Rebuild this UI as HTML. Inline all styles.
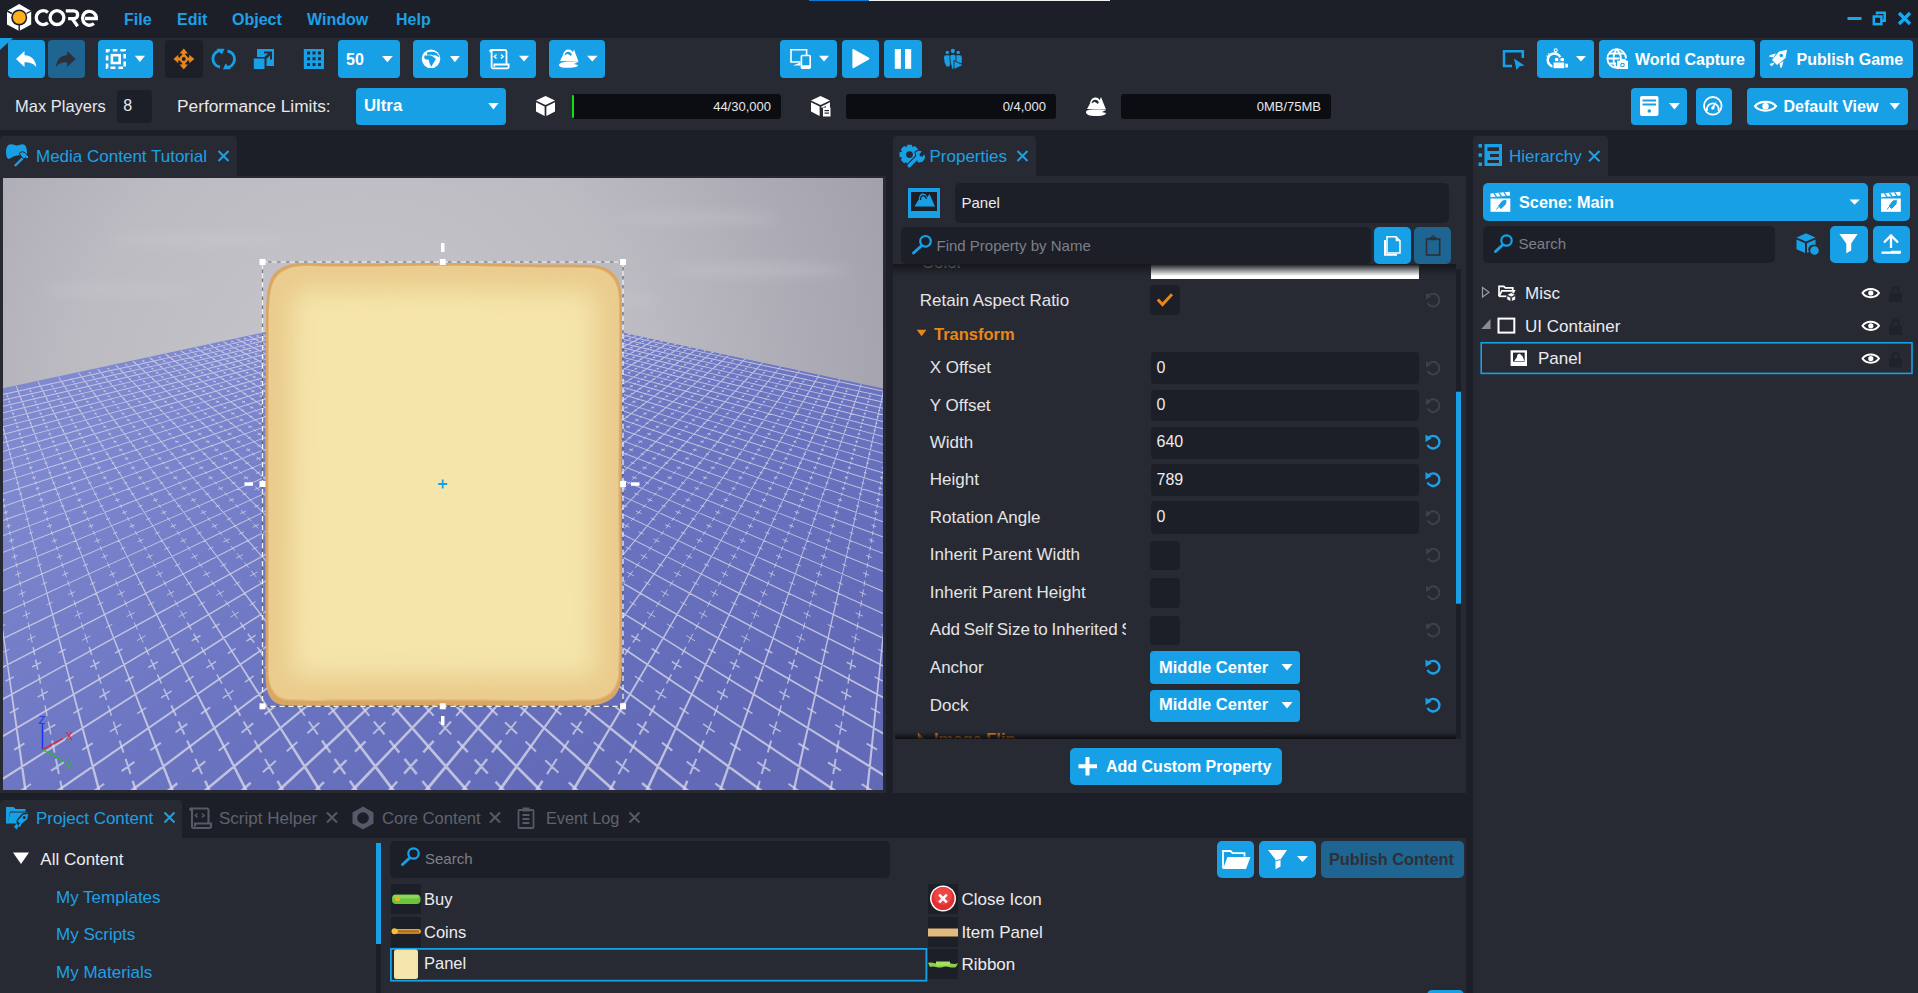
<!DOCTYPE html>
<html><head><meta charset="utf-8">
<style>
*{box-sizing:border-box;margin:0;padding:0}
html,body{width:1918px;height:993px;overflow:hidden;background:#1c1f27;font-family:"Liberation Sans",sans-serif;color:#e4e4e6}
.a{position:absolute}
.t{position:absolute;white-space:nowrap;line-height:20px;height:20px}
.btn{position:absolute;background:#18a0e6;border-radius:4px}
.dk{position:absolute;background:#1c1f27;border-radius:4px}
.b{font-weight:bold}
.blue{color:#1ea0e6}
.w{color:#fff}
svg{position:absolute;overflow:visible}
.caret{position:absolute;width:0;height:0;border-left:6px solid transparent;border-right:6px solid transparent;border-top:7px solid #fff}
</style></head>
<body>
<!-- MENU BAR -->
<div class="a" style="left:0;top:0;width:1918px;height:38px;background:#1c1f28"></div>
<div class="a" style="left:809px;top:0;width:60px;height:1.2px;background:#0b78d8"></div>
<div class="a" style="left:869px;top:0;width:241px;height:1.2px;background:#f0f0f0"></div>

<!-- TOOLBAR -->
<div class="a" style="left:0;top:38px;width:1918px;height:92px;background:#272a33"></div>

<!-- LOGO -->
<svg style="left:0;top:0" width="100" height="36">
<polygon points="19.2,4 31.2,11 31.2,24.5 19.2,31 7,24.5 7,11" fill="#fff"/>
<circle cx="19.2" cy="17.5" r="8" fill="#1c1f28"/>
<line x1="19.2" y1="25" x2="19.2" y2="31" stroke="#1c1f28" stroke-width="1.4"/>
<line x1="12" y1="13.5" x2="7" y2="11" stroke="#1c1f28" stroke-width="1.4"/>
<line x1="26.4" y1="13.5" x2="31.2" y2="11" stroke="#1c1f28" stroke-width="1.4"/>
<circle cx="19.3" cy="17.4" r="6.4" fill="#fdb01a"/>
<g fill="none" stroke="#fff" stroke-width="3.3">
<path d="M47.9,12.5 A6.95,6.95 0 1 0 47.9,22.7"/>
<circle cx="57" cy="17.6" r="6.9"/>
<path d="M65.8,10.85 H73.75 A3.9,3.9 0 0 1 73.75,18.65 H68.1"/>
<path d="M72.3,18.8 L77.6,26.2" stroke-linecap="butt"/>
<path d="M85,18.5 H97.9 M96.4,18.5 A6.95,6.95 0 1 0 93.9,23.6"/>
</g>
</svg>
<!-- MENU -->
<div class="t b blue" style="left:124px;top:9.8px;font-size:16px">File</div>
<div class="t b blue" style="left:177px;top:9.8px;font-size:16px">Edit</div>
<div class="t b blue" style="left:232px;top:9.8px;font-size:16px">Object</div>
<div class="t b blue" style="left:307px;top:9.8px;font-size:16px">Window</div>
<div class="t b blue" style="left:396px;top:9.8px;font-size:16px">Help</div>
<!-- window controls -->
<svg style="left:1840px;top:5px" width="78" height="28" viewBox="1840 5 78 28">
<rect x="1847.5" y="17" width="14" height="3" fill="#18a8ee"/>
<g fill="none" stroke="#18a8ee" stroke-width="2.5">
<path d="M1877,14.5 V12.7 H1884.7 V20.7 H1882"/>
<rect x="1873.8" y="16.5" width="7.6" height="7.6"/>
</g>
<path d="M1899,13 L1910,24 M1910,13 L1899,24" stroke="#18a8ee" stroke-width="3.3"/>
</svg>

<!-- TOOLBAR ROW 1 -->
<svg style="left:0;top:38px" width="14" height="13"><polygon points="0,0 13,0 0,12" fill="#18a0e6"/></svg>
<div class="btn" style="left:8px;top:40px;width:37px;height:38px"></div>
<div class="btn" style="left:48px;top:40px;width:37px;height:38px;background:#1f6591"></div>
<svg style="left:0;top:0" width="100" height="90">
<path d="M16,59 L24.5,51 L24.5,55.3 C31,55.3 35.5,59.5 36.3,67 C33,63.2 29.5,62.3 24.5,62.3 L24.5,67 Z" fill="#fff"/>
<path d="M75.6,59 L67.1,51 L67.1,55.3 C60.6,55.3 56.8,59.5 56,67 C59,63.2 62.1,62.3 67.1,62.3 L67.1,67 Z" fill="#2d3038"/>
</svg>
<div class="btn" style="left:98px;top:40px;width:55px;height:38px"></div>
<svg style="left:0;top:0" width="160" height="90">
<rect x="107.1" y="50.2" width="17.6" height="17.6" fill="none" stroke="#fff" stroke-width="2.6" stroke-dasharray="5 3 4.6 3" stroke-dashoffset="2.3"/>
<rect x="111.9" y="55.2" width="7.8" height="7.8" fill="none" stroke="#fff" stroke-width="2.6"/>
<polygon points="134.8,55.8 145,55.8 139.9,62" fill="#fff"/>
</svg>
<div class="dk" style="left:165px;top:40px;width:37.5px;height:38px"></div>
<svg style="left:0;top:0" width="340" height="90">
<g fill="#e8861a">
<path d="M183.75,48.5 L188,53.5 L185.3,53.5 L185.3,57.4 L189.2,57.4 L189.2,54.7 L194.4,59 L189.2,63.3 L189.2,60.6 L185.3,60.6 L185.3,64.5 L188,64.5 L183.75,69.5 L179.5,64.5 L182.2,64.5 L182.2,60.6 L178.3,60.6 L178.3,63.3 L173.5,59 L178.3,54.7 L178.3,57.4 L182.2,57.4 L182.2,53.5 L179.5,53.5 Z"/>
<circle cx="183.75" cy="59" r="4.2"/>
</g>
<circle cx="183.75" cy="59" r="1.9" fill="#1c1f27"/>
<g fill="none" stroke="#18a0e6" stroke-width="2.8">
<path d="M221,50.5 A8.3,8.3 0 0 0 220,67"/>
<path d="M226.5,67.5 A8.3,8.3 0 0 0 227.5,51"/>
</g>
<g fill="#18a0e6">
<polygon points="216.5,48.8 224.5,48.8 222,54.5"/>
<polygon points="231,69.2 223,69.2 225.5,63.5"/>
<rect x="253.8" y="58.5" width="10.7" height="10.5"/>
<path d="M257,49 H274 V66 H266.5 V59 L270,55.5 V59.5 H272 V51.5 H264 V53.5 H268 L264.5,57 H257 Z"/>
<path d="M303.8,49 H324 V69 H303.8 Z M307,51.6 V54.6 H310 V51.6 Z M312.5,51.6 V54.6 H315.5 V51.6 Z M318,51.6 V54.6 H321 V51.6 Z M307,57.2 V60.2 H310 V57.2 Z M312.5,57.2 V60.2 H315.5 V57.2 Z M318,57.2 V60.2 H321 V57.2 Z M307,62.9 V65.9 H310 V62.9 Z M312.5,62.9 V65.9 H315.5 V62.9 Z M318,62.9 V65.9 H321 V62.9 Z" fill-rule="evenodd"/>
</g>
</svg>
<div class="btn" style="left:338px;top:40px;width:62px;height:38px"></div>
<div class="t b w" style="left:346px;top:50.2px;font-size:16px">50</div>
<div class="btn" style="left:413px;top:40px;width:55px;height:38px"></div>
<div class="btn" style="left:480px;top:40px;width:56px;height:38px"></div>
<div class="btn" style="left:549px;top:40px;width:56px;height:38px"></div>
<svg style="left:0;top:0" width="620" height="90">
<g fill="#fff">
<polygon points="382,56 392.8,56 387.4,62.2"/>
<polygon points="450,56 459.8,56 454.9,62.2"/>
<polygon points="519,55.8 529,55.8 524,61.6"/>
<polygon points="587,55.8 597.7,55.8 592.3,61.6"/>
</g>
<circle cx="431" cy="58.8" r="9.3" fill="#fff"/>
<path d="M424.5,55.5 L430,55.3 L432,56 C433.3,57.3 434.8,58 436,58.8 L434.5,61.5 L432.6,64.5 L431.4,66.8 L429.8,64 L428.6,59.8 L425,59.2 L424.2,57.5 Z" fill="#18a0e6"/>
<path d="M426.8,52.8 C429.5,51.3 434,51.4 436.5,53 L438.6,55.2 L439.3,57.3 L437.3,56.2 C436,55.2 434.7,55 433.6,55.4 L431.6,54.8 L427.2,54.7 Z" fill="#18a0e6"/>
<path d="M433.5,56.6 L435.3,55.8 L436.6,56.8 L435,57.5 Z" fill="#fff"/>
<g fill="none" stroke="#fff" stroke-width="1.8">
<path d="M490,51.5 A1.5,1.5 0 0 1 492,50 H505 A1.6,1.6 0 0 1 506.5,51.5 V63.8 M490,51.5 H491.6 V67 A1.5,1.5 0 0 0 493.1,68.3 H507.2 A1.4,1.4 0 0 0 508.6,66.8 V64.5 H494.4 V66.8"/>
<path d="M496.5,54.5 L494.3,56.5 L496.5,58.5 M501,54.5 L503.2,56.5 L501,58.5" stroke-width="1.4"/>
</g>
<g fill="#fff">
<path d="M559,65 C559,62 566,61 578,62 L574,64 L578,65 C578,67.5 572,67.8 568,67.8 C562,67.8 559,67 559,65 Z"/>
<path d="M560,61 L563,55 C563.5,51.5 566,49.5 568.5,49.5 C571,49.5 573,51.5 573.3,54 L572,55 C571.5,53 570,51.8 568.3,51.8 C566,51.8 564.8,53.3 564.6,55.5 L567.5,53.8 L571,56 L574,49.5 L578.5,61.8 Z"/>
</g>
</svg>
<div class="btn" style="left:780px;top:40px;width:57px;height:38px"></div>
<div class="btn" style="left:842px;top:40px;width:37px;height:38px"></div>
<div class="btn" style="left:884px;top:40px;width:38px;height:38px"></div>
<svg style="left:0;top:0" width="970" height="90">
<g fill="#fff">
<polygon points="819,55.8 829,55.8 824,61.5"/>
<path d="M852.4,50 Q852.4,48.5 853.8,49.3 L869,57.8 Q870,58.6 869,59.4 L853.8,68 Q852.4,68.8 852.4,67.3 Z"/>
<rect x="894.8" y="49" width="6.1" height="19.8"/>
<rect x="905" y="49" width="6.2" height="19.8"/>
</g>
<g fill="none" stroke="#fff" stroke-width="1.6">
<path d="M800.5,62 H791 V49.8 H806.6 V55"/>
<rect x="801.4" y="55.5" width="8.8" height="12.6" rx="0.8"/>
</g>
<polygon points="793,65.5 800.5,62.5 800.5,65.5" fill="#fff"/>
<rect x="801.4" y="65.3" width="8.8" height="2.6" fill="#fff"/>
<g fill="#18a0e6">
<circle cx="947.3" cy="52.4" r="1.7"/><circle cx="952.8" cy="50.9" r="2.1"/><circle cx="958.2" cy="52.4" r="1.7"/>
<path d="M944,57.5 Q944,55.3 946,55.3 H948.8 Q950.5,55.3 950.5,57.5 V62.5 L949.3,66.5 H946.5 L944.6,62.5 Z"/>
<path d="M955,57.5 Q955,55.3 957,55.3 H959.8 Q961.8,55.3 961.8,57.5 V62.5 L959.5,63.5 H955 Z"/>
<path d="M949.8,56.5 Q949.8,54.3 952,54.3 H953.8 Q956,54.3 956,56.5 V61 L953.5,69.5 H952 L950.2,62 Z" stroke="#272a33" stroke-width="0.9"/>
<polygon points="954,60.6 963.4,65 954,69.4" stroke="#272a33" stroke-width="0.9"/>
</g>
<g fill="none" stroke="#18a0e6" stroke-width="2.5">
<path d="M1512,66 H1504 V51.2 H1522.8 V58"/>
</g>
<polygon points="1514,58.5 1524.5,65.5 1519.5,66.3 1516.5,70 Z" fill="#18a0e6"/>
</svg>
<div class="btn" style="left:1537px;top:40px;width:57px;height:38px"></div>
<div class="btn" style="left:1599px;top:40px;width:156px;height:38px"></div>
<div class="btn" style="left:1760px;top:40px;width:153px;height:38px"></div>
<div class="t b w" style="left:1635px;top:50.2px;font-size:16px">World Capture</div>
<div class="t b w" style="left:1796.5px;top:50.2px;font-size:16px">Publish Game</div>
<svg style="left:0;top:0" width="1918" height="130">
<polygon points="1576,56 1586,56 1581,61.5" fill="#fff"/>
<circle cx="1555.7" cy="50.3" r="1.5" fill="none" stroke="#fff" stroke-width="1.1"/>
<rect x="1555.1" y="51.6" width="1.2" height="2.6" fill="#fff"/>
<circle cx="1554.3" cy="60" r="6.6" fill="none" stroke="#fff" stroke-width="2.5"/>
<path d="M1548.2,53.3 L1549.5,54.6 M1546.5,55.8 L1548,56.5" stroke="#fff" stroke-width="1.1"/>
<g fill="#fff" stroke="#18a0e6" stroke-width="1.1">
<circle cx="1556.6" cy="59.6" r="2.5"/><circle cx="1562.2" cy="59.6" r="2.5"/>
<rect x="1553" y="62" width="11.8" height="6.8" rx="0.8"/>
</g>
<rect x="1565.3" y="63.7" width="2.6" height="3.8" fill="#fff"/>
<g fill="none" stroke="#fff" stroke-width="1.8">
<path d="M1617,67.8 A9.3,9.3 0 1 1 1626,58.5"/>
<path d="M1616.8,49.5 C1612.5,53 1612.5,64.5 1616.8,67.8 M1616.8,49.5 C1621,53 1621.5,59 1620.5,62 M1608,58.5 H1619.5 M1609.5,53.5 H1624 M1609.5,63.5 H1616"/>
</g>
<path d="M1617,60.8 H1620.5 L1622,59 H1625 L1626.5,60.8 H1628 V69 H1617 Z" fill="#fff"/>
<circle cx="1622.5" cy="65" r="2.3" fill="#18a0e6"/>
<circle cx="1622.5" cy="65" r="1.2" fill="#fff"/>
<path d="M1787,49.8 L1779,51.5 L1772,60 L1777,65 L1785.5,58 Z" fill="#fff"/>
<circle cx="1781.3" cy="55.5" r="1.8" fill="#18a0e6"/>
<path d="M1776,53.5 L1770,55 L1768.8,56.5 L1773.5,57.5 Z M1783.5,61 L1782,67 L1780.5,68.2 L1779.5,63.5 Z M1774.5,62.5 L1769.5,64 L1771.5,66.2 L1773.5,64.5 Z" fill="#fff"/>
</svg>

<!-- TOOLBAR ROW 2 -->
<div class="t" style="left:15px;top:96.2px;font-size:16.5px;color:#e8e8ea">Max Players</div>
<div class="dk" style="left:117px;top:90px;width:34.5px;height:32.5px"></div>
<div class="t" style="left:123.3px;top:95.5px;font-size:16px;color:#e8e8ea">8</div>
<div class="t" style="left:177px;top:96px;font-size:17.3px;color:#e8e8ea">Performance Limits:</div>
<div class="btn" style="left:356px;top:88px;width:150px;height:36.5px"></div>
<div class="t b w" style="left:364px;top:96px;font-size:16.8px">Ultra</div>
<div class="a" style="left:572px;top:94px;width:209px;height:25px;background:#0b0d12;border-radius:3px"></div>
<div class="a" style="left:572.2px;top:95px;width:1.6px;height:23px;background:#10e010;border-radius:1px"></div>
<div class="a" style="left:846px;top:94px;width:210px;height:25px;background:#0b0d12;border-radius:3px"></div>
<div class="a" style="left:1121px;top:94px;width:209.5px;height:25px;background:#0b0d12;border-radius:3px"></div>
<div class="t" style="left:600px;width:171px;text-align:right;top:96.5px;font-size:13px;color:#e8e8ea">44/30,000</div>
<div class="t" style="left:880px;width:166px;text-align:right;top:96.5px;font-size:13px;color:#e8e8ea">0/4,000</div>
<div class="t" style="left:1150px;width:171px;text-align:right;top:96.5px;font-size:13px;color:#e8e8ea">0MB/75MB</div>
<div class="btn" style="left:1631px;top:88px;width:56px;height:36.5px"></div>
<div class="btn" style="left:1695.5px;top:88px;width:36.5px;height:36.5px"></div>
<div class="btn" style="left:1747px;top:88px;width:161px;height:36.5px"></div>
<div class="t b w" style="left:1783.5px;top:97.2px;font-size:16px">Default View</div>
<svg style="left:0;top:0" width="1918" height="130">
<polygon points="488.3,103 498.6,103 493.4,109.5" fill="#fff"/>
<g fill="#fff">
<path d="M545.5,96 L555,100.5 L545.5,105 L536,100.5 Z"/>
<path d="M536,102.2 L544.6,106.5 V116 L536,111.5 Z"/>
<path d="M555,102.2 L546.4,106.5 V116 L555,111.5 Z"/>
<path d="M820.5,96 L830,100.5 L820.5,105 L811,100.5 Z"/>
<path d="M811,102.2 L819.6,106.5 V116 L811,111.5 Z"/>
<path d="M830,102.2 L821.4,106.5 V108 L826,106 V112 L830,110 Z"/>
<rect x="823" y="107.5" width="7.5" height="9" fill="#fff"/>
</g>
<rect x="824.5" y="110" width="4.5" height="1.2" fill="#272a33"/>
<rect x="824.5" y="112.5" width="4.5" height="1.2" fill="#272a33"/>
<g fill="#fff">
<path d="M1086,112 C1086,109.5 1092,109 1106,110 L1102,112 L1106,113 C1106,115.5 1100,116 1096,116 C1089,116 1086,114.5 1086,112 Z"/>
<path d="M1087,109 L1090,103.5 C1090.5,99.5 1093,97.5 1095.5,97.5 C1098,97.5 1100,99.5 1100.3,102 L1099,103 C1098.5,101 1097,99.8 1095.3,99.8 C1093,99.8 1091.8,101.3 1091.6,103.5 L1094.5,101.8 L1098,104 L1101,97 L1106,109.5 Z"/>
</g>
<rect x="1640" y="96" width="18.5" height="20" rx="2" fill="#fff"/>
<rect x="1642.5" y="99.5" width="13.5" height="2" fill="#18a0e6"/>
<rect x="1642.5" y="103.5" width="13.5" height="2" fill="#18a0e6"/>
<circle cx="1649.3" cy="111" r="1.8" fill="#18a0e6"/>
<polygon points="1669,103 1679.8,103 1674.4,109.6" fill="#fff"/>
<circle cx="1712.8" cy="105.8" r="8.8" fill="none" stroke="#fff" stroke-width="1.8"/>
<path d="M1707,111 A6,6 0 1 1 1718.6,111" fill="none" stroke="#fff" stroke-width="1.8"/>
<path d="M1711.5,107.8 L1716.5,101 L1714,108.6 Z" fill="#fff"/>
<circle cx="1712.8" cy="108" r="1.6" fill="#fff"/>
<path d="M1755,106.2 C1759,100.5 1772,100.5 1776,106.2 C1772,112 1759,112 1755,106.2 Z" fill="none" stroke="#fff" stroke-width="2.2"/>
<circle cx="1765.5" cy="106.2" r="3.2" fill="#fff"/>
<polygon points="1889.6,103 1900,103 1894.8,109.6" fill="#fff"/>
</svg>

<!-- PANELS -->
<!-- viewport -->
<div class="a" style="left:0;top:136px;width:237px;height:41px;background:#272a33;border-radius:4px 4px 0 0"></div>
<div class="a" style="left:0;top:176px;width:886px;height:617px;background:#272a33"></div>
<!-- properties -->
<div class="a" style="left:893px;top:136px;width:143px;height:41px;background:#272a33;border-radius:4px 4px 0 0"></div>
<div class="a" style="left:893px;top:176px;width:573px;height:617px;background:#272a33"></div>
<!-- hierarchy -->
<div class="a" style="left:1473px;top:136px;width:135px;height:41px;background:#272a33;border-radius:4px 4px 0 0"></div>
<div class="a" style="left:1473px;top:176px;width:445px;height:817px;background:#272a33"></div>
<!-- bottom -->
<div class="a" style="left:0;top:800px;width:182px;height:38px;background:#272a33;border-radius:4px 4px 0 0"></div>
<div class="a" style="left:0;top:838px;width:1466px;height:155px;background:#272a33"></div>

<!-- VIEWPORT -->
<svg style="left:3px;top:178px;overflow:hidden" width="880" height="612" viewBox="3 178 880 612">
<defs>
<radialGradient id="sky" gradientUnits="userSpaceOnUse" cx="360" cy="400" r="580"><stop offset="0" stop-color="#c8c7cd"/><stop offset="0.5" stop-color="#bcbbc2"/><stop offset="1" stop-color="#a09fab"/></radialGradient>
<linearGradient id="floor" gradientUnits="userSpaceOnUse" x1="300" y1="320" x2="560" y2="800"><stop offset="0" stop-color="#7f89d0"/><stop offset="0.5" stop-color="#6c76c2"/><stop offset="1" stop-color="#626ab8"/></linearGradient>
<clipPath id="fc"><polygon points="443,294 -2000,817 883,2000 2800,800"/></clipPath>
<radialGradient id="pg" cx="0.58" cy="0.42" r="0.62"><stop offset="0" stop-color="#f7e9b3"/><stop offset="0.6" stop-color="#f5e4aa"/><stop offset="0.9" stop-color="#efd59a"/><stop offset="1" stop-color="#e6c689"/></radialGradient>
<filter id="blur4"><feGaussianBlur stdDeviation="6"/></filter>
<filter id="blur1"><feGaussianBlur stdDeviation="0.75"/></filter>
</defs>
<rect x="3" y="178" width="880" height="612" fill="url(#sky)"/>
<g filter="url(#blur4)" fill="#cfced4" opacity="0.35">
<ellipse cx="200" cy="240" rx="90" ry="6"/><ellipse cx="120" cy="290" rx="80" ry="5"/><ellipse cx="700" cy="218" rx="80" ry="5"/><ellipse cx="760" cy="270" rx="90" ry="6"/><ellipse cx="600" cy="300" rx="60" ry="5"/>
</g>
<polygon points="443,294 -2000,817 -2000,2000 2800,2000 2800,800" fill="url(#floor)"/>
<g clip-path="url(#fc)" filter="url(#blur1)">
<g fill="#d4d5e6" fill-opacity="0.8">
<path d="M449.5,294.9 L434.6,298.2 L418.8,301.8 L401.8,305.5 L383.8,309.5 L364.4,313.8 L343.6,318.4 L321.3,323.4 L297.1,328.8 L271.0,334.6 L242.6,340.9 L211.6,347.7 L177.7,355.3 L140.5,363.5 L99.4,372.6 L53.7,382.8 L2.7,394.1 L-44.5,404.6 L-44.3,405.5 L2.9,395.0 L53.9,383.7 L99.6,373.5 L140.7,364.4 L177.9,356.1 L211.8,348.6 L242.8,341.7 L271.2,335.4 L297.3,329.6 L321.5,324.3 L343.8,319.3 L364.6,314.7 L384.0,310.4 L402.0,306.4 L419.0,302.6 L434.8,299.1 L449.7,295.8Z M456.3,296.4 L441.6,299.7 L426.0,303.3 L409.3,307.1 L391.5,311.1 L372.4,315.5 L351.9,320.2 L329.9,325.2 L306.1,330.6 L280.3,336.5 L252.3,342.9 L221.8,349.9 L188.4,357.5 L151.7,365.9 L111.1,375.1 L66.1,385.4 L15.8,396.8 L-40.6,409.7 L-40.4,410.6 L16.0,397.7 L66.3,386.2 L111.3,376.0 L151.9,366.7 L188.6,358.4 L222.0,350.7 L252.5,343.8 L280.5,337.4 L306.3,331.5 L330.1,326.1 L352.1,321.0 L372.6,316.4 L391.7,312.0 L409.5,308.0 L426.2,304.2 L441.8,300.6 L456.5,297.2Z M463.3,297.8 L448.8,301.2 L433.4,304.8 L417.0,308.7 L399.4,312.8 L380.6,317.2 L360.5,321.9 L338.7,327.0 L315.3,332.5 L289.9,338.5 L262.3,345.0 L232.2,352.0 L199.3,359.8 L163.1,368.2 L123.2,377.6 L78.8,388.0 L29.3,399.6 L-26.3,412.7 L-46.4,417.4 L-46.2,418.3 L-26.1,413.6 L29.5,400.5 L79.0,388.9 L123.4,378.5 L163.4,369.1 L199.5,360.6 L232.4,352.9 L262.5,345.9 L290.1,339.4 L315.5,333.4 L338.9,327.9 L360.7,322.8 L380.8,318.1 L399.6,313.7 L417.2,309.6 L433.6,305.7 L449.0,302.1 L463.5,298.7Z M470.5,299.3 L456.2,302.8 L441.0,306.4 L424.9,310.3 L407.6,314.5 L389.1,319.0 L369.2,323.8 L347.8,328.9 L324.7,334.5 L299.7,340.6 L272.6,347.1 L243.0,354.3 L210.6,362.1 L174.9,370.7 L135.6,380.2 L91.9,390.8 L43.2,402.5 L-11.6,415.8 L-41.6,423.0 L-41.4,423.9 L-11.4,416.7 L43.4,403.4 L92.1,391.6 L135.8,381.1 L175.1,371.6 L210.8,363.0 L243.2,355.2 L272.8,348.0 L299.9,341.4 L324.9,335.4 L348.0,329.8 L369.4,324.7 L389.3,319.9 L407.8,315.4 L425.1,311.2 L441.2,307.3 L456.4,303.6 L470.7,300.2Z M477.8,300.9 L463.8,304.3 L448.9,308.1 L433.0,312.0 L416.0,316.3 L397.8,320.8 L378.2,325.7 L357.2,330.9 L334.4,336.6 L309.8,342.7 L283.1,349.3 L254.0,356.6 L222.1,364.5 L187.1,373.2 L148.3,382.9 L105.4,393.6 L57.4,405.5 L3.5,418.9 L-46.8,431.5 L-46.6,432.3 L3.7,419.8 L57.6,406.4 L105.6,394.4 L148.6,383.7 L187.3,374.1 L222.3,365.4 L254.2,357.5 L283.3,350.2 L310.1,343.5 L334.7,337.4 L357.4,331.8 L378.4,326.5 L398.0,321.7 L416.2,317.1 L433.2,312.9 L449.1,308.9 L464.0,305.2 L478.0,301.7Z M485.4,302.4 L471.6,306.0 L456.9,309.7 L441.3,313.8 L424.6,318.1 L406.7,322.7 L387.4,327.6 L366.8,332.9 L344.4,338.6 L320.2,344.8 L294.0,351.6 L265.3,358.9 L234.0,367.0 L199.5,375.8 L161.5,385.6 L119.2,396.5 L72.0,408.6 L19.0,422.2 L-40.9,437.6 L-40.7,438.5 L19.3,423.1 L72.3,409.4 L119.4,397.3 L161.7,386.5 L199.7,376.7 L234.2,367.9 L265.5,359.8 L294.2,352.5 L320.5,345.7 L344.6,339.5 L367.0,333.8 L387.7,328.5 L406.9,323.5 L424.8,318.9 L441.5,314.6 L457.2,310.6 L471.8,306.8 L485.6,303.3Z M493.2,304.1 L479.6,307.7 L465.2,311.5 L449.9,315.6 L433.4,319.9 L415.8,324.6 L397.0,329.6 L376.6,335.0 L354.7,340.8 L330.9,347.1 L305.1,353.9 L277.0,361.4 L246.2,369.5 L212.3,378.5 L174.9,388.4 L133.4,399.4 L87.1,411.7 L35.0,425.5 L-23.9,441.1 L-45.3,446.8 L-45.1,447.7 L-23.7,442.0 L35.3,426.4 L87.3,412.6 L133.7,400.3 L175.2,389.3 L212.6,379.4 L246.4,370.4 L277.2,362.3 L305.3,354.8 L331.2,347.9 L354.9,341.7 L376.9,335.8 L397.2,330.4 L416.1,325.4 L433.7,320.8 L450.1,316.4 L465.5,312.3 L479.9,308.5 L493.4,304.9Z M501.2,305.7 L487.9,309.4 L473.8,313.3 L458.7,317.4 L442.5,321.8 L425.3,326.5 L406.7,331.6 L386.8,337.1 L365.2,343.0 L341.9,349.4 L316.6,356.3 L289.0,363.9 L258.7,372.2 L225.5,381.3 L188.8,391.3 L148.1,402.5 L102.6,415.0 L51.5,429.0 L-6.4,444.8 L-49.4,456.6 L-49.1,457.5 L-6.1,445.7 L51.7,429.8 L102.8,415.8 L148.3,403.4 L189.0,392.2 L225.7,382.1 L259.0,373.0 L289.2,364.8 L316.8,357.2 L342.2,350.2 L365.5,343.9 L387.0,338.0 L407.0,332.5 L425.5,327.4 L442.8,322.7 L458.9,318.3 L474.0,314.1 L488.1,310.3 L501.4,306.6Z M509.5,307.5 L496.4,311.2 L482.5,315.1 L467.7,319.3 L451.9,323.8 L435.0,328.6 L416.8,333.7 L397.2,339.3 L376.1,345.3 L353.3,351.7 L328.4,358.8 L301.3,366.5 L271.7,374.9 L239.1,384.1 L203.1,394.3 L163.1,405.6 L118.5,418.3 L68.4,432.5 L11.7,448.6 L-41.7,463.7 L-41.4,464.6 L11.9,449.4 L68.7,433.4 L118.8,419.1 L163.4,406.5 L203.3,395.2 L239.3,385.0 L271.9,375.7 L301.6,367.3 L328.6,359.7 L353.5,352.6 L376.4,346.1 L397.5,340.1 L417.1,334.6 L435.2,329.4 L452.2,324.6 L468.0,320.2 L482.8,316.0 L496.7,312.0 L509.7,308.3Z M517.9,309.2 L505.2,313.0 L491.6,317.0 L477.1,321.2 L461.6,325.8 L445.0,330.7 L427.2,335.9 L408.0,341.5 L387.3,347.6 L364.9,354.2 L340.6,361.3 L314.0,369.1 L285.0,377.7 L253.1,387.0 L217.8,397.4 L178.7,408.9 L135.0,421.7 L85.8,436.1 L30.3,452.5 L-33.2,471.1 L-44.6,474.4 L-44.4,475.3 L-32.9,471.9 L30.5,453.3 L86.1,437.0 L135.2,422.6 L178.9,409.7 L218.0,398.2 L253.3,387.9 L285.2,378.5 L314.3,370.0 L340.8,362.2 L365.2,355.0 L387.6,348.5 L408.3,342.4 L427.4,336.8 L445.3,331.5 L461.8,326.7 L477.3,322.1 L491.8,317.8 L505.4,313.9 L518.2,310.1Z M526.7,311.1 L514.2,314.9 L500.9,318.9 L486.7,323.3 L471.5,327.9 L455.3,332.8 L437.9,338.1 L419.1,343.8 L398.9,350.0 L376.9,356.7 L353.1,363.9 L327.1,371.9 L298.7,380.5 L267.5,390.0 L232.9,400.5 L194.6,412.2 L151.9,425.2 L103.8,439.9 L49.4,456.5 L-12.7,475.4 L-47.1,485.9 L-46.9,486.7 L-12.4,476.2 L49.7,457.3 L104.1,440.7 L152.1,426.1 L194.9,413.1 L233.2,401.4 L267.7,390.9 L299.0,381.4 L327.4,372.7 L353.4,364.8 L377.2,357.6 L399.1,350.9 L419.4,344.7 L438.1,339.0 L455.6,333.7 L471.8,328.7 L487.0,324.1 L501.2,319.8 L514.5,315.7 L527.0,311.9Z M535.7,313.0 L523.5,316.8 L510.5,320.9 L496.6,325.3 L481.8,330.0 L465.9,335.0 L448.9,340.4 L430.6,346.2 L410.8,352.5 L389.3,359.3 L366.0,366.6 L340.6,374.7 L312.8,383.5 L282.3,393.1 L248.6,403.8 L211.1,415.7 L169.3,428.9 L122.3,443.8 L69.1,460.6 L8.5,479.8 L-49.1,498.0 L-48.8,498.8 L8.7,480.6 L69.4,461.4 L122.6,444.6 L169.6,429.7 L211.4,416.5 L248.8,404.7 L282.6,394.0 L313.1,384.3 L340.9,375.5 L366.3,367.5 L389.6,360.1 L411.0,353.4 L430.8,347.1 L449.2,341.3 L466.2,335.9 L482.1,330.9 L496.9,326.2 L510.8,321.8 L523.8,317.7 L536.0,313.8Z M545.0,314.9 L533.1,318.8 L520.4,323.0 L506.9,327.5 L492.4,332.2 L476.9,337.3 L460.3,342.8 L442.4,348.7 L423.0,355.1 L402.1,361.9 L379.4,369.4 L354.6,377.6 L327.4,386.5 L297.6,396.3 L264.7,407.2 L228.1,419.2 L187.3,432.6 L141.4,447.7 L89.5,464.8 L30.3,484.3 L-38.0,506.8 L-50.4,510.9 L-50.1,511.7 L-37.7,507.6 L30.5,485.2 L89.8,465.7 L141.7,448.6 L187.6,433.5 L228.4,420.1 L265.0,408.0 L297.9,397.2 L327.7,387.4 L354.8,378.4 L379.6,370.3 L402.4,362.8 L423.3,355.9 L442.6,349.6 L460.5,343.7 L477.2,338.2 L492.7,333.1 L507.1,328.3 L520.7,323.9 L533.4,319.7 L545.3,315.8Z M554.6,316.9 L543.0,320.9 L530.6,325.1 L517.4,329.7 L503.3,334.5 L488.2,339.7 L472.0,345.3 L454.5,351.2 L435.7,357.7 L415.3,364.7 L393.1,372.3 L368.9,380.6 L342.5,389.7 L313.4,399.6 L281.3,410.6 L245.6,422.9 L205.8,436.5 L161.1,451.9 L110.5,469.2 L52.7,489.0 L-13.8,511.8 L-51.0,524.6 L-50.7,525.5 L-13.5,512.7 L53.0,489.9 L110.8,470.1 L161.4,452.7 L206.1,437.4 L245.9,423.7 L281.6,411.5 L313.7,400.5 L342.8,390.5 L369.2,381.4 L393.4,373.2 L415.6,365.6 L436.0,358.6 L454.8,352.1 L472.3,346.1 L488.5,340.5 L503.6,335.4 L517.7,330.5 L530.9,326.0 L543.3,321.7 L554.9,317.8Z M564.5,319.0 L553.2,323.0 L541.2,327.3 L528.3,331.9 L514.6,336.9 L499.9,342.1 L484.1,347.8 L467.1,353.9 L448.7,360.4 L428.9,367.5 L407.3,375.3 L383.8,383.7 L358.0,392.9 L329.7,403.0 L298.4,414.2 L263.7,426.7 L225.0,440.5 L181.5,456.1 L132.2,473.7 L75.9,493.9 L11.2,517.1 L-50.8,539.3 L-50.5,540.1 L11.5,517.9 L76.2,494.7 L132.5,474.6 L181.8,457.0 L225.3,441.4 L264.0,427.5 L298.7,415.1 L330.0,403.9 L358.3,393.8 L384.1,384.5 L407.6,376.1 L429.2,368.4 L449.0,361.3 L467.4,354.7 L484.4,348.6 L500.2,343.0 L514.9,337.7 L528.6,332.8 L541.5,328.2 L553.5,323.9 L564.8,319.8Z M574.8,321.1 L563.8,325.2 L552.1,329.6 L539.6,334.3 L526.2,339.3 L511.9,344.6 L496.6,350.4 L480.1,356.6 L462.2,363.3 L442.9,370.5 L421.9,378.3 L399.1,386.9 L374.0,396.3 L346.5,406.6 L316.2,417.9 L282.4,430.6 L244.8,444.7 L202.5,460.5 L154.6,478.4 L99.9,498.9 L37.0,522.4 L-36.3,549.9 L-49.8,554.9 L-49.4,555.7 L-36.0,550.7 L37.3,523.3 L100.2,499.7 L154.9,479.3 L202.8,461.3 L245.1,445.5 L282.7,431.4 L316.5,418.8 L346.9,407.4 L374.4,397.1 L399.4,387.7 L422.3,379.2 L443.2,371.3 L462.5,364.1 L480.4,357.4 L496.9,351.2 L512.2,345.5 L526.5,340.1 L539.9,335.1 L552.4,330.5 L564.1,326.1 L575.1,322.0Z M585.4,323.3 L574.7,327.5 L563.3,332.0 L551.2,336.7 L538.2,341.8 L524.4,347.3 L509.5,353.1 L493.5,359.4 L476.2,366.2 L457.4,373.5 L437.1,381.5 L414.9,390.2 L390.6,399.7 L363.9,410.2 L334.5,421.8 L301.7,434.6 L265.2,448.9 L224.2,465.0 L177.7,483.3 L124.7,504.1 L63.6,528.0 L-7.5,555.9 L-47.6,571.6 L-47.3,572.5 L-7.2,556.8 L63.9,528.9 L125.0,504.9 L178.0,484.1 L224.5,465.9 L265.5,449.8 L302.1,435.4 L334.8,422.6 L364.3,411.0 L391.0,400.6 L415.2,391.0 L437.4,382.3 L457.8,374.4 L476.5,367.0 L493.8,360.2 L509.8,353.9 L524.7,348.1 L538.6,342.6 L551.5,337.6 L563.6,332.8 L575.0,328.4 L585.7,324.2Z M596.3,325.6 L585.9,329.9 L574.9,334.4 L563.2,339.2 L550.7,344.4 L537.3,349.9 L522.8,355.9 L507.3,362.3 L490.6,369.2 L472.4,376.7 L452.7,384.8 L431.3,393.6 L407.8,403.3 L381.9,414.0 L353.4,425.7 L321.7,438.8 L286.3,453.3 L246.6,469.7 L201.6,488.3 L150.3,509.4 L91.2,533.8 L22.3,562.1 L-44.4,589.6 L-44.0,590.5 L22.7,563.0 L91.5,534.6 L150.6,510.2 L202.0,489.1 L246.9,470.5 L286.7,454.2 L322.1,439.6 L353.7,426.5 L382.3,414.8 L408.1,404.1 L431.6,394.5 L453.1,385.6 L472.8,377.5 L490.9,370.0 L507.7,363.1 L523.2,356.7 L537.6,350.8 L551.0,345.2 L563.6,340.1 L575.3,335.2 L586.3,330.7 L596.6,326.4Z M607.6,328.0 L597.6,332.3 L587.0,336.9 L575.7,341.8 L563.5,347.1 L550.6,352.7 L536.7,358.8 L521.7,365.3 L505.5,372.3 L488.0,379.9 L468.9,388.2 L448.2,397.2 L425.5,407.0 L400.5,417.8 L373.0,429.8 L342.4,443.1 L308.2,457.9 L269.8,474.6 L226.4,493.4 L176.8,514.9 L119.7,539.7 L53.1,568.5 L-25.3,602.5 L-54.7,615.2 L-54.2,616.3 L-24.9,603.5 L53.5,569.4 L120.0,540.6 L177.1,515.8 L226.7,494.2 L270.2,475.4 L308.6,458.7 L342.7,443.9 L373.3,430.6 L400.9,418.7 L425.8,407.8 L448.6,398.0 L469.3,389.0 L488.3,380.7 L505.8,373.1 L522.0,366.1 L537.0,359.6 L550.9,353.6 L563.9,347.9 L576.0,342.7 L587.3,337.8 L598.0,333.1 L608.0,328.8Z M619.3,330.4 L609.7,334.8 L599.4,339.5 L588.5,344.5 L576.9,349.9 L564.4,355.6 L550.9,361.8 L536.5,368.4 L520.9,375.5 L504.0,383.3 L485.7,391.7 L465.7,400.8 L443.8,410.8 L419.8,421.9 L393.2,434.0 L363.7,447.6 L330.8,462.6 L293.8,479.6 L252.0,498.8 L204.2,520.7 L149.2,545.9 L85.1,575.2 L9.5,609.8 L-48.9,636.5 L-48.4,637.6 L10.0,610.8 L85.5,576.1 L149.6,546.7 L204.6,521.5 L252.4,499.6 L294.2,480.4 L331.2,463.5 L364.1,448.4 L393.6,434.9 L420.2,422.7 L444.2,411.7 L466.1,401.6 L486.1,392.5 L504.4,384.1 L521.3,376.3 L536.9,369.2 L551.3,362.6 L564.7,356.4 L577.2,350.7 L588.9,345.4 L599.8,340.4 L610.1,335.7 L619.7,331.3Z M631.4,333.0 L622.2,337.5 L612.3,342.2 L601.9,347.3 L590.6,352.8 L578.6,358.6 L565.8,364.9 L551.9,371.6 L536.9,378.9 L520.7,386.7 L503.1,395.3 L483.9,404.6 L462.8,414.8 L439.7,426.0 L414.2,438.4 L385.9,452.2 L354.3,467.5 L318.7,484.8 L278.5,504.3 L232.6,526.6 L179.7,552.2 L118.1,582.1 L45.5,617.3 L-41.4,659.4 L-40.8,660.6 L46.0,618.4 L118.6,583.1 L180.1,553.1 L233.0,527.4 L278.9,505.1 L319.1,485.6 L354.7,468.3 L386.3,453.0 L414.6,439.2 L440.1,426.8 L463.2,415.6 L484.3,405.4 L503.5,396.1 L521.1,387.5 L537.3,379.7 L552.3,372.4 L566.1,365.7 L579.0,359.4 L591.0,353.6 L602.2,348.1 L612.7,343.0 L622.6,338.3 L631.8,333.8Z M644.0,335.6 L635.1,340.2 L625.7,345.0 L615.7,350.2 L604.9,355.8 L593.4,361.7 L581.1,368.1 L567.8,374.9 L553.5,382.3 L537.9,390.3 L521.1,399.1 L502.7,408.5 L482.5,418.9 L460.4,430.4 L436.0,443.0 L408.8,457.0 L378.5,472.6 L344.5,490.1 L306.0,510.0 L262.0,532.7 L211.3,558.8 L152.4,589.2 L82.8,625.0 L-0.4,667.9 L-48.5,692.6 L-47.8,694.1 L0.3,669.2 L83.4,626.2 L152.9,590.3 L211.8,559.8 L262.5,533.6 L306.4,510.9 L344.9,491.0 L379.0,473.4 L409.3,457.8 L436.4,443.8 L460.8,431.2 L482.9,419.7 L503.1,409.3 L521.5,399.9 L538.3,391.1 L553.9,383.1 L568.2,375.7 L581.5,368.9 L593.9,362.5 L605.3,356.6 L616.1,351.0 L626.1,345.8 L635.6,341.0 L644.4,336.4Z M657.0,338.3 L648.6,343.0 L639.6,347.9 L630.0,353.2 L619.8,358.9 L608.8,364.9 L597.0,371.4 L584.3,378.4 L570.6,385.9 L555.8,394.1 L539.7,403.0 L522.2,412.6 L503.0,423.2 L481.8,434.8 L458.5,447.7 L432.6,461.9 L403.7,477.8 L371.2,495.7 L334.5,515.9 L292.5,539.0 L244.2,565.6 L187.9,596.6 L121.5,633.1 L42.1,676.7 L-54.7,729.9 L-53.8,731.5 L42.8,678.1 L122.2,634.3 L188.5,597.7 L244.7,566.7 L293.0,540.0 L335.0,516.9 L371.7,496.6 L404.2,478.7 L433.1,462.8 L459.0,448.5 L482.3,435.6 L503.4,424.0 L522.6,413.4 L540.2,403.7 L556.3,394.9 L571.1,386.7 L584.8,379.2 L597.4,372.2 L609.2,365.7 L620.2,359.6 L630.4,354.0 L640.0,348.7 L649.0,343.8 L657.5,339.1Z M670.5,341.2 L662.5,345.9 L654.0,350.9 L644.9,356.3 L635.1,362.1 L624.7,368.2 L613.5,374.9 L601.5,382.0 L588.5,389.7 L574.4,398.0 L559.1,407.0 L542.4,416.9 L524.1,427.6 L504.1,439.5 L481.9,452.6 L457.3,467.1 L429.8,483.3 L399.0,501.5 L364.0,522.1 L324.1,545.6 L278.2,572.7 L224.7,604.3 L161.7,641.4 L86.2,685.9 L-5.8,740.1 L-41.1,760.9 L-40.0,762.7 L-4.8,741.8 L87.0,687.4 L162.4,642.7 L225.4,605.4 L278.9,573.8 L324.8,546.7 L364.6,523.1 L399.5,502.4 L430.4,484.2 L457.8,467.9 L482.4,453.4 L504.5,440.3 L524.6,428.4 L542.9,417.6 L559.5,407.8 L574.8,398.7 L588.9,390.4 L601.9,382.7 L614.0,375.6 L625.2,369.0 L635.6,362.9 L645.3,357.1 L654.4,351.7 L663.0,346.7 L671.0,341.9Z M684.6,344.1 L677.0,348.9 L668.9,354.1 L660.3,359.6 L651.1,365.4 L641.2,371.7 L630.7,378.4 L619.3,385.7 L607.0,393.5 L593.7,402.0 L579.2,411.2 L563.4,421.3 L546.2,432.2 L527.2,444.3 L506.2,457.7 L483.0,472.5 L457.0,488.9 L427.7,507.5 L394.7,528.5 L357.0,552.5 L313.6,580.1 L263.0,612.2 L203.3,650.1 L132.0,695.5 L45.0,750.7 L-43.5,806.8 L-42.1,808.9 L46.1,752.5 L132.9,697.0 L204.2,651.5 L263.8,613.5 L314.3,581.2 L357.7,553.6 L395.4,529.5 L428.4,508.5 L457.5,489.8 L483.5,473.3 L506.7,458.4 L527.7,445.1 L546.6,433.0 L563.9,422.0 L579.7,412.0 L594.1,402.8 L607.5,394.3 L619.7,386.5 L631.1,379.2 L641.7,372.5 L651.6,366.2 L660.8,360.3 L669.4,354.8 L677.5,349.7 L685.1,344.9Z M699.2,347.2 L692.0,352.1 L684.4,357.3 L676.3,362.9 L667.7,368.9 L658.4,375.3 L648.5,382.2 L637.8,389.6 L626.2,397.6 L613.7,406.2 L600.1,415.6 L585.3,425.8 L569.0,437.0 L551.2,449.4 L531.5,463.0 L509.6,478.0 L485.2,494.8 L457.7,513.7 L426.6,535.1 L391.1,559.6 L350.3,587.7 L302.7,620.5 L246.7,659.1 L179.5,705.4 L97.7,761.7 L-4.1,831.7 L-2.6,833.9 L99.0,763.5 L180.6,707.0 L247.6,660.6 L303.6,621.8 L351.1,588.9 L391.9,560.7 L427.4,536.2 L458.4,514.7 L485.8,495.7 L510.1,478.8 L532.0,463.7 L551.7,450.1 L569.5,437.8 L585.8,426.6 L600.6,416.3 L614.2,406.9 L626.7,398.3 L638.3,390.3 L649.0,382.9 L658.9,376.0 L668.2,369.6 L676.9,363.7 L685.0,358.1 L692.6,352.8 L699.7,347.9Z M714.3,350.3 L707.7,355.4 L700.6,360.7 L693.0,366.4 L684.9,372.5 L676.3,379.0 L667.0,386.1 L657.0,393.6 L646.2,401.7 L634.5,410.6 L621.8,420.1 L608.0,430.6 L592.8,442.0 L576.2,454.6 L557.8,468.5 L537.3,483.8 L514.5,501.0 L488.8,520.3 L459.8,542.1 L426.6,567.0 L388.5,595.7 L344.1,629.1 L291.7,668.5 L229.0,715.7 L152.6,773.1 L74.9,831.5 L76.6,833.7 L154.1,775.0 L230.3,717.3 L292.8,670.0 L345.1,630.5 L389.5,597.0 L427.6,568.2 L460.6,543.1 L489.5,521.2 L515.1,501.8 L537.9,484.6 L558.3,469.2 L576.7,455.3 L593.4,442.7 L608.5,431.3 L622.4,420.9 L635.1,411.3 L646.7,402.5 L657.5,394.3 L667.5,386.8 L676.8,379.8 L685.5,373.2 L693.6,367.1 L701.1,361.4 L708.2,356.1 L714.9,351.1Z M730.1,353.7 L724.0,358.8 L717.4,364.2 L710.4,370.1 L702.9,376.3 L694.9,382.9 L686.3,390.1 L677.0,397.8 L667.0,406.1 L656.2,415.1 L644.4,424.9 L631.6,435.5 L617.6,447.2 L602.1,460.0 L585.1,474.2 L566.2,489.9 L545.0,507.4 L521.3,527.1 L494.3,549.3 L463.6,574.7 L428.2,604.0 L387.1,638.1 L338.6,678.3 L280.5,726.4 L209.7,785.0 L153.3,831.7 L155.1,833.9 L211.4,787.0 L281.9,728.2 L339.9,679.9 L388.3,639.5 L429.4,605.3 L464.6,575.9 L495.2,550.3 L522.0,527.9 L545.7,508.2 L566.8,490.6 L585.7,474.9 L602.7,460.7 L618.1,447.9 L632.2,436.2 L645.0,425.6 L656.8,415.8 L667.6,406.8 L677.6,398.5 L686.9,390.8 L695.5,383.6 L703.5,377.0 L711.0,370.8 L718.0,364.9 L724.5,359.5 L730.7,354.3Z M746.6,357.1 L740.9,362.3 L734.9,367.9 L728.5,373.9 L721.6,380.2 L714.3,387.0 L706.4,394.3 L697.9,402.2 L688.7,410.7 L678.8,419.8 L668.0,429.8 L656.2,440.7 L643.4,452.6 L629.2,465.7 L613.6,480.1 L596.2,496.2 L576.8,514.1 L555.0,534.1 L530.3,556.9 L502.2,582.8 L469.7,612.7 L431.9,647.4 L387.4,688.5 L334.1,737.6 L269.2,797.4 L231.1,832.5 L233.1,834.7 L271.1,799.5 L335.8,739.4 L388.9,690.1 L433.3,648.9 L470.9,613.9 L503.2,583.9 L531.2,557.8 L555.8,535.0 L577.5,514.8 L596.8,496.8 L614.2,480.8 L629.8,466.3 L644.0,453.3 L656.8,441.4 L668.6,430.5 L679.4,420.5 L689.3,411.3 L698.5,402.8 L707.0,395.0 L714.9,387.7 L722.2,380.9 L729.1,374.5 L735.5,368.6 L741.5,363.0 L747.2,357.8Z M763.7,360.7 L758.6,366.1 L753.2,371.7 L747.3,377.8 L741.1,384.3 L734.5,391.2 L727.3,398.7 L719.6,406.7 L711.3,415.4 L702.3,424.8 L692.5,435.0 L681.9,446.1 L670.2,458.2 L657.4,471.6 L643.3,486.4 L627.6,502.7 L610.0,521.0 L590.2,541.5 L567.9,564.7 L542.3,591.2 L512.9,621.7 L478.7,657.2 L438.3,699.1 L390.0,749.3 L331.1,810.3 L308.6,833.8 L310.8,836.0 L333.3,812.5 L391.9,751.1 L440.0,700.8 L480.1,658.6 L514.1,622.9 L543.4,592.2 L568.8,565.6 L591.0,542.3 L610.7,521.7 L628.2,503.4 L643.9,487.0 L658.1,472.2 L670.9,458.9 L682.5,446.7 L693.2,435.6 L703.0,425.4 L712.0,416.0 L720.3,407.4 L728.0,399.3 L735.1,391.9 L741.8,384.9 L748.0,378.4 L753.8,372.4 L759.3,366.7 L764.4,361.3Z M781.6,364.5 L777.1,369.9 L772.2,375.8 L767.0,382.0 L761.5,388.6 L755.5,395.7 L749.2,403.3 L742.3,411.5 L734.9,420.3 L726.9,429.9 L718.2,440.3 L708.7,451.7 L698.3,464.1 L686.9,477.8 L674.2,492.9 L660.2,509.6 L644.6,528.3 L627.0,549.2 L607.0,573.0 L584.2,600.0 L558.0,631.2 L527.5,667.5 L491.4,710.3 L448.3,761.5 L395.8,823.9 L386.0,835.7 L388.4,837.7 L398.3,826.0 L450.5,763.3 L493.2,711.8 L529.0,668.8 L559.3,632.3 L585.3,600.9 L608.0,573.8 L627.8,549.9 L645.3,528.9 L660.9,510.2 L674.9,493.4 L687.5,478.3 L699.0,464.7 L709.4,452.3 L718.9,440.9 L727.6,430.5 L735.6,420.9 L743.0,412.1 L749.9,403.9 L756.2,396.2 L762.2,389.2 L767.7,382.5 L772.9,376.3 L777.8,370.5 L782.3,365.0Z M800.3,368.4 L796.3,374.0 L792.1,379.9 L787.6,386.3 L782.7,393.0 L777.5,400.3 L772.0,408.1 L766.0,416.5 L759.5,425.5 L752.5,435.3 L744.9,446.0 L736.6,457.6 L727.6,470.3 L717.6,484.2 L706.6,499.6 L694.4,516.8 L680.7,535.8 L665.3,557.3 L647.9,581.5 L628.0,609.2 L605.1,641.1 L578.4,678.2 L547.0,722.0 L509.3,774.3 L463.4,838.1 L466.1,840.0 L511.6,775.9 L548.8,723.3 L580.0,679.3 L606.5,642.1 L629.2,610.0 L648.9,582.3 L666.2,557.9 L681.5,536.4 L695.1,517.3 L707.3,500.2 L718.3,484.7 L728.3,470.8 L737.4,458.1 L745.7,446.5 L753.3,435.8 L760.3,426.0 L766.7,417.0 L772.7,408.6 L778.3,400.8 L783.5,393.6 L788.3,386.8 L792.8,380.5 L797.1,374.5 L801.1,368.9Z M819.9,372.5 L816.5,378.2 L812.9,384.3 L809.0,390.8 L804.9,397.7 L800.6,405.1 L795.8,413.1 L790.8,421.7 L785.3,430.9 L779.4,441.0 L772.9,451.8 L765.9,463.7 L758.2,476.7 L749.8,491.0 L740.4,506.7 L730.1,524.2 L718.5,543.8 L705.4,565.7 L690.7,590.5 L673.8,618.8 L654.4,651.4 L631.7,689.4 L605.0,734.2 L573.0,787.7 L548.0,829.7 L550.7,831.3 L575.4,789.2 L607.0,735.3 L633.4,690.4 L655.8,652.3 L675.0,619.5 L691.7,591.1 L706.4,566.2 L719.3,544.3 L730.8,524.7 L741.2,507.2 L750.5,491.4 L759.0,477.2 L766.7,464.2 L773.7,452.3 L780.1,441.4 L786.1,431.4 L791.5,422.1 L796.6,413.6 L801.3,405.6 L805.7,398.2 L809.8,391.3 L813.7,384.8 L817.3,378.7 L820.6,373.0Z M840.3,376.8 L837.6,382.7 L834.6,388.9 L831.5,395.5 L828.2,402.6 L824.6,410.2 L820.8,418.4 L816.7,427.1 L812.3,436.6 L807.4,446.9 L802.2,458.0 L796.5,470.1 L790.3,483.4 L783.4,498.0 L775.8,514.2 L767.4,532.1 L758.0,552.1 L747.4,574.5 L735.4,599.9 L721.7,628.9 L705.9,662.3 L687.5,701.1 L665.8,747.0 L639.7,801.8 L624.8,833.5 L627.5,834.7 L642.3,803.0 L667.8,747.9 L689.2,702.0 L707.4,663.0 L723.0,629.5 L736.5,600.4 L748.4,575.0 L758.9,552.5 L768.2,532.5 L776.6,514.6 L784.2,498.4 L791.1,483.8 L797.3,470.5 L803.0,458.4 L808.3,447.2 L813.1,437.0 L817.5,427.5 L821.6,418.7 L825.5,410.6 L829.0,403.0 L832.3,395.9 L835.5,389.3 L838.4,383.1 L841.1,377.2Z M861.7,381.4 L859.7,387.3 L857.5,393.7 L855.1,400.5 L852.6,407.8 L849.9,415.5 L847.0,423.9 L843.9,432.8 L840.5,442.5 L836.9,453.0 L832.9,464.4 L828.6,476.9 L823.9,490.5 L818.7,505.4 L812.9,522.0 L806.6,540.3 L799.4,560.8 L791.4,583.7 L782.3,609.8 L771.9,639.4 L759.9,673.6 L745.9,713.4 L729.4,760.4 L709.6,816.5 L702.2,837.8 L704.9,838.8 L712.3,817.4 L731.6,761.1 L747.7,714.1 L761.4,674.2 L773.2,639.9 L783.4,610.2 L792.4,584.1 L800.3,561.1 L807.4,540.6 L813.8,522.3 L819.5,505.7 L824.7,490.8 L829.4,477.2 L833.7,464.7 L837.7,453.3 L841.3,442.8 L844.7,433.1 L847.8,424.2 L850.7,415.8 L853.4,408.0 L855.9,400.8 L858.3,394.0 L860.5,387.6 L862.6,381.6Z M884.2,386.1 L882.8,392.2 L881.4,398.8 L879.8,405.7 L878.1,413.1 L876.3,421.1 L874.4,429.6 L872.4,438.8 L870.1,448.8 L867.7,459.5 L865.1,471.2 L862.2,484.0 L859.1,497.9 L855.6,513.2 L851.8,530.1 L847.6,548.9 L842.9,569.9 L837.5,593.4 L831.4,620.1 L824.5,650.5 L816.5,685.5 L807.2,726.3 L796.2,774.4 L783.0,832.0 L785.7,832.6 L798.4,775.0 L809.1,726.8 L818.1,685.9 L825.9,650.8 L832.6,620.4 L838.6,593.7 L843.8,570.1 L848.5,549.1 L852.7,530.3 L856.5,513.4 L860.0,498.1 L863.1,484.1 L866.0,471.4 L868.6,459.7 L871.0,449.0 L873.2,439.0 L875.3,429.8 L877.2,421.3 L879.0,413.3 L880.7,405.9 L882.3,398.9 L883.7,392.4 L885.1,386.3Z M907.8,391.1 L907.2,397.4 L906.5,404.0 L905.8,411.2 L905.0,418.8 L904.1,427.0 L903.3,435.7 L902.3,445.2 L901.2,455.3 L900.1,466.4 L898.9,478.3 L897.5,491.4 L896.1,505.7 L894.5,521.4 L892.7,538.7 L890.7,558.0 L888.5,579.5 L885.9,603.6 L883.0,630.9 L879.7,662.1 L875.9,698.1 L871.5,739.9 L866.2,789.2 L861.1,837.6 L863.8,837.9 L868.6,789.5 L873.5,740.1 L877.6,698.2 L881.2,662.3 L884.3,631.1 L887.0,603.7 L889.5,579.6 L891.6,558.1 L893.6,538.8 L895.4,521.5 L897.0,505.8 L898.4,491.5 L899.8,478.4 L901.0,466.4 L902.1,455.4 L903.2,445.2 L904.1,435.8 L905.0,427.1 L905.9,418.9 L906.7,411.3 L907.4,404.1 L908.1,397.5 L908.7,391.2Z M932.7,396.3 L932.8,402.8 L932.9,409.6 L933.1,416.9 L933.2,424.7 L933.4,433.1 L933.6,442.1 L933.8,451.8 L934.0,462.2 L934.2,473.5 L934.4,485.8 L934.7,499.2 L935.0,513.8 L935.3,530.0 L935.6,547.7 L936.0,567.5 L936.4,589.5 L936.8,614.3 L937.3,642.4 L937.8,674.4 L938.4,711.2 L939.0,746.5 L941.0,746.5 L940.2,711.2 L939.4,674.3 L938.6,642.3 L938.0,614.3 L937.4,589.5 L937.0,567.5 L936.5,547.7 L936.2,529.9 L935.9,513.8 L935.6,499.2 L935.3,485.8 L935.1,473.5 L934.9,462.2 L934.6,451.8 L934.5,442.1 L934.3,433.1 L934.1,424.7 L934.0,416.9 L933.8,409.6 L933.7,402.7 L933.6,396.3Z M436.5,295.8 L451.9,299.1 L468.4,302.6 L485.9,306.4 L504.6,310.4 L524.7,314.7 L546.2,319.3 L569.4,324.3 L594.4,329.6 L621.5,335.4 L650.9,341.7 L682.9,348.6 L718.1,356.1 L756.6,364.4 L799.2,373.5 L846.6,383.7 L899.4,395.0 L948.3,405.5 L948.5,404.6 L899.6,394.1 L846.7,382.8 L799.4,372.6 L756.8,363.5 L718.2,355.3 L683.1,347.7 L651.1,340.9 L621.6,334.6 L594.6,328.8 L569.5,323.4 L546.4,318.4 L524.9,313.8 L504.8,309.5 L486.1,305.5 L468.6,301.8 L452.1,298.2 L436.7,294.9Z M429.9,297.2 L445.2,300.6 L461.4,304.2 L478.7,308.0 L497.1,312.0 L516.9,316.4 L538.2,321.0 L561.0,326.1 L585.7,331.5 L612.4,337.4 L641.5,343.8 L673.1,350.7 L707.8,358.4 L745.8,366.7 L787.9,376.0 L834.6,386.2 L886.7,397.7 L945.2,410.6 L945.4,409.7 L886.9,396.8 L834.8,385.4 L788.1,375.1 L746.0,365.9 L708.0,357.5 L673.3,349.9 L641.7,342.9 L612.6,336.5 L585.9,330.6 L561.2,325.2 L538.4,320.2 L517.1,315.5 L497.3,311.1 L478.9,307.1 L461.6,303.3 L445.4,299.7 L430.1,296.4Z M423.2,298.7 L438.2,302.1 L454.2,305.7 L471.3,309.6 L489.5,313.7 L509.0,318.1 L529.9,322.8 L552.5,327.9 L576.8,333.4 L603.2,339.4 L631.8,345.9 L663.0,352.9 L697.2,360.6 L734.7,369.1 L776.2,378.5 L822.3,388.9 L873.6,400.5 L931.4,413.6 L941.7,415.9 L941.9,415.0 L931.6,412.7 L873.8,399.6 L822.4,388.0 L776.4,377.6 L734.9,368.2 L697.4,359.8 L663.2,352.0 L632.0,345.0 L603.4,338.5 L577.0,332.5 L552.7,327.0 L530.1,321.9 L509.2,317.2 L489.7,312.8 L471.5,308.7 L454.4,304.8 L438.4,301.2 L423.4,297.8Z M416.3,300.2 L431.1,303.6 L446.8,307.3 L463.6,311.2 L481.6,315.4 L500.8,319.9 L521.5,324.7 L543.7,329.8 L567.7,335.4 L593.7,341.4 L621.9,348.0 L652.7,355.2 L686.3,363.0 L723.3,371.6 L764.2,381.1 L809.6,391.6 L860.3,403.4 L917.2,416.7 L948.4,423.9 L948.6,423.0 L917.4,415.8 L860.5,402.5 L809.8,390.8 L764.4,380.2 L723.6,370.7 L686.5,362.1 L652.9,354.3 L622.1,347.1 L593.9,340.6 L567.9,334.5 L543.9,328.9 L521.7,323.8 L501.0,319.0 L481.8,314.5 L463.8,310.3 L447.0,306.4 L431.3,302.8 L416.5,299.3Z M409.1,301.7 L423.7,305.2 L439.3,308.9 L455.8,312.9 L473.5,317.1 L492.4,321.7 L512.8,326.5 L534.7,331.8 L558.3,337.4 L583.9,343.5 L611.7,350.2 L642.0,357.5 L675.2,365.4 L711.6,374.1 L751.9,383.8 L796.6,394.4 L846.5,406.4 L902.6,419.8 L944.0,429.7 L944.2,428.8 L902.8,418.9 L846.7,405.5 L796.8,393.6 L752.1,382.9 L711.8,373.2 L675.4,364.5 L642.2,356.6 L611.9,349.3 L584.1,342.7 L558.5,336.5 L534.9,330.9 L513.0,325.7 L492.7,320.8 L473.7,316.3 L456.0,312.0 L439.5,308.1 L423.9,304.3 L409.4,300.9Z M401.8,303.3 L416.2,306.9 L431.5,310.6 L447.8,314.6 L465.2,318.9 L483.8,323.5 L503.8,328.5 L525.4,333.8 L548.7,339.5 L573.9,345.7 L601.2,352.5 L631.0,359.8 L663.7,367.9 L699.6,376.7 L739.2,386.5 L783.2,397.3 L832.4,409.4 L887.6,423.1 L950.0,438.5 L950.3,437.6 L887.8,422.2 L832.6,408.6 L783.4,396.5 L739.4,385.6 L699.8,375.8 L663.9,367.0 L631.3,358.9 L601.4,351.6 L574.1,344.8 L548.9,338.6 L525.6,332.9 L504.1,327.6 L484.0,322.7 L465.4,318.1 L448.0,313.8 L431.7,309.7 L416.4,306.0 L402.0,302.4Z M394.3,304.9 L408.4,308.5 L423.4,312.3 L439.5,316.4 L456.6,320.8 L475.0,325.4 L494.6,330.4 L515.8,335.8 L538.7,341.7 L563.5,347.9 L590.4,354.8 L619.8,362.3 L651.9,370.4 L687.2,379.4 L726.2,389.3 L769.5,400.3 L817.8,412.6 L872.1,426.4 L933.6,442.0 L944.6,444.8 L944.8,443.9 L933.8,441.1 L872.3,425.5 L818.0,411.7 L769.7,399.4 L726.4,388.4 L687.4,378.5 L652.1,369.5 L620.0,361.4 L590.7,353.9 L563.7,347.1 L539.0,340.8 L516.1,335.0 L494.9,329.6 L475.2,324.6 L456.8,319.9 L439.7,315.6 L423.7,311.5 L408.6,307.7 L394.5,304.1Z M386.5,306.6 L400.4,310.3 L415.2,314.1 L431.0,318.3 L447.8,322.7 L465.8,327.4 L485.2,332.5 L506.0,338.0 L528.5,343.9 L552.9,350.2 L579.3,357.2 L608.2,364.8 L639.8,373.0 L674.5,382.1 L712.8,392.2 L755.3,403.4 L802.8,415.8 L856.2,429.8 L916.6,445.7 L949.9,454.4 L950.2,453.5 L916.9,444.8 L856.4,429.0 L803.1,414.9 L755.6,402.5 L713.0,391.3 L674.7,381.3 L640.0,372.2 L608.4,363.9 L579.6,356.3 L553.1,349.4 L528.7,343.0 L506.3,337.1 L485.4,331.6 L466.1,326.5 L448.0,321.8 L431.2,317.4 L415.4,313.3 L400.7,309.4 L386.8,305.7Z M378.6,308.3 L392.2,312.0 L406.7,316.0 L422.2,320.2 L438.7,324.6 L456.4,329.4 L475.4,334.6 L495.9,340.1 L518.0,346.1 L541.9,352.6 L567.9,359.7 L596.2,367.3 L627.3,375.7 L661.3,385.0 L699.0,395.2 L740.8,406.5 L787.4,419.1 L839.8,433.4 L899.2,449.4 L943.3,461.4 L943.5,460.5 L899.4,448.6 L840.1,432.5 L787.7,418.3 L741.0,405.6 L699.2,394.3 L661.6,384.1 L627.5,374.9 L596.5,366.5 L568.2,358.8 L542.2,351.7 L518.2,345.3 L496.1,339.3 L475.7,333.7 L456.7,328.6 L439.0,323.8 L422.4,319.3 L406.9,315.1 L392.4,311.2 L378.8,307.5Z M370.3,310.1 L383.7,313.9 L398.0,317.8 L413.1,322.1 L429.4,326.7 L446.8,331.5 L465.4,336.8 L485.5,342.4 L507.2,348.5 L530.7,355.0 L556.2,362.2 L584.0,370.0 L614.4,378.5 L647.8,387.9 L684.8,398.2 L725.8,409.7 L771.5,422.6 L823.0,437.0 L881.2,453.3 L947.7,471.9 L947.9,471.1 L881.5,452.5 L823.2,436.1 L771.8,421.7 L726.0,408.9 L685.0,397.4 L648.1,387.0 L614.6,377.7 L584.2,369.1 L556.4,361.3 L530.9,354.2 L507.4,347.6 L485.7,341.5 L465.7,335.9 L447.0,330.7 L429.6,325.8 L413.4,321.2 L398.2,317.0 L384.0,313.0 L370.6,309.2Z M361.9,311.9 L375.0,315.7 L389.0,319.8 L403.8,324.1 L419.7,328.7 L436.8,333.7 L455.1,339.0 L474.8,344.7 L496.0,350.9 L519.0,357.6 L544.0,364.8 L571.3,372.7 L601.1,381.4 L633.9,390.9 L670.1,401.4 L710.3,413.1 L755.2,426.1 L805.6,440.7 L862.7,457.3 L927.8,476.2 L951.7,483.1 L951.9,482.3 L928.1,475.4 L863.0,456.5 L805.9,439.9 L755.4,425.2 L710.6,412.2 L670.4,400.5 L634.2,390.0 L601.4,380.5 L571.5,371.9 L544.3,363.9 L519.3,356.7 L496.3,350.0 L475.0,343.8 L455.3,338.1 L437.0,332.8 L420.0,327.9 L404.1,323.3 L389.2,318.9 L375.2,314.9 L362.1,311.1Z M353.1,313.8 L366.0,317.7 L379.7,321.8 L394.2,326.2 L409.8,330.9 L426.5,335.9 L444.4,341.3 L463.7,347.1 L484.5,353.4 L507.1,360.1 L531.5,367.5 L558.2,375.5 L587.4,384.3 L619.6,394.0 L655.0,404.7 L694.4,416.5 L738.3,429.7 L787.7,444.6 L843.6,461.4 L907.4,480.6 L942.8,491.3 L943.1,490.4 L907.7,479.8 L843.9,460.6 L788.0,443.7 L738.6,428.9 L694.6,415.7 L655.3,403.8 L619.8,393.1 L587.7,383.5 L558.5,374.7 L531.8,366.6 L507.3,359.3 L484.8,352.5 L464.0,346.2 L444.7,340.4 L426.8,335.0 L410.1,330.0 L394.5,325.3 L379.9,320.9 L366.3,316.8 L353.4,313.0Z M344.1,315.8 L356.7,319.7 L370.1,323.9 L384.4,328.3 L399.6,333.1 L415.9,338.2 L433.4,343.7 L452.3,349.6 L472.7,355.9 L494.7,362.8 L518.7,370.3 L544.8,378.4 L573.3,387.4 L604.8,397.2 L639.4,408.0 L678.0,420.1 L721.0,433.5 L769.3,448.6 L824.0,465.7 L886.4,485.2 L945.5,503.7 L945.8,502.8 L886.6,484.3 L824.2,464.8 L769.5,447.7 L721.2,432.6 L678.2,419.2 L639.7,407.2 L605.0,396.3 L573.6,386.5 L545.0,377.6 L518.9,369.4 L495.0,361.9 L472.9,355.1 L452.6,348.7 L433.7,342.8 L416.2,337.3 L399.9,332.2 L384.6,327.5 L370.4,323.0 L357.0,318.8 L344.4,314.9Z M334.9,317.8 L347.1,321.8 L360.2,326.0 L374.1,330.5 L389.0,335.4 L405.0,340.5 L422.1,346.1 L440.5,352.1 L460.4,358.6 L482.0,365.6 L505.4,373.2 L530.9,381.4 L558.8,390.5 L589.5,400.5 L623.4,411.5 L661.0,423.7 L703.0,437.4 L750.2,452.7 L803.7,470.1 L864.6,489.9 L934.9,512.7 L947.6,516.8 L947.9,516.0 L935.1,511.8 L864.9,489.0 L803.9,469.2 L750.5,451.9 L703.3,436.5 L661.3,422.9 L623.7,410.6 L589.8,399.6 L559.1,389.7 L531.2,380.6 L505.6,372.3 L482.2,364.7 L460.7,357.7 L440.8,351.2 L422.4,345.2 L405.3,339.7 L389.3,334.5 L374.4,329.7 L360.5,325.1 L347.4,320.9 L335.1,316.9Z M325.3,319.8 L337.3,323.9 L350.0,328.2 L363.6,332.8 L378.1,337.7 L393.7,343.0 L410.4,348.6 L428.4,354.7 L447.8,361.3 L468.8,368.4 L491.6,376.1 L516.5,384.5 L543.8,393.8 L573.7,403.9 L606.8,415.1 L643.5,427.5 L684.5,441.4 L730.6,457.0 L782.7,474.6 L842.2,494.7 L910.7,517.9 L949.0,530.9 L949.3,530.0 L911.0,517.1 L842.5,493.9 L783.0,473.7 L730.8,456.1 L684.8,440.5 L643.8,426.6 L607.1,414.2 L574.0,403.0 L544.1,392.9 L516.8,383.7 L491.9,375.3 L469.1,367.5 L448.1,360.4 L428.7,353.9 L410.7,347.8 L394.0,342.1 L378.4,336.9 L363.9,331.9 L350.3,327.3 L337.5,323.0 L325.6,319.0Z M315.4,322.0 L327.0,326.1 L339.5,330.5 L352.7,335.1 L366.9,340.1 L382.0,345.5 L398.3,351.2 L415.8,357.4 L434.7,364.1 L455.2,371.3 L477.5,379.2 L501.7,387.7 L528.3,397.1 L557.4,407.4 L589.7,418.8 L625.4,431.4 L665.4,445.5 L710.3,461.3 L761.1,479.3 L819.0,499.7 L885.8,523.3 L949.7,545.9 L950.0,545.0 L886.1,522.4 L819.3,498.9 L761.4,478.4 L710.6,460.5 L665.7,444.6 L625.7,430.6 L590.0,417.9 L557.7,406.6 L528.6,396.3 L502.0,386.9 L477.8,378.3 L455.5,370.5 L435.0,363.2 L416.1,356.6 L398.6,350.4 L382.3,344.6 L367.2,339.3 L353.0,334.3 L339.8,329.6 L327.3,325.2 L315.7,321.1Z M305.1,324.2 L316.5,328.4 L328.6,332.8 L341.5,337.6 L355.2,342.7 L370.0,348.1 L385.8,353.9 L402.9,360.2 L421.3,367.0 L441.2,374.4 L462.8,382.3 L486.4,391.0 L512.2,400.6 L540.6,411.0 L572.0,422.6 L606.8,435.4 L645.6,449.8 L689.3,465.9 L738.7,484.1 L795.1,504.9 L860.0,528.9 L935.7,556.8 L949.5,561.9 L949.8,561.0 L936.0,555.9 L860.3,528.0 L795.4,504.1 L739.0,483.3 L689.6,465.0 L645.9,448.9 L607.1,434.6 L572.3,421.8 L540.9,410.2 L512.6,399.7 L486.7,390.2 L463.1,381.5 L441.5,373.5 L421.6,366.2 L403.2,359.4 L386.1,353.1 L370.3,347.2 L355.6,341.8 L341.8,336.7 L328.9,332.0 L316.8,327.5 L305.5,323.3Z M294.6,326.5 L305.6,330.7 L317.3,335.2 L329.8,340.1 L343.2,345.2 L357.5,350.8 L372.9,356.7 L389.5,363.1 L407.3,370.0 L426.7,377.5 L447.7,385.6 L470.6,394.5 L495.7,404.1 L523.2,414.8 L553.7,426.5 L587.5,439.6 L625.2,454.2 L667.6,470.6 L715.6,489.1 L770.3,510.2 L833.4,534.6 L906.8,563.0 L948.3,579.0 L948.6,578.1 L907.2,562.1 L833.7,533.8 L770.6,509.4 L715.9,488.2 L667.9,469.7 L625.5,453.3 L587.8,438.8 L554.0,425.7 L523.6,413.9 L496.0,403.3 L470.9,393.6 L448.0,384.8 L427.0,376.6 L407.7,369.2 L389.8,362.3 L373.2,355.9 L357.9,349.9 L343.5,344.4 L330.2,339.2 L317.7,334.4 L305.9,329.9 L294.9,325.6Z M283.6,328.8 L294.3,333.1 L305.7,337.8 L317.8,342.7 L330.8,347.9 L344.7,353.6 L359.6,359.6 L375.6,366.1 L392.9,373.1 L411.7,380.7 L432.0,389.0 L454.2,398.0 L478.5,407.8 L505.2,418.7 L534.7,430.6 L567.5,443.9 L604.1,458.7 L645.1,475.4 L691.6,494.3 L744.7,515.8 L805.8,540.6 L877.0,569.4 L945.9,597.4 L946.3,596.5 L877.4,568.6 L806.2,539.7 L745.0,514.9 L692.0,493.4 L645.5,474.6 L604.4,457.9 L567.8,443.1 L535.1,429.8 L505.6,417.8 L478.9,407.0 L454.6,397.2 L432.4,388.2 L412.0,379.9 L393.2,372.3 L375.9,365.3 L359.9,358.8 L345.0,352.7 L331.1,347.1 L318.2,341.8 L306.0,336.9 L294.7,332.3 L284.0,328.0Z M272.3,331.3 L282.6,335.7 L293.6,340.4 L305.4,345.4 L317.9,350.7 L331.3,356.4 L345.7,362.6 L361.2,369.2 L378.0,376.3 L396.1,384.1 L415.8,392.5 L437.3,401.6 L460.8,411.7 L486.6,422.7 L515.1,434.9 L546.8,448.4 L582.2,463.5 L621.9,480.4 L666.9,499.6 L718.2,521.5 L777.3,546.7 L846.1,576.1 L927.3,610.8 L942.2,617.2 L942.7,616.1 L927.7,609.8 L846.5,575.2 L777.7,545.9 L718.6,520.7 L667.2,498.8 L622.3,479.6 L582.5,462.6 L547.2,447.5 L515.5,434.0 L487.0,421.9 L461.1,410.8 L437.6,400.8 L416.2,391.7 L396.5,383.3 L378.3,375.5 L361.6,368.4 L346.1,361.8 L331.7,355.6 L318.2,349.9 L305.7,344.5 L294.0,339.5 L283.0,334.8 L272.7,330.4Z M260.6,333.8 L270.5,338.3 L281.1,343.1 L292.5,348.1 L304.6,353.6 L317.5,359.4 L331.4,365.7 L346.4,372.4 L362.5,379.7 L380.0,387.6 L399.0,396.1 L419.7,405.4 L442.4,415.6 L467.3,426.9 L494.9,439.2 L525.4,453.0 L559.5,468.3 L597.8,485.6 L641.2,505.1 L690.7,527.4 L747.8,553.1 L814.2,583.0 L892.4,618.4 L952.9,645.6 L953.4,644.4 L892.9,617.3 L814.6,582.1 L748.2,552.2 L691.1,526.6 L641.6,504.3 L598.2,484.8 L559.9,467.5 L525.8,452.2 L495.2,438.4 L467.7,426.0 L442.8,414.8 L420.1,404.6 L399.4,395.3 L380.4,386.7 L362.9,378.9 L346.7,371.6 L331.8,364.9 L317.9,358.6 L304.9,352.8 L292.8,347.3 L281.5,342.2 L270.9,337.5 L260.9,333.0Z M248.4,336.4 L258.0,341.0 L268.2,345.8 L279.1,351.0 L290.7,356.6 L303.2,362.5 L316.6,368.9 L331.0,375.7 L346.5,383.1 L363.3,391.2 L381.6,399.9 L401.5,409.4 L423.4,419.7 L447.3,431.2 L473.8,443.8 L503.2,457.8 L536.0,473.4 L572.9,491.0 L614.6,510.9 L662.3,533.6 L717.1,559.8 L781.0,590.2 L856.3,626.2 L946.4,669.2 L947.1,667.9 L856.9,625.0 L781.5,589.2 L717.6,558.8 L662.7,532.7 L615.0,510.0 L573.3,490.2 L536.4,472.6 L503.6,457.0 L474.2,443.0 L447.7,430.4 L423.7,418.9 L401.9,408.5 L382.0,399.0 L363.7,390.3 L346.9,382.3 L331.3,374.9 L317.0,368.1 L303.6,361.7 L291.1,355.8 L279.5,350.2 L268.6,345.0 L258.4,340.2 L248.8,335.6Z M235.8,339.1 L245.0,343.8 L254.8,348.7 L265.2,354.0 L276.4,359.7 L288.3,365.7 L301.2,372.2 L315.0,379.2 L329.9,386.7 L346.0,394.9 L363.6,403.8 L382.7,413.4 L403.6,424.0 L426.6,435.6 L452.0,448.5 L480.2,462.8 L511.7,478.7 L547.0,496.6 L587.1,516.9 L632.8,540.0 L685.4,566.6 L746.6,597.7 L818.9,634.3 L905.3,678.1 L955.2,703.5 L956.0,701.9 L906.0,676.7 L819.5,633.1 L747.2,596.6 L685.9,565.7 L633.2,539.1 L587.5,516.0 L547.5,495.7 L512.1,477.8 L480.6,461.9 L452.4,447.7 L427.0,434.8 L404.0,423.2 L383.1,412.6 L364.0,402.9 L346.4,394.1 L330.3,385.9 L315.4,378.4 L301.6,371.4 L288.7,364.9 L276.8,358.9 L265.6,353.2 L255.2,347.9 L245.4,343.0 L236.2,338.3Z M222.7,341.9 L231.5,346.7 L240.9,351.7 L250.8,357.1 L261.5,362.9 L272.9,369.0 L285.2,375.6 L298.4,382.8 L312.6,390.4 L328.1,398.8 L344.8,407.8 L363.1,417.6 L383.1,428.4 L405.1,440.3 L429.4,453.4 L456.3,467.9 L486.4,484.2 L520.2,502.4 L558.4,523.1 L602.1,546.6 L652.4,573.8 L711.0,605.4 L780.0,642.7 L862.6,687.4 L944.9,731.9 L945.8,730.3 L863.4,685.9 L780.7,641.5 L711.6,604.3 L653.0,572.7 L602.6,545.6 L559.0,522.1 L520.7,501.5 L486.9,483.3 L456.8,467.1 L429.8,452.6 L405.5,439.5 L383.5,427.6 L363.5,416.9 L345.3,407.0 L328.5,398.0 L313.1,389.6 L298.8,382.0 L285.6,374.8 L273.4,368.2 L261.9,362.1 L251.3,356.3 L241.3,350.9 L231.9,345.9 L223.1,341.2Z M209.1,344.9 L217.5,349.7 L226.4,354.8 L235.9,360.3 L246.1,366.2 L256.9,372.5 L268.6,379.2 L281.2,386.5 L294.7,394.3 L309.4,402.8 L325.4,412.0 L342.8,422.0 L361.8,433.0 L382.7,445.1 L405.9,458.5 L431.5,473.3 L460.1,489.9 L492.3,508.5 L528.7,529.5 L570.3,553.5 L618.2,581.2 L673.9,613.4 L739.6,651.5 L818.2,697.0 L914.0,752.5 L950.8,773.7 L951.9,771.8 L915.1,750.6 L819.1,695.5 L740.4,650.1 L674.6,612.3 L618.8,580.1 L570.9,552.5 L529.3,528.5 L492.9,507.5 L460.7,488.9 L432.0,472.4 L406.3,457.6 L383.2,444.3 L362.3,432.2 L343.2,421.2 L325.8,411.2 L309.9,402.0 L295.2,393.5 L281.6,385.7 L269.1,378.4 L257.4,371.7 L246.5,365.4 L236.4,359.6 L226.9,354.1 L217.9,348.9 L209.6,344.1Z M195.0,347.9 L202.9,352.8 L211.4,358.1 L220.4,363.7 L230.0,369.7 L240.3,376.1 L251.4,382.9 L263.3,390.3 L276.1,398.3 L290.1,407.0 L305.2,416.3 L321.7,426.6 L339.7,437.8 L359.5,450.1 L381.4,463.7 L405.7,478.9 L432.8,495.8 L463.3,514.7 L497.8,536.2 L537.2,560.7 L582.6,588.9 L635.4,621.8 L697.7,660.5 L772.2,707.0 L862.9,763.5 L955.2,821.0 L956.5,818.9 L864.1,761.6 L773.1,705.4 L698.5,659.2 L636.2,620.5 L583.3,587.7 L537.9,559.6 L498.5,535.1 L463.9,513.7 L433.4,494.8 L406.2,478.0 L381.9,462.9 L360.0,449.3 L340.2,437.0 L322.1,425.8 L305.6,415.6 L290.5,406.2 L276.6,397.5 L263.8,389.6 L251.8,382.2 L240.8,375.3 L230.5,368.9 L220.9,362.9 L211.9,357.3 L203.4,352.1 L195.5,347.1Z M180.3,351.1 L187.8,356.1 L195.7,361.4 L204.2,367.2 L213.3,373.2 L223.0,379.8 L233.4,386.8 L244.7,394.3 L256.8,402.5 L269.9,411.3 L284.1,420.9 L299.7,431.3 L316.7,442.7 L335.4,455.3 L356.0,469.2 L378.9,484.6 L404.5,501.9 L433.2,521.3 L465.7,543.2 L502.8,568.1 L545.6,596.9 L595.3,630.5 L654.0,670.0 L724.2,717.3 L809.7,775.0 L896.7,833.7 L898.2,831.5 L811.0,773.1 L725.3,715.7 L655.0,668.5 L596.2,629.1 L546.4,595.7 L503.6,567.0 L466.4,542.1 L433.9,520.2 L405.1,500.9 L379.5,483.8 L356.5,468.4 L335.9,454.6 L317.2,442.0 L300.2,430.6 L284.6,420.1 L270.4,410.5 L257.3,401.7 L245.2,393.6 L233.9,386.0 L223.5,379.0 L213.8,372.5 L204.7,366.4 L196.2,360.7 L188.3,355.4 L180.8,350.3Z M165.0,354.4 L172.0,359.5 L179.5,365.0 L187.4,370.8 L195.9,377.0 L205.0,383.7 L214.8,390.8 L225.3,398.5 L236.6,406.8 L248.9,415.8 L262.3,425.6 L276.8,436.2 L292.7,447.9 L310.2,460.7 L329.6,474.9 L351.0,490.6 L374.9,508.2 L401.8,528.0 L432.2,550.4 L467.0,575.9 L507.0,605.3 L553.6,639.5 L608.6,679.8 L674.3,728.1 L754.4,787.0 L818.2,833.9 L819.9,831.7 L755.9,785.0 L675.6,726.4 L609.7,678.3 L554.6,638.1 L508.0,604.0 L467.9,574.7 L433.1,549.2 L402.6,527.0 L375.6,507.3 L351.6,489.8 L330.1,474.2 L310.8,460.0 L293.3,447.2 L277.3,435.5 L262.8,424.9 L249.5,415.1 L237.2,406.1 L225.8,397.8 L215.3,390.1 L205.5,382.9 L196.4,376.3 L188.0,370.0 L180.0,364.2 L172.6,358.8 L165.6,353.6Z M149.1,357.8 L155.6,363.0 L162.5,368.6 L169.9,374.5 L177.8,380.9 L186.3,387.7 L195.3,395.0 L205.1,402.8 L215.6,411.3 L227.1,420.5 L239.5,430.5 L253.0,441.4 L267.8,453.3 L284.1,466.4 L302.0,480.8 L321.9,496.9 L344.2,514.9 L369.2,535.0 L397.4,557.9 L429.7,584.0 L466.9,614.0 L510.2,648.9 L561.2,690.1 L622.3,739.4 L696.7,799.5 L740.4,834.7 L742.1,832.5 L698.4,797.4 L623.8,737.6 L562.5,688.5 L511.3,647.4 L468.0,612.6 L430.7,582.7 L398.3,556.8 L369.9,534.1 L344.9,514.0 L322.6,496.1 L302.6,480.1 L284.6,465.7 L268.4,452.6 L253.6,440.7 L240.0,429.8 L227.6,419.8 L216.2,410.6 L205.7,402.1 L195.9,394.3 L186.8,387.0 L178.4,380.2 L170.5,373.8 L163.1,367.9 L156.2,362.3 L149.7,357.1Z M132.5,361.4 L138.5,366.7 L144.9,372.4 L151.7,378.5 L158.9,384.9 L166.7,391.9 L175.1,399.3 L184.1,407.4 L193.8,416.0 L204.3,425.4 L215.7,435.6 L228.2,446.7 L241.8,458.9 L256.8,472.2 L273.3,487.0 L291.7,503.4 L312.1,521.8 L335.1,542.4 L361.1,565.7 L390.8,592.3 L425.0,623.0 L464.9,658.7 L511.9,700.8 L568.1,751.1 L636.6,812.5 L662.9,836.0 L664.8,833.8 L638.5,810.3 L569.8,749.3 L513.3,699.1 L466.2,657.2 L426.2,621.6 L391.9,591.1 L362.0,564.7 L335.9,541.5 L312.8,521.0 L292.3,502.7 L273.9,486.3 L257.4,471.6 L242.4,458.2 L228.8,446.0 L216.3,434.9 L204.9,424.7 L194.4,415.4 L184.7,406.7 L175.7,398.7 L167.3,391.2 L159.5,384.3 L152.3,377.8 L145.5,371.7 L139.1,366.0 L133.1,360.7Z M115.2,365.1 L120.6,370.5 L126.4,376.4 L132.6,382.6 L139.2,389.2 L146.3,396.3 L153.9,403.9 L162.1,412.1 L170.9,420.9 L180.5,430.5 L190.9,440.9 L202.2,452.3 L214.6,464.7 L228.3,478.4 L243.3,493.5 L260.0,510.2 L278.7,528.9 L299.6,550.0 L323.3,573.8 L350.3,601.0 L381.4,632.4 L417.6,668.9 L460.3,711.9 L511.5,763.3 L573.8,826.0 L585.6,837.8 L587.8,835.6 L576.0,823.8 L513.4,761.4 L462.1,710.2 L419.1,667.4 L382.7,631.1 L351.4,599.9 L324.2,572.9 L300.4,549.2 L279.4,528.2 L260.7,509.6 L244.0,492.8 L228.9,477.7 L215.3,464.1 L202.9,451.7 L191.5,440.3 L181.1,429.9 L171.6,420.3 L162.7,411.5 L154.6,403.3 L146.9,395.6 L139.9,388.5 L133.2,381.9 L127.1,375.7 L121.3,369.9 L115.8,364.4Z M97.1,369.0 L102.0,374.5 L107.2,380.5 L112.7,386.8 L118.6,393.6 L125.0,400.9 L131.8,408.6 L139.2,417.0 L147.1,426.1 L155.7,435.9 L165.0,446.5 L175.2,458.1 L186.3,470.8 L198.5,484.8 L212.0,500.2 L227.0,517.3 L243.7,536.5 L262.5,558.0 L283.7,582.3 L307.9,610.1 L335.8,642.2 L368.3,679.5 L406.6,723.5 L452.4,776.1 L508.3,840.1 L510.7,838.0 L454.6,774.2 L408.4,721.8 L369.9,678.1 L337.2,641.0 L309.1,609.1 L284.7,581.5 L263.4,557.2 L244.5,535.8 L227.7,516.7 L212.7,499.6 L199.2,484.2 L187.0,470.2 L175.8,457.5 L165.7,445.9 L156.4,435.3 L147.8,425.5 L139.8,416.4 L132.5,408.1 L125.7,400.3 L119.3,393.0 L113.4,386.2 L107.8,379.9 L102.6,374.0 L97.7,368.4Z M78.1,373.0 L82.4,378.7 L87.0,384.8 L91.9,391.3 L97.1,398.2 L102.7,405.6 L108.7,413.6 L115.2,422.2 L122.2,431.4 L129.7,441.5 L137.9,452.3 L146.9,464.2 L156.7,477.2 L167.4,491.5 L179.3,507.2 L192.5,524.7 L207.2,544.3 L223.7,566.3 L242.3,591.2 L263.6,619.6 L288.2,652.4 L316.7,690.5 L350.4,735.5 L390.6,789.3 L422.3,831.5 L424.8,829.5 L393.0,787.5 L352.4,734.0 L318.4,689.3 L289.6,651.3 L264.9,618.7 L243.4,590.4 L224.6,565.6 L208.0,543.7 L193.2,524.2 L180.0,506.7 L168.1,490.9 L157.4,476.7 L147.6,463.7 L138.6,451.8 L130.4,440.9 L122.9,430.9 L115.9,421.6 L109.4,413.1 L103.4,405.1 L97.9,397.7 L92.6,390.8 L87.7,384.3 L83.2,378.2 L78.9,372.5Z M58.3,377.3 L62.0,383.1 L66.0,389.3 L70.1,396.0 L74.6,403.0 L79.4,410.6 L84.6,418.8 L90.1,427.6 L96.1,437.0 L102.6,447.3 L109.6,458.4 L117.3,470.6 L125.6,483.9 L134.9,498.5 L145.1,514.6 L156.4,532.5 L168.9,552.5 L183.1,575.0 L199.1,600.5 L217.3,629.6 L238.3,663.1 L262.8,702.1 L291.6,748.1 L326.0,803.2 L346.0,835.0 L348.7,833.3 L328.6,801.6 L293.7,746.8 L264.5,701.0 L239.8,662.2 L218.6,628.8 L200.2,599.8 L184.0,574.4 L169.8,552.0 L157.1,532.0 L145.8,514.1 L135.6,498.0 L126.4,483.4 L118.0,470.1 L110.3,457.9 L103.3,446.8 L96.8,436.6 L90.9,427.1 L85.3,418.3 L80.2,410.2 L75.4,402.6 L70.9,395.5 L66.7,388.8 L62.8,382.6 L59.1,376.8Z M37.6,381.7 L40.6,387.7 L43.9,394.1 L47.3,400.8 L51.0,408.1 L55.0,415.9 L59.2,424.2 L63.8,433.2 L68.8,442.9 L74.1,453.4 L79.9,464.8 L86.2,477.2 L93.2,490.8 L100.8,505.8 L109.2,522.3 L118.5,540.6 L128.9,561.1 L140.5,584.2 L153.7,610.3 L168.8,640.0 L186.1,674.3 L206.2,714.2 L230.0,761.3 L258.4,817.7 L269.2,839.0 L271.9,837.6 L261.0,816.3 L232.2,760.2 L208.1,713.3 L187.6,673.5 L170.1,639.3 L154.9,609.7 L141.6,583.7 L129.8,560.7 L119.3,540.2 L110.0,521.9 L101.6,505.4 L94.0,490.4 L87.0,476.8 L80.7,464.4 L74.9,453.0 L69.6,442.5 L64.6,432.8 L60.0,423.8 L55.8,415.5 L51.8,407.7 L48.1,400.4 L44.7,393.6 L41.4,387.3 L38.4,381.3Z M15.8,386.4 L18.2,392.5 L20.7,399.0 L23.4,406.0 L26.3,413.4 L29.4,421.4 L32.7,429.9 L36.3,439.1 L40.1,449.0 L44.3,459.8 L48.8,471.5 L53.7,484.2 L59.1,498.2 L65.0,513.5 L71.6,530.4 L78.8,549.2 L86.9,570.2 L95.9,593.8 L106.2,620.5 L117.9,650.9 L131.3,686.0 L147.0,726.9 L165.4,775.1 L187.5,832.8 L190.2,831.8 L167.7,774.3 L148.9,726.2 L132.9,685.4 L119.3,650.4 L107.4,620.0 L97.0,593.3 L87.8,569.8 L79.7,548.9 L72.4,530.1 L65.9,513.1 L59.9,497.8 L54.5,483.9 L49.6,471.2 L45.1,459.5 L40.9,448.7 L37.1,438.8 L33.5,429.6 L30.2,421.0 L27.1,413.1 L24.3,405.6 L21.6,398.7 L19.1,392.2 L16.7,386.0Z M-7.0,391.2 L-5.3,397.5 L-3.6,404.2 L-1.7,411.3 L0.3,419.0 L2.5,427.1 L4.8,435.9 L7.3,445.3 L10.0,455.5 L12.9,466.5 L16.1,478.5 L19.5,491.5 L23.3,505.8 L27.5,521.5 L32.1,538.9 L37.1,558.1 L42.8,579.6 L49.1,603.8 L56.2,631.2 L64.4,662.4 L73.8,698.4 L84.7,740.3 L97.6,789.7 L110.2,838.1 L112.9,837.4 L100.0,789.0 L86.7,739.7 L75.5,697.9 L65.9,662.0 L57.5,630.8 L50.2,603.5 L43.8,579.4 L38.0,557.9 L32.9,538.6 L28.3,521.3 L24.2,505.6 L20.4,491.3 L17.0,478.3 L13.8,466.3 L10.9,455.3 L8.2,445.1 L5.7,435.7 L3.4,426.9 L1.2,418.7 L-0.8,411.1 L-2.7,404.0 L-4.5,397.3 L-6.1,391.0Z M-31.0,396.4 L-30.1,402.8 L-29.1,409.7 L-28.1,417.0 L-26.9,424.8 L-25.8,433.2 L-24.5,442.2 L-23.1,451.8 L-21.6,462.3 L-20.0,473.6 L-18.3,485.9 L-16.4,499.2 L-14.3,513.9 L-12.0,530.0 L-9.5,547.8 L-6.7,567.5 L-3.6,589.6 L-0.1,614.4 L3.8,642.4 L8.2,674.5 L13.3,711.3 L19.3,754.3 L26.2,804.9 L30.3,833.8 L33.0,833.4 L28.8,804.6 L21.4,754.0 L15.1,711.1 L9.7,674.2 L5.1,642.2 L1.0,614.2 L-2.6,589.5 L-5.7,567.4 L-8.6,547.7 L-11.1,529.9 L-13.4,513.8 L-15.5,499.1 L-17.4,485.7 L-19.1,473.4 L-20.7,462.1 L-22.2,451.7 L-23.6,442.0 L-24.9,433.0 L-26.1,424.7 L-27.2,416.9 L-28.2,409.5 L-29.2,402.7 L-30.1,396.2Z"/>
</g>
<g stroke="#d4d5e6" stroke-opacity="0.75">
<path fill="none" stroke-width="1.0" d="M444.2,295.6L442.0,295.1M442.0,295.6L444.2,295.1M437.8,297.0L435.5,296.6M435.5,297.0L437.8,296.6M439.0,296.3L440.8,295.9M431.1,298.5L428.8,298.0M428.8,298.5L431.1,298.0M432.4,297.7L434.2,297.3M424.3,300.0L422.0,299.5M422.0,300.0L424.3,299.5M425.7,299.2L427.5,298.8M417.3,301.6L415.0,301.0M415.0,301.5L417.3,301.0M418.7,300.7L420.6,300.3M410.0,303.1L407.8,302.6M407.7,303.1L410.0,302.6M411.6,302.3L413.4,301.9M402.6,304.8L400.3,304.2M400.3,304.8L402.6,304.2M404.3,303.9L406.1,303.5M395.0,306.5L392.7,305.9M392.7,306.4L395.0,305.9M396.8,305.5L398.6,305.1M387.1,308.2L384.8,307.6M384.8,308.1L387.1,307.6M389.0,307.2L390.8,306.8M379.0,310.0L376.7,309.4M376.7,309.9L379.0,309.4M381.0,309.0L382.8,308.6M370.6,311.8L368.4,311.2M368.4,311.7L370.6,311.3M372.8,310.8L374.6,310.4M362.0,313.7L359.8,313.1M359.7,313.6L362.0,313.1M364.3,312.6L366.1,312.2M353.1,315.7L350.9,315.0M350.9,315.6L353.1,315.1M355.6,314.5L357.4,314.1M344.0,317.7L341.7,317.0M341.7,317.6L344.0,317.1M346.6,316.5L348.4,316.1M334.5,319.8L332.3,319.0M332.3,319.7L334.5,319.2M337.3,318.6L339.1,318.2M324.7,321.9L322.5,321.2M322.5,321.8L324.8,321.3M327.7,320.7L329.5,320.3M314.6,324.1L312.5,323.4M312.4,324.0L314.7,323.5M317.7,322.8L319.5,322.4M304.2,326.4L302.0,325.6M302.0,326.3L304.2,325.8M307.5,325.1L309.3,324.7M293.4,328.8L291.3,328.0M291.2,328.6L293.4,328.2M296.9,327.4L298.6,327.0M282.2,331.3L280.1,330.4M280.1,331.1L282.2,330.6M285.9,329.8L287.7,329.4M270.6,333.8L268.6,332.9M268.5,333.6L270.7,333.1M274.5,332.3L276.3,331.9M258.6,336.5L256.6,335.5M256.5,336.2L258.7,335.8M262.8,334.9L264.5,334.5M246.1,339.2L244.2,338.2M244.1,339.0L246.2,338.5M250.6,337.5L252.3,337.2M233.2,342.0L231.3,341.0M231.2,341.8L233.3,341.3M237.9,340.3L239.6,339.9M219.8,345.0L217.9,344.0M217.8,344.7L219.9,344.3M224.8,343.2L226.5,342.8M205.8,348.1L204.0,347.0M203.9,347.8L206.0,347.3M211.1,346.2L212.8,345.8M191.3,351.3L189.6,350.1M189.4,350.9L191.5,350.5M197.0,349.3L198.6,348.9M176.2,354.6L174.5,353.4M174.4,354.2L176.4,353.8M182.2,352.5L183.8,352.2M160.5,358.0L158.9,356.8M158.7,357.7L160.7,357.2M166.8,355.9L168.4,355.5M144.1,361.7L142.6,360.4M142.3,361.2L144.3,360.8M150.8,359.4L152.3,359.0M126.9,365.4L125.5,364.1M125.3,365.0L127.2,364.6M134.1,363.0L135.6,362.7M109.0,369.4L107.7,368.0M107.5,368.9L109.3,368.5M116.7,366.9L118.2,366.5M90.3,373.5L89.1,372.0M88.8,373.0L90.7,372.5M98.4,370.8L99.9,370.5M-17.7,397.2L-18.0,395.4M-18.8,396.5L-16.9,396.1M-6.6,393.8L-5.1,393.5M450.9,297.0L448.7,296.6M448.7,297.0L450.9,296.6M447.3,296.3L445.6,295.9M444.5,298.5L442.2,298.0M442.2,298.5L444.5,298.0M440.9,297.7L439.1,297.3M445.7,297.7L447.5,297.3M437.9,300.0L435.5,299.5M435.5,300.0L437.9,299.5M434.2,299.2L432.4,298.8M439.1,299.2L441.0,298.8M431.0,301.6L428.7,301.0M428.7,301.6L431.0,301.0M427.4,300.7L425.5,300.3M432.4,300.7L434.2,300.3M424.0,303.1L421.7,302.6M421.6,303.1L424.0,302.6M420.4,302.3L418.5,301.9M425.4,302.3L427.3,301.9M416.8,304.8L414.4,304.2M414.4,304.8L416.8,304.2M413.2,303.9L411.3,303.5M418.3,303.9L420.2,303.5M409.3,306.5L407.0,305.9M407.0,306.4L409.3,305.9M405.7,305.6L403.8,305.1M411.0,305.5L412.8,305.1M401.7,308.2L399.3,307.6M399.3,308.2L401.7,307.6M398.1,307.3L396.2,306.8M403.4,307.2L405.3,306.8M393.8,310.0L391.4,309.4M391.4,309.9L393.8,309.4M390.2,309.0L388.3,308.5M395.6,309.0L397.5,308.6M385.6,311.8L383.3,311.2M383.3,311.8L385.7,311.2M382.1,310.8L380.2,310.3M387.6,310.8L389.5,310.4M377.3,313.7L374.9,313.1M374.9,313.6L377.3,313.1M373.7,312.7L371.8,312.2M379.4,312.6L381.3,312.2M368.6,315.7L366.3,315.0M366.3,315.6L368.6,315.1M365.1,314.6L363.2,314.1M370.9,314.6L372.8,314.1M359.7,317.7L357.4,317.0M357.4,317.6L359.7,317.1M356.2,316.6L354.3,316.0M362.1,316.5L364.0,316.1M350.5,319.8L348.2,319.0M348.2,319.7L350.5,319.1M347.0,318.7L345.2,318.1M353.0,318.6L354.9,318.1M341.0,321.9L338.7,321.2M338.7,321.8L341.0,321.3M337.5,320.8L335.7,320.2M343.7,320.7L345.6,320.3M331.1,324.1L328.9,323.4M328.9,324.0L331.2,323.5M327.7,322.9L325.9,322.3M334.0,322.8L335.9,322.4M321.0,326.4L318.8,325.6M318.7,326.3L321.0,325.8M317.6,325.2L315.8,324.6M324.1,325.1L325.9,324.7M310.5,328.8L308.3,328.0M308.2,328.7L310.5,328.1M307.1,327.5L305.3,326.9M313.7,327.4L315.6,327.0M299.6,331.3L297.4,330.4M297.4,331.1L299.6,330.6M296.3,330.0L294.5,329.3M303.1,329.8L304.9,329.4M288.3,333.8L286.2,332.9M286.1,333.6L288.4,333.1M285.0,332.5L283.3,331.7M292.0,332.3L293.8,331.9M276.6,336.5L274.5,335.5M274.4,336.3L276.7,335.7M273.4,335.0L271.7,334.3M280.6,334.9L282.4,334.5M264.5,339.2L262.4,338.2M262.4,339.0L264.6,338.5M261.3,337.7L259.7,337.0M268.7,337.5L270.5,337.1M251.9,342.0L249.9,341.0M249.8,341.8L252.0,341.3M248.8,340.5L247.2,339.7M256.4,340.3L258.1,339.9M238.9,345.0L236.9,344.0M236.8,344.7L239.0,344.2M235.8,343.4L234.2,342.6M243.6,343.2L245.3,342.8M225.3,348.1L223.4,347.0M223.2,347.8L225.4,347.3M222.3,346.4L220.8,345.6M230.3,346.2L232.0,345.8M211.2,351.3L209.3,350.1M209.2,350.9L211.3,350.5M208.3,349.5L206.8,348.7M216.5,349.3L218.2,348.9M196.5,354.6L194.7,353.4M194.5,354.2L196.6,353.8M193.7,352.8L192.3,351.9M202.1,352.5L203.8,352.1M181.2,358.0L179.4,356.8M179.2,357.7L181.3,357.2M178.5,356.2L177.1,355.2M187.2,355.9L188.8,355.5M165.2,361.7L163.5,360.4M163.3,361.3L165.4,360.8M162.7,359.7L161.3,358.7M171.6,359.4L173.2,359.0M148.5,365.4L146.9,364.1M146.7,365.0L148.7,364.5M146.1,363.4L144.9,362.3M155.3,363.1L156.9,362.7M131.1,369.4L129.6,368.0M129.4,368.9L131.4,368.4M128.9,367.2L127.7,366.1M138.4,366.9L139.9,366.5M112.9,373.5L111.5,372.0M111.2,373.0L113.2,372.5M110.8,371.3L109.7,370.1M120.6,370.9L122.2,370.5M93.8,377.8L92.6,376.3M92.3,377.2L94.2,376.8M92.0,375.5L91.0,374.3M102.1,375.0L103.6,374.7M73.9,382.3L72.8,380.7M72.4,381.7L74.3,381.3M72.2,379.9L71.3,378.6M82.6,379.4L84.1,379.1M52.9,387.0L52.0,385.4M51.5,386.4L53.4,386.0M51.5,384.5L50.7,383.1M62.3,384.0L63.8,383.6M30.9,392.0L30.1,390.2M29.6,391.3L31.5,390.9M29.7,389.3L29.1,387.9M40.9,388.8L42.4,388.5M7.8,397.2L7.2,395.4M6.5,396.5L8.5,396.1M6.9,394.4L6.4,392.9M18.4,393.9L19.9,393.5M-16.6,402.7L-16.9,400.8M-17.7,402.0L-15.8,401.5M-17.2,399.8L-17.5,398.2M-5.2,399.2L-3.7,398.8M457.8,298.5L455.6,298.0M455.6,298.5L457.8,298.0M454.1,297.7L452.4,297.3M451.4,300.0L449.1,299.5M449.1,300.0L451.4,299.5M447.7,299.2L445.9,298.8M452.6,299.2L454.4,298.8M444.8,301.6L442.4,301.0M442.4,301.6L444.8,301.0M441.0,300.7L439.2,300.3M446.0,300.7L447.9,300.3M437.9,303.1L435.6,302.6M435.6,303.1L437.9,302.6M434.2,302.3L432.3,301.9M439.2,302.3L441.2,301.9M430.9,304.8L428.5,304.2M428.5,304.8L430.9,304.2M427.2,303.9L425.3,303.5M432.3,303.9L434.2,303.5M423.7,306.5L421.3,305.9M421.3,306.5L423.7,305.9M420.0,305.6L418.0,305.1M425.2,305.6L427.1,305.1M416.2,308.2L413.8,307.6M413.8,308.2L416.2,307.6M412.5,307.3L410.6,306.8M417.8,307.3L419.8,306.8M408.6,310.0L406.2,309.4M406.2,310.0L408.6,309.4M404.9,309.0L402.9,308.5M410.3,309.0L412.2,308.6M400.7,311.8L398.3,311.2M398.3,311.8L400.7,311.2M397.0,310.8L395.0,310.3M402.5,310.8L404.4,310.4M392.5,313.7L390.1,313.1M390.1,313.7L392.5,313.1M388.8,312.7L386.9,312.2M394.5,312.7L396.4,312.2M384.1,315.7L381.7,315.0M381.7,315.6L384.1,315.0M380.4,314.6L378.5,314.1M386.2,314.6L388.1,314.1M375.4,317.7L373.1,317.0M373.0,317.6L375.5,317.1M371.8,316.6L369.9,316.0M377.6,316.5L379.6,316.1M366.5,319.8L364.1,319.0M364.1,319.7L366.5,319.1M362.8,318.7L360.9,318.1M368.8,318.6L370.8,318.1M357.2,321.9L354.9,321.2M354.9,321.8L357.3,321.3M353.6,320.8L351.7,320.2M359.8,320.7L361.7,320.2M347.7,324.1L345.3,323.4M345.3,324.0L347.7,323.5M344.1,322.9L342.2,322.3M350.4,322.9L352.3,322.4M337.8,326.4L335.5,325.6M335.4,326.3L337.8,325.8M334.2,325.2L332.4,324.6M340.7,325.1L342.6,324.7M327.6,328.8L325.3,328.0M325.2,328.7L327.6,328.1M324.0,327.5L322.2,326.9M330.6,327.4L332.5,327.0M317.0,331.3L314.7,330.4M314.7,331.1L317.0,330.6M313.5,330.0L311.7,329.3M320.2,329.8L322.1,329.4M306.0,333.8L303.8,332.9M303.7,333.6L306.1,333.1M302.6,332.5L300.8,331.7M309.5,332.3L311.4,331.9M294.7,336.5L292.4,335.5M292.4,336.3L294.7,335.7M291.3,335.0L289.5,334.3M298.3,334.9L300.2,334.5M282.9,339.2L280.7,338.2M280.6,339.0L283.0,338.5M279.5,337.7L277.8,337.0M286.8,337.6L288.7,337.1M270.7,342.0L268.5,341.0M268.4,341.8L270.7,341.3M267.4,340.5L265.6,339.7M274.8,340.3L276.7,339.9M258.0,345.0L255.8,344.0M255.7,344.7L258.0,344.2M254.7,343.4L253.0,342.6M262.4,343.2L264.2,342.8M244.7,348.1L242.7,347.0M242.6,347.8L244.9,347.3M241.6,346.4L239.9,345.6M249.5,346.2L251.3,345.8M231.0,351.3L229.0,350.1M228.9,351.0L231.1,350.4M227.9,349.5L226.3,348.7M236.0,349.3L237.8,348.9M216.7,354.6L214.8,353.4M214.6,354.3L216.9,353.7M213.7,352.8L212.2,351.9M222.1,352.5L223.8,352.1M201.8,358.0L199.9,356.8M199.8,357.7L202.0,357.2M199.0,356.2L197.4,355.2M207.5,355.9L209.3,355.5M186.3,361.7L184.5,360.4M184.3,361.3L186.5,360.8M183.5,359.7L182.1,358.7M192.4,359.4L194.1,359.0M170.1,365.4L168.4,364.1M168.2,365.0L170.3,364.5M167.5,363.4L166.1,362.3M176.5,363.1L178.2,362.7M153.2,369.4L151.5,368.0M151.3,368.9L153.4,368.4M150.7,367.2L149.4,366.1M160.0,366.9L161.7,366.5M135.5,373.5L133.9,372.0M133.7,373.0L135.7,372.5M133.1,371.3L131.9,370.1M142.8,370.9L144.4,370.5M116.9,377.8L115.5,376.3M115.2,377.3L117.2,376.8M114.8,375.5L113.6,374.3M124.8,375.1L126.4,374.7M97.5,382.3L96.2,380.7M95.9,381.7L97.9,381.3M95.5,379.9L94.5,378.6M105.9,379.4L107.5,379.0M77.2,387.0L76.0,385.4M75.6,386.4L77.6,386.0M75.4,384.5L74.5,383.1M86.0,384.0L87.6,383.6M55.8,392.0L54.8,390.2M54.3,391.4L56.3,390.9M54.2,389.3L53.4,387.9M65.3,388.8L66.8,388.4M33.3,397.2L32.4,395.4M31.9,396.5L33.8,396.1M32.0,394.4L31.4,392.9M43.4,393.9L45.0,393.5M9.6,402.7L9.0,400.8M8.3,402.0L10.3,401.5M8.6,399.8L8.1,398.2M20.4,399.2L22.0,398.8M-15.4,408.5L-15.8,406.5M-16.6,407.8L-14.6,407.3M-16.0,405.4L-16.3,403.8M-3.8,404.8L-2.2,404.4M464.9,300.0L462.7,299.5M462.7,300.0L464.9,299.5M461.1,299.2L459.3,298.8M458.5,301.5L456.2,301.0M456.2,301.6L458.5,301.0M454.7,300.7L452.9,300.3M459.7,300.7L461.5,300.3M451.8,303.1L449.5,302.6M449.5,303.1L451.8,302.6M448.0,302.3L446.2,301.9M453.1,302.3L455.0,301.9M445.0,304.8L442.7,304.2M442.7,304.8L445.0,304.2M441.2,303.9L439.3,303.5M446.3,303.9L448.2,303.5M438.0,306.5L435.6,305.9M435.6,306.5L438.0,305.9M434.2,305.6L432.3,305.1M439.4,305.6L441.3,305.1M430.8,308.2L428.3,307.6M428.3,308.2L430.8,307.6M427.0,307.3L425.0,306.8M432.2,307.3L434.2,306.8M423.4,310.0L420.9,309.4M420.9,310.0L423.4,309.4M419.5,309.0L417.6,308.5M424.9,309.0L426.9,308.5M415.7,311.8L413.2,311.2M413.2,311.8L415.7,311.2M411.9,310.8L409.9,310.3M417.3,310.8L419.3,310.3M407.8,313.7L405.3,313.1M405.3,313.7L407.8,313.1M404.0,312.7L402.0,312.2M409.5,312.7L411.5,312.2M399.6,315.7L397.1,315.0M397.1,315.6L399.6,315.0M395.8,314.6L393.8,314.1M401.5,314.6L403.5,314.1M391.2,317.7L388.7,317.0M388.7,317.6L391.2,317.0M387.4,316.6L385.4,316.0M393.2,316.6L395.2,316.1M382.5,319.8L380.0,319.0M380.0,319.7L382.5,319.1M378.7,318.7L376.7,318.1M384.6,318.6L386.6,318.1M373.5,321.9L371.0,321.2M371.0,321.8L373.5,321.2M369.7,320.8L367.8,320.2M375.8,320.7L377.8,320.2M364.2,324.1L361.8,323.4M361.7,324.0L364.2,323.5M360.5,322.9L358.5,322.3M366.7,322.9L368.7,322.4M354.6,326.4L352.2,325.6M352.2,326.3L354.6,325.7M350.9,325.2L349.0,324.6M357.2,325.1L359.2,324.6M344.7,328.8L342.3,328.0M342.2,328.7L344.7,328.1M341.0,327.5L339.1,326.9M347.5,327.4L349.5,327.0M334.4,331.3L332.0,330.4M332.0,331.1L334.4,330.5M330.7,330.0L328.8,329.3M337.4,329.8L339.4,329.4M323.7,333.8L321.4,332.9M321.3,333.7L323.8,333.1M320.1,332.5L318.2,331.7M326.9,332.3L328.9,331.9M312.7,336.5L310.4,335.5M310.3,336.3L312.8,335.7M309.1,335.0L307.3,334.3M316.1,334.9L318.1,334.4M301.3,339.2L298.9,338.2M298.9,339.0L301.3,338.4M297.7,337.7L295.9,337.0M304.9,337.6L306.8,337.1M289.4,342.0L287.1,341.0M287.0,341.8L289.4,341.3M285.9,340.5L284.1,339.7M293.3,340.4L295.2,339.9M277.0,345.0L274.8,344.0M274.7,344.8L277.1,344.2M273.6,343.4L271.8,342.6M281.2,343.2L283.1,342.8M264.2,348.1L262.0,347.0M261.9,347.8L264.3,347.2M260.8,346.4L259.1,345.6M268.6,346.2L270.5,345.8M250.9,351.3L248.7,350.1M248.6,351.0L251.0,350.4M247.6,349.5L245.9,348.7M255.6,349.3L257.5,348.9M237.0,354.6L234.9,353.4M234.8,354.3L237.1,353.7M233.8,352.8L232.1,351.9M242.0,352.6L243.9,352.1M222.5,358.0L220.5,356.8M220.3,357.7L222.6,357.2M219.4,356.2L217.8,355.2M227.9,355.9L229.7,355.5M207.4,361.7L205.5,360.4M205.3,361.3L207.6,360.7M204.4,359.7L202.8,358.7M213.1,359.4L215.0,359.0M191.7,365.4L189.8,364.1M189.6,365.0L191.9,364.5M188.8,363.4L187.3,362.3M197.8,363.1L199.6,362.7M175.2,369.4L173.4,368.0M173.2,368.9L175.4,368.4M172.5,367.2L171.0,366.1M181.7,366.9L183.5,366.5M158.0,373.5L156.3,372.0M156.1,373.0L158.3,372.5M155.4,371.3L154.0,370.1M165.0,370.9L166.7,370.5M140.0,377.8L138.4,376.3M138.1,377.3L140.3,376.8M137.6,375.5L136.3,374.3M147.4,375.1L149.2,374.7M121.2,382.3L119.7,380.7M119.4,381.8L121.5,381.2M118.9,379.9L117.7,378.6M129.1,379.4L130.8,379.0M101.4,387.0L100.0,385.4M99.6,386.4L101.7,385.9M99.3,384.5L98.2,383.1M109.8,384.0L111.5,383.6M80.6,392.0L79.4,390.2M78.9,391.4L81.0,390.9M78.7,389.3L77.8,387.9M89.6,388.8L91.3,388.4M58.7,397.2L57.7,395.4M57.2,396.6L59.3,396.1M57.1,394.4L56.3,392.9M68.4,393.9L70.1,393.5M35.7,402.7L34.9,400.8M34.3,402.0L36.3,401.5M34.4,399.8L33.7,398.2M46.1,399.2L47.7,398.8M11.5,408.5L10.8,406.5M10.1,407.8L12.2,407.3M10.5,405.4L9.9,403.8M22.5,404.8L24.2,404.4M-14.1,414.7L-14.6,412.5M-15.4,413.8L-13.3,413.3M-14.8,411.4L-15.1,409.6M-2.3,410.7L-0.6,410.3M472.2,301.5L470.0,301.1M470.0,301.6L472.2,301.0M468.3,300.7L466.5,300.3M465.7,303.1L463.5,302.6M463.5,303.1L465.7,302.6M461.9,302.3L460.0,301.9M467.0,302.3L468.8,301.9M459.1,304.8L456.8,304.2M456.8,304.8L459.1,304.2M455.2,303.9L453.4,303.5M460.4,303.9L462.2,303.5M452.4,306.4L450.0,305.9M450.0,306.5L452.3,305.9M448.4,305.6L446.5,305.1M453.6,305.6L455.5,305.1M445.4,308.2L442.9,307.6M442.9,308.2L445.4,307.6M441.4,307.3L439.5,306.8M446.7,307.3L448.6,306.8M438.2,310.0L435.6,309.4M435.6,310.0L438.2,309.4M434.2,309.0L432.2,308.5M439.5,309.0L441.5,308.5M430.7,311.8L428.2,311.2M428.2,311.8L430.7,311.2M426.8,310.8L424.7,310.3M432.2,310.8L434.2,310.3M423.0,313.7L420.5,313.1M420.5,313.7L423.0,313.1M419.1,312.7L417.0,312.2M424.6,312.7L426.6,312.2M415.1,315.7L412.5,315.0M412.5,315.6L415.1,315.0M411.2,314.6L409.1,314.1M416.8,314.6L418.8,314.1M406.9,317.7L404.4,317.0M404.4,317.6L406.9,317.0M403.0,316.6L401.0,316.0M408.7,316.6L410.8,316.1M398.5,319.8L395.9,319.0M395.9,319.7L398.5,319.1M394.6,318.7L392.5,318.1M400.4,318.6L402.5,318.1M389.8,321.9L387.2,321.2M387.2,321.9L389.8,321.2M385.9,320.8L383.8,320.2M391.8,320.7L393.9,320.2M380.7,324.1L378.2,323.4M378.2,324.1L380.8,323.4M376.9,322.9L374.8,322.3M383.0,322.9L385.0,322.4M371.4,326.4L368.9,325.6M368.9,326.3L371.4,325.7M367.6,325.2L365.5,324.6M373.8,325.1L375.9,324.6M361.8,328.8L359.3,328.0M359.2,328.7L361.8,328.1M357.9,327.5L355.9,326.9M364.4,327.5L366.4,327.0M351.8,331.3L349.3,330.4M349.3,331.2L351.8,330.5M348.0,330.0L346.0,329.3M354.6,329.9L356.6,329.4M341.5,333.8L339.0,332.9M338.9,333.7L341.5,333.1M337.7,332.5L335.7,331.7M344.4,332.3L346.5,331.8M330.7,336.5L328.3,335.5M328.2,336.3L330.8,335.7M327.0,335.0L325.0,334.3M333.9,334.9L335.9,334.4M319.6,339.2L317.2,338.2M317.1,339.0L319.7,338.4M315.9,337.7L314.0,337.0M323.0,337.6L325.0,337.1M308.1,342.0L305.7,341.0M305.6,341.9L308.2,341.2M304.4,340.5L302.5,339.7M311.7,340.4L313.7,339.9M296.1,345.0L293.7,344.0M293.7,344.8L296.2,344.2M292.5,343.4L290.6,342.6M300.0,343.2L302.0,342.8M283.7,348.1L281.3,347.0M281.3,347.8L283.7,347.2M280.1,346.4L278.2,345.6M287.8,346.2L289.8,345.7M270.7,351.3L268.4,350.1M268.3,351.0L270.8,350.4M267.2,349.5L265.4,348.7M275.1,349.3L277.1,348.9M257.2,354.6L255.0,353.4M254.9,354.3L257.3,353.7M253.8,352.8L252.0,351.9M261.9,352.6L263.9,352.1M243.2,358.0L241.0,356.8M240.9,357.7L243.3,357.1M239.9,356.2L238.1,355.2M248.2,355.9L250.1,355.5M228.5,361.7L226.4,360.4M226.3,361.3L228.7,360.7M225.3,359.7L223.6,358.7M233.9,359.4L235.8,359.0M213.3,365.4L211.2,364.1M211.0,365.1L213.4,364.5M210.1,363.4L208.5,362.3M219.0,363.1L220.9,362.6M197.3,369.4L195.3,368.0M195.1,369.0L197.5,368.4M194.3,367.2L192.7,366.1M203.4,366.9L205.3,366.5M180.6,373.5L178.7,372.0M178.5,373.0L180.8,372.5M177.7,371.3L176.2,370.1M187.1,370.9L189.0,370.5M163.1,377.8L161.3,376.3M161.1,377.3L163.4,376.7M160.4,375.5L158.9,374.3M170.1,375.1L171.9,374.6M144.8,382.3L143.1,380.7M142.8,381.8L145.1,381.2M142.2,379.9L140.9,378.6M152.3,379.5L154.1,379.0M125.6,387.0L124.0,385.4M123.7,386.5L125.9,385.9M123.2,384.5L122.0,383.1M133.6,384.0L135.4,383.6M105.4,392.0L104.0,390.2M103.6,391.4L105.8,390.9M103.3,389.3L102.1,387.9M114.0,388.8L115.8,388.4M84.2,397.2L82.9,395.4M82.5,396.6L84.7,396.0M82.3,394.4L81.2,392.9M93.4,393.9L95.2,393.5M61.9,402.7L60.8,400.8M60.2,402.0L62.4,401.5M60.2,399.8L59.3,398.2M71.7,399.2L73.5,398.8M38.3,408.5L37.4,406.5M36.8,407.8L39.0,407.2M36.9,405.4L36.2,403.8M48.9,404.8L50.6,404.4M13.5,414.7L12.8,412.5M12.0,413.9L14.2,413.3M12.4,411.4L11.8,409.6M24.8,410.7L26.6,410.3M-12.8,421.2L-13.3,418.8M-14.2,420.3L-11.9,419.7M-13.5,417.7L-13.9,415.8M-0.7,417.0L1.1,416.5M479.6,303.1L477.4,302.6M477.4,303.1L479.6,302.6M475.7,302.3L473.9,301.9M473.2,304.7L471.0,304.3M471.0,304.8L473.2,304.2M469.2,303.9L467.4,303.5M474.4,303.9L476.2,303.5M466.7,306.4L464.3,305.9M464.3,306.5L466.6,305.9M462.6,305.5L460.8,305.1M467.9,305.6L469.7,305.1M459.9,308.2L457.5,307.6M457.5,308.2L459.9,307.6M455.8,307.2L453.9,306.8M461.1,307.3L463.1,306.8M452.9,310.0L450.4,309.4M450.4,310.0L452.9,309.4M448.8,309.0L446.9,308.5M454.2,309.0L456.2,308.5M445.7,311.8L443.1,311.2M443.1,311.8L445.7,311.2M441.6,310.8L439.6,310.3M447.0,310.8L449.1,310.3M438.3,313.7L435.7,313.1M435.7,313.7L438.3,313.1M434.2,312.7L432.1,312.2M439.7,312.7L441.8,312.2M430.6,315.7L428.0,315.0M428.0,315.7L430.6,315.0M426.5,314.6L424.4,314.1M432.1,314.6L434.2,314.1M422.7,317.7L420.0,317.0M420.0,317.7L422.7,317.0M418.6,316.6L416.5,316.0M424.3,316.6L426.4,316.1M414.5,319.8L411.8,319.0M411.8,319.7L414.5,319.1M410.4,318.7L408.3,318.1M416.2,318.6L418.3,318.1M406.0,321.9L403.4,321.2M403.4,321.9L406.0,321.2M402.0,320.8L399.9,320.2M407.9,320.7L410.0,320.2M397.3,324.1L394.6,323.4M394.6,324.1L397.3,323.4M393.2,322.9L391.1,322.3M399.3,322.9L401.4,322.4M388.2,326.4L385.6,325.6M385.6,326.4L388.3,325.7M384.2,325.2L382.1,324.6M390.4,325.2L392.5,324.6M378.9,328.8L376.3,328.0M376.2,328.7L378.9,328.1M374.9,327.5L372.8,326.9M381.2,327.5L383.4,326.9M369.2,331.3L366.6,330.4M366.6,331.2L369.2,330.5M365.2,330.0L363.1,329.3M371.7,329.9L373.8,329.3M359.2,333.8L356.6,332.9M356.6,333.7L359.2,333.0M355.2,332.5L353.2,331.7M361.9,332.4L364.0,331.8M348.8,336.5L346.2,335.5M346.2,336.3L348.8,335.7M344.9,335.0L342.8,334.3M351.7,334.9L353.8,334.4M338.0,339.2L335.5,338.2M335.4,339.1L338.1,338.4M334.1,337.7L332.1,337.0M341.1,337.6L343.2,337.1M326.8,342.0L324.3,341.0M324.2,341.9L326.9,341.2M323.0,340.5L320.9,339.7M330.1,340.4L332.2,339.9M315.2,345.0L312.7,344.0M312.6,344.8L315.3,344.1M311.4,343.4L309.4,342.6M318.8,343.3L320.9,342.7M303.1,348.1L300.7,347.0M300.6,347.9L303.2,347.2M299.4,346.4L297.4,345.6M306.9,346.3L309.0,345.7M290.6,351.3L288.1,350.1M288.1,351.0L290.6,350.4M286.9,349.5L284.9,348.7M294.6,349.4L296.7,348.8M277.5,354.6L275.1,353.4M275.0,354.3L277.6,353.7M273.9,352.8L271.9,351.9M281.9,352.6L283.9,352.1M263.9,358.0L261.5,356.8M261.4,357.8L264.0,357.1M260.3,356.2L258.4,355.2M268.5,356.0L270.6,355.4M249.7,361.7L247.4,360.4M247.3,361.3L249.8,360.7M246.2,359.7L244.4,358.7M254.7,359.5L256.7,359.0M234.8,365.4L232.6,364.1M232.5,365.1L235.0,364.4M231.5,363.4L229.7,362.3M240.2,363.1L242.2,362.6M219.4,369.4L217.2,368.0M217.0,369.0L219.5,368.4M216.1,367.2L214.4,366.1M225.1,366.9L227.1,366.4M203.2,373.5L201.1,372.0M200.9,373.1L203.4,372.4M200.0,371.3L198.4,370.1M209.3,370.9L211.3,370.4M186.2,377.8L184.2,376.3M184.0,377.3L186.4,376.7M183.2,375.5L181.6,374.3M192.8,375.1L194.7,374.6M168.5,382.3L166.6,380.7M166.3,381.8L168.7,381.2M165.6,379.9L164.1,378.6M175.5,379.5L177.4,379.0M149.8,387.0L148.1,385.4M147.8,386.5L150.1,385.9M147.1,384.5L145.7,383.1M157.4,384.1L159.3,383.6M130.3,392.0L128.6,390.2M128.3,391.4L130.6,390.8M127.8,389.3L126.4,387.9M138.4,388.9L140.2,388.4M109.7,397.2L108.2,395.4M107.8,396.6L110.1,396.0M107.4,394.4L106.2,392.9M118.4,393.9L120.2,393.4M88.0,402.7L86.7,400.8M86.2,402.1L88.5,401.5M86.0,399.8L84.9,398.2M97.4,399.2L99.2,398.8M65.2,408.5L64.0,406.5M63.5,407.8L65.8,407.2M63.4,405.4L62.5,403.8M75.2,404.8L77.1,404.4M41.1,414.7L40.1,412.5M39.4,413.9L41.8,413.3M39.6,411.4L38.8,409.6M51.8,410.7L53.7,410.3M15.6,421.2L14.8,418.8M14.0,420.3L16.4,419.7M14.5,417.7L13.9,415.8M27.1,417.0L29.0,416.5M-11.4,428.0L-11.9,425.6M-12.9,427.1L-10.4,426.5M-12.2,424.3L-12.6,422.4M1.0,423.6L2.9,423.1M487.3,304.7L485.1,304.3M485.1,304.8L487.3,304.2M483.2,303.9L481.5,303.5M481.0,306.4L478.7,305.9M478.7,306.5L480.9,305.9M476.8,305.5L475.0,305.1M482.2,305.6L483.9,305.1M474.4,308.2L472.0,307.6M472.1,308.2L474.4,307.6M470.3,307.2L468.4,306.8M475.6,307.3L477.5,306.8M467.6,309.9L465.2,309.4M465.2,310.0L467.6,309.4M463.5,309.0L461.6,308.6M468.9,309.0L470.8,308.5M460.6,311.8L458.2,311.2M458.2,311.8L460.6,311.2M456.5,310.8L454.5,310.3M461.9,310.8L463.9,310.3M453.4,313.7L450.9,313.1M450.9,313.7L453.4,313.1M449.3,312.7L447.2,312.2M454.8,312.7L456.8,312.2M446.0,315.7L443.4,315.0M443.4,315.7L446.0,315.0M441.9,314.6L439.8,314.1M447.4,314.6L449.5,314.1M438.4,317.7L435.7,317.0M435.7,317.7L438.4,317.0M434.2,316.6L432.0,316.0M439.8,316.6L442.0,316.0M430.5,319.8L427.7,319.0M427.7,319.8L430.5,319.0M426.3,318.7L424.1,318.1M432.0,318.6L434.2,318.1M422.3,321.9L419.5,321.2M419.5,321.9L422.3,321.2M418.1,320.8L415.9,320.2M423.9,320.7L426.1,320.2M413.8,324.1L411.1,323.4M411.1,324.1L413.8,323.4M409.6,322.9L407.4,322.3M415.6,322.9L417.8,322.4M405.0,326.4L402.3,325.6M402.3,326.4L405.1,325.7M400.9,325.2L398.7,324.6M407.0,325.2L409.2,324.6M396.0,328.8L393.3,328.0M393.3,328.8L396.0,328.0M391.8,327.5L389.7,326.9M398.1,327.5L400.3,326.9M386.6,331.3L383.9,330.4M383.9,331.2L386.6,330.5M382.5,330.0L380.3,329.3M388.9,329.9L391.1,329.3M376.9,333.8L374.2,332.9M374.2,333.7L376.9,333.0M372.8,332.5L370.6,331.7M379.3,332.4L381.5,331.8M366.8,336.5L364.1,335.5M364.1,336.4L366.9,335.6M362.7,335.0L360.6,334.3M369.5,335.0L371.7,334.4M356.4,339.2L353.7,338.2M353.7,339.1L356.4,338.4M352.3,337.7L350.2,337.0M359.2,337.6L361.4,337.1M345.5,342.0L342.9,341.0M342.9,341.9L345.6,341.2M341.5,340.5L339.4,339.7M348.6,340.4L350.8,339.8M334.3,345.0L331.7,344.0M331.6,344.8L334.3,344.1M330.3,343.4L328.2,342.6M337.6,343.3L339.7,342.7M322.6,348.1L320.0,347.0M319.9,347.9L322.6,347.2M318.6,346.4L316.5,345.6M326.1,346.3L328.3,345.7M310.4,351.3L307.8,350.1M307.8,351.1L310.5,350.3M306.5,349.5L304.5,348.7M314.2,349.4L316.3,348.8M297.7,354.6L295.2,353.4M295.1,354.4L297.8,353.6M293.9,352.8L291.9,351.9M301.8,352.6L303.9,352.1M284.5,358.0L282.1,356.8M282.0,357.8L284.6,357.1M280.8,356.2L278.8,355.2M288.9,356.0L291.0,355.4M270.8,361.7L268.3,360.4M268.2,361.4L270.9,360.7M267.1,359.7L265.1,358.7M275.4,359.5L277.6,358.9M256.4,365.4L254.0,364.1M253.9,365.1L256.5,364.4M252.8,363.4L250.9,362.3M261.4,363.1L263.5,362.6M241.4,369.4L239.1,368.0M238.9,369.0L241.6,368.3M237.9,367.2L236.0,366.1M246.8,367.0L248.9,366.4M225.7,373.5L223.5,372.0M223.3,373.1L225.9,372.4M222.3,371.3L220.5,370.1M231.5,371.0L233.6,370.4M209.3,377.8L207.1,376.3M206.9,377.4L209.5,376.7M206.0,375.5L204.3,374.3M215.5,375.1L217.5,374.6M192.1,382.3L190.0,380.7M189.8,381.8L192.3,381.2M188.9,379.9L187.3,378.6M198.7,379.5L200.8,379.0M174.1,387.0L172.1,385.4M171.8,386.5L174.3,385.9M171.0,384.5L169.5,383.1M181.2,384.1L183.2,383.6M155.1,392.0L153.2,390.2M152.9,391.4L155.4,390.8M152.3,389.3L150.8,387.9M162.7,388.9L164.7,388.4M135.2,397.2L133.4,395.4M133.1,396.6L135.5,396.0M132.5,394.4L131.1,392.9M143.4,393.9L145.3,393.4M114.2,402.7L112.6,400.8M112.2,402.1L114.6,401.4M111.8,399.8L110.5,398.2M123.0,399.3L125.0,398.7M92.1,408.5L90.6,406.5M90.1,407.8L92.6,407.2M89.9,405.4L88.7,403.8M101.5,404.9L103.5,404.3M68.7,414.7L67.4,412.5M66.9,413.9L69.3,413.3M66.8,411.4L65.8,409.6M78.9,410.8L80.8,410.3M44.0,421.2L43.0,418.8M42.2,420.3L44.7,419.7M42.4,417.7L41.6,415.8M55.0,417.0L56.9,416.5M17.8,428.0L17.0,425.6M16.2,427.1L18.7,426.5M16.6,424.3L16.0,422.4M29.6,423.6L31.6,423.1M-9.9,435.3L-10.5,432.7M-11.5,434.3L-8.9,433.7M-10.7,431.4L-11.2,429.3M2.8,430.6L4.8,430.1M495.3,306.4L493.1,305.9M493.1,306.5L495.2,305.9M491.0,305.5L489.3,305.1M488.9,308.1L486.6,307.7M486.6,308.2L488.9,307.6M484.7,307.2L482.9,306.8M490.1,307.3L491.9,306.8M482.3,309.9L480.0,309.4M480.0,310.0L482.3,309.4M478.1,309.0L476.2,308.6M483.6,309.0L485.4,308.5M475.6,311.8L473.2,311.2M473.2,311.8L475.6,311.2M471.3,310.8L469.4,310.4M476.9,310.8L478.8,310.3M468.6,313.7L466.2,313.1M466.2,313.7L468.6,313.1M464.4,312.7L462.4,312.2M469.9,312.7L471.9,312.2M461.5,315.6L458.9,315.0M458.9,315.7L461.4,315.0M457.2,314.6L455.1,314.1M462.8,314.6L464.8,314.1M454.1,317.7L451.4,317.0M451.4,317.7L454.0,317.0M449.8,316.6L447.7,316.1M455.4,316.6L457.5,316.0M446.4,319.8L443.7,319.1M443.7,319.8L446.4,319.0M442.1,318.6L439.9,318.1M447.8,318.7L450.0,318.1M438.5,321.9L435.7,321.2M435.7,321.9L438.5,321.2M434.2,320.8L432.0,320.2M440.0,320.8L442.2,320.2M430.3,324.1L427.5,323.4M427.5,324.1L430.3,323.4M426.0,322.9L423.8,322.3M431.9,322.9L434.2,322.3M421.9,326.4L419.0,325.6M419.0,326.4L421.9,325.7M417.5,325.2L415.3,324.6M423.6,325.2L425.9,324.6M413.1,328.8L410.3,328.0M410.3,328.8L413.1,328.0M408.8,327.5L406.5,326.9M415.0,327.5L417.2,326.9M404.0,331.3L401.2,330.4M401.2,331.2L404.0,330.5M399.7,330.0L397.5,329.3M406.0,329.9L408.3,329.3M394.6,333.8L391.8,332.9M391.8,333.8L394.6,333.0M390.3,332.5L388.1,331.7M396.8,332.4L399.1,331.8M384.9,336.5L382.1,335.5M382.0,336.4L384.9,335.6M380.6,335.0L378.4,334.3M387.2,335.0L389.5,334.4M374.8,339.2L372.0,338.2M371.9,339.1L374.8,338.3M370.5,337.7L368.3,337.0M377.3,337.7L379.6,337.0M364.3,342.0L361.5,341.0M361.5,341.9L364.3,341.2M360.0,340.5L357.8,339.7M367.0,340.4L369.3,339.8M353.4,345.0L350.6,344.0M350.6,344.9L353.4,344.1M349.2,343.4L347.0,342.6M356.4,343.3L358.6,342.7M342.0,348.1L339.3,347.0M339.3,347.9L342.1,347.1M337.9,346.4L335.7,345.6M345.3,346.3L347.5,345.7M330.3,351.3L327.6,350.1M327.5,351.1L330.3,350.3M326.1,349.5L324.0,348.7M333.7,349.4L336.0,348.8M318.0,354.6L315.3,353.4M315.3,354.4L318.1,353.6M313.9,352.8L311.8,351.9M321.7,352.6L324.0,352.0M305.2,358.0L302.6,356.8M302.5,357.8L305.3,357.1M301.2,356.2L299.1,355.2M309.2,356.0L311.5,355.4M291.9,361.7L289.3,360.4M289.2,361.4L292.0,360.6M288.0,359.7L285.9,358.7M296.2,359.5L298.4,358.9M278.0,365.4L275.5,364.1M275.3,365.1L278.1,364.4M274.1,363.4L272.1,362.3M282.6,363.2L284.9,362.6M263.5,369.4L261.0,368.0M260.9,369.0L263.6,368.3M259.7,367.2L257.7,366.1M268.5,367.0L270.7,366.4M248.3,373.5L245.9,372.0M245.7,373.1L248.4,372.4M244.6,371.3L242.7,370.1M253.6,371.0L255.8,370.4M232.4,377.8L230.0,376.3M229.9,377.4L232.6,376.7M228.8,375.5L226.9,374.3M238.2,375.2L240.3,374.6M215.7,382.3L213.5,380.7M213.3,381.9L215.9,381.1M212.3,379.9L210.5,378.6M221.9,379.5L224.1,378.9M198.3,387.0L196.1,385.4M195.9,386.6L198.5,385.8M195.0,384.5L193.2,383.1M204.9,384.1L207.1,383.5M179.9,392.0L177.8,390.2M177.6,391.5L180.2,390.8M176.8,389.3L175.1,387.9M187.1,388.9L189.2,388.3M160.6,397.2L158.7,395.4M158.3,396.7L161.0,396.0M157.7,394.4L156.1,392.9M168.3,394.0L170.4,393.4M140.3,402.7L138.5,400.8M138.1,402.1L140.7,401.4M137.6,399.8L136.1,398.2M148.6,399.3L150.7,398.7M118.9,408.5L117.2,406.5M116.8,407.9L119.4,407.2M116.4,405.4L115.0,403.8M127.9,404.9L129.9,404.3M96.3,414.7L94.8,412.5M94.3,413.9L96.8,413.2M94.0,411.4L92.8,409.6M105.9,410.8L108.0,410.2M72.4,421.2L71.1,418.8M70.4,420.3L73.0,419.7M70.4,417.7L69.3,415.8M82.8,417.0L84.8,416.5M47.1,428.0L46.0,425.6M45.2,427.1L47.8,426.4M45.4,424.3L44.5,422.4M58.3,423.6L60.3,423.1M20.2,435.3L19.3,432.7M18.5,434.4L21.1,433.6M18.9,431.4L18.2,429.3M32.3,430.6L34.4,430.1M-8.4,443.0L-8.9,440.3M-10.0,442.0L-7.3,441.3M-9.2,438.9L-9.7,436.7M4.7,438.1L6.9,437.5M503.4,308.1L501.2,307.7M501.2,308.2L503.4,307.6M499.1,307.2L497.3,306.8M497.1,309.9L494.8,309.4M494.8,310.0L497.0,309.4M492.7,309.0L490.9,308.6M498.2,309.0L500.0,308.5M490.5,311.8L488.2,311.2M488.2,311.8L490.5,311.2M486.2,310.8L484.3,310.4M491.8,310.8L493.6,310.3M483.8,313.7L481.4,313.1M481.4,313.7L483.8,313.1M479.4,312.7L477.5,312.2M485.1,312.7L487.0,312.2M476.9,315.6L474.4,315.0M474.4,315.7L476.9,315.0M472.5,314.6L470.5,314.1M478.2,314.6L480.1,314.1M469.7,317.6L467.2,317.0M467.2,317.7L469.7,317.0M465.3,316.6L463.3,316.1M471.1,316.6L473.1,316.0M462.3,319.7L459.7,319.1M459.7,319.8L462.3,319.0M457.9,318.6L455.8,318.1M463.7,318.7L465.8,318.1M454.7,321.9L452.0,321.2M452.0,321.9L454.7,321.2M450.2,320.7L448.1,320.2M456.1,320.8L458.3,320.2M446.8,324.1L444.0,323.4M444.0,324.1L446.8,323.4M442.3,322.9L440.1,322.3M448.3,322.9L450.5,322.3M438.7,326.4L435.8,325.6M435.8,326.4L438.7,325.6M434.2,325.2L431.9,324.6M440.2,325.2L442.5,324.6M430.2,328.8L427.3,328.0M427.3,328.8L430.2,328.0M425.7,327.5L423.4,326.9M431.8,327.5L434.2,326.9M421.4,331.3L418.5,330.4M418.5,331.2L421.4,330.4M416.9,330.0L414.6,329.3M423.2,329.9L425.6,329.3M412.3,333.8L409.4,332.9M409.4,333.8L412.3,333.0M407.9,332.5L405.5,331.7M414.3,332.4L416.6,331.8M402.9,336.5L400.0,335.5M400.0,336.4L402.9,335.6M398.5,335.0L396.1,334.3M405.0,335.0L407.4,334.3M393.1,339.2L390.2,338.2M390.2,339.1L393.1,338.3M388.7,337.7L386.4,337.0M395.4,337.7L397.8,337.0M383.0,342.0L380.1,341.0M380.1,342.0L383.0,341.1M378.6,340.5L376.3,339.7M385.5,340.4L387.8,339.8M372.4,345.0L369.6,344.0M369.5,344.9L372.5,344.1M368.1,343.4L365.8,342.6M375.1,343.3L377.5,342.7M361.5,348.1L358.6,347.0M358.6,347.9L361.5,347.1M357.1,346.4L354.8,345.6M364.4,346.3L366.8,345.7M350.1,351.3L347.3,350.1M347.2,351.1L350.2,350.3M345.8,349.5L343.5,348.7M353.3,349.4L355.6,348.8M338.3,354.6L335.4,353.4M335.4,354.4L338.3,353.6M334.0,352.8L331.7,351.9M341.7,352.7L344.0,352.0M325.9,358.0L323.1,356.8M323.0,357.8L326.0,357.0M321.7,356.2L319.4,355.2M329.6,356.0L331.9,355.4M313.0,361.7L310.3,360.4M310.2,361.4L313.1,360.6M308.8,359.7L306.6,358.7M317.0,359.5L319.3,358.9M299.6,365.4L296.9,364.1M296.8,365.2L299.7,364.4M295.5,363.4L293.3,362.3M303.8,363.2L306.2,362.5M285.5,369.4L282.9,368.0M282.8,369.1L285.7,368.3M281.5,367.2L279.4,366.1M290.1,367.0L292.5,366.4M270.9,373.5L268.3,372.0M268.1,373.2L271.0,372.3M266.9,371.3L264.8,370.1M275.8,371.0L278.1,370.4M255.5,377.8L252.9,376.3M252.8,377.4L255.6,376.6M251.6,375.5L249.6,374.3M260.8,375.2L263.1,374.5M239.4,382.3L236.9,380.7M236.7,381.9L239.6,381.1M235.6,379.9L233.7,378.6M245.1,379.6L247.4,378.9M222.5,387.0L220.1,385.4M219.9,386.6L222.7,385.8M218.9,384.5L217.0,383.1M228.7,384.1L231.0,383.5M204.8,392.0L202.5,390.2M202.2,391.5L205.0,390.7M201.3,389.3L199.4,387.9M211.5,388.9L213.7,388.3M186.1,397.2L183.9,395.4M183.6,396.7L186.4,395.9M182.8,394.4L181.0,392.9M193.3,394.0L195.5,393.4M166.5,402.7L164.4,400.8M164.1,402.1L166.8,401.4M163.3,399.8L161.7,398.2M174.3,399.3L176.4,398.7M145.8,408.5L143.8,406.5M143.4,407.9L146.2,407.1M142.8,405.4L141.3,403.8M154.2,404.9L156.3,404.3M123.9,414.7L122.1,412.5M121.7,414.0L124.4,413.2M121.2,411.4L119.8,409.6M133.0,410.8L135.1,410.2M100.8,421.2L99.2,418.8M98.6,420.4L101.3,419.6M98.4,417.7L97.1,415.8M110.6,417.0L112.7,416.4M76.3,428.0L74.9,425.6M74.2,427.2L77.0,426.4M74.2,424.3L73.1,422.4M86.9,423.7L89.1,423.0M50.3,435.3L49.2,432.7M48.4,434.4L51.1,433.6M48.6,431.4L47.6,429.3M61.8,430.6L64.0,430.0M22.7,443.0L21.8,440.3M20.9,442.0L23.7,441.3M21.4,438.9L20.6,436.7M35.1,438.1L37.3,437.5M-6.7,451.3L-7.3,448.3M-8.4,450.2L-5.5,449.4M-7.6,446.8L-8.1,444.5M6.7,446.0L9.0,445.3M511.8,309.9L509.6,309.4M509.6,310.0L511.8,309.4M507.3,309.0L505.6,308.6M505.5,311.7L503.2,311.3M503.2,311.8L505.5,311.2M501.0,310.8L499.2,310.4M506.7,310.8L508.4,310.3M499.0,313.6L496.7,313.1M496.7,313.7L499.0,313.1M494.5,312.6L492.6,312.2M500.2,312.7L502.0,312.2M492.3,315.6L489.9,315.1M489.9,315.7L492.3,315.0M487.8,314.6L485.9,314.1M493.5,314.6L495.4,314.1M485.4,317.6L482.9,317.0M482.9,317.7L485.4,317.0M480.8,316.6L478.9,316.1M486.7,316.6L488.6,316.0M478.2,319.7L475.7,319.1M475.7,319.8L478.2,319.0M473.7,318.6L471.6,318.1M479.6,318.7L481.6,318.1M470.9,321.9L468.2,321.2M468.2,321.9L470.9,321.2M466.3,320.7L464.2,320.2M472.2,320.8L474.3,320.2M463.2,324.1L460.5,323.4M460.5,324.1L463.2,323.4M458.7,322.9L456.5,322.4M464.7,322.9L466.8,322.3M455.4,326.4L452.6,325.7M452.6,326.4L455.4,325.6M450.8,325.2L448.5,324.6M456.9,325.2L459.1,324.6M447.2,328.8L444.3,328.0M444.3,328.8L447.2,328.0M442.6,327.5L440.3,326.9M448.8,327.5L451.1,326.9M438.8,331.3L435.8,330.4M435.8,331.3L438.8,330.4M434.2,329.9L431.8,329.3M440.4,330.0L442.8,329.3M430.0,333.8L427.0,332.9M427.0,333.8L430.0,332.9M425.4,332.5L423.0,331.7M431.7,332.4L434.2,331.7M420.9,336.5L417.9,335.5M417.9,336.4L420.9,335.6M416.3,335.0L413.9,334.3M422.8,335.0L425.2,334.3M411.5,339.2L408.5,338.2M408.5,339.2L411.5,338.3M406.9,337.7L404.5,337.0M413.5,337.7L416.0,337.0M401.7,342.0L398.7,341.0M398.7,342.0L401.7,341.1M397.1,340.5L394.7,339.7M403.9,340.5L406.4,339.8M391.5,345.0L388.5,344.0M388.5,344.9L391.6,344.0M386.9,343.4L384.5,342.6M393.9,343.4L396.4,342.6M381.0,348.1L378.0,347.0M377.9,348.0L381.0,347.1M376.4,346.4L374.0,345.6M383.6,346.3L386.0,345.6M370.0,351.3L367.0,350.1M366.9,351.1L370.0,350.3M365.4,349.5L363.0,348.7M372.8,349.5L375.2,348.7M358.5,354.6L355.6,353.4M355.5,354.4L358.6,353.6M354.0,352.8L351.6,351.9M361.6,352.7L364.0,352.0M346.6,358.0L343.6,356.8M343.6,357.9L346.6,357.0M342.1,356.2L339.8,355.2M349.9,356.1L352.4,355.3M334.1,361.7L331.2,360.4M331.2,361.5L334.2,360.6M329.7,359.7L327.4,358.7M337.8,359.6L340.2,358.9M321.2,365.4L318.3,364.1M318.2,365.2L321.2,364.3M316.8,363.4L314.5,362.3M325.1,363.2L327.5,362.5M307.6,369.4L304.8,368.0M304.7,369.1L307.7,368.2M303.3,367.2L301.0,366.1M311.8,367.0L314.2,366.3M293.4,373.5L290.6,372.0M290.5,373.2L293.5,372.3M289.2,371.3L287.0,370.1M298.0,371.0L300.4,370.3M278.6,377.8L275.9,376.3M275.7,377.5L278.7,376.6M274.4,375.5L272.3,374.3M283.5,375.2L285.9,374.5M263.0,382.3L260.4,380.7M260.2,381.9L263.2,381.1M259.0,379.9L256.9,378.6M268.4,379.6L270.7,378.9M246.7,387.0L244.1,385.4M243.9,386.6L246.9,385.8M242.8,384.5L240.7,383.1M252.5,384.2L254.9,383.5M229.6,392.0L227.1,390.2M226.9,391.6L229.8,390.7M225.8,389.3L223.8,387.9M235.8,389.0L238.2,388.3M211.6,397.2L209.2,395.4M208.9,396.7L211.8,395.9M207.9,394.4L206.0,392.9M218.3,394.0L220.6,393.3M192.6,402.7L190.3,400.8M190.0,402.2L192.9,401.3M189.1,399.8L187.3,398.2M199.9,399.3L202.2,398.7M172.6,408.5L170.4,406.5M170.1,407.9L173.0,407.1M169.3,405.4L167.6,403.8M180.5,404.9L182.8,404.3M151.5,414.7L149.5,412.5M149.0,414.0L151.9,413.2M148.4,411.4L146.8,409.6M160.0,410.8L162.3,410.2M129.2,421.2L127.3,418.8M126.8,420.4L129.7,419.6M126.3,417.7L124.8,415.8M138.4,417.1L140.7,416.4M105.5,428.0L103.8,425.6M103.3,427.2L106.1,426.4M103.0,424.3L101.6,422.4M115.5,423.7L117.8,423.0M80.5,435.3L79.0,432.7M78.3,434.4L81.2,433.6M78.2,431.4L77.0,429.3M91.2,430.7L93.5,430.0M53.8,443.0L52.6,440.3M51.7,442.1L54.6,441.2M51.9,438.9L50.9,436.7M65.5,438.1L67.8,437.4M25.4,451.3L24.4,448.3M23.4,450.2L26.4,449.4M24.0,446.8L23.2,444.5M38.1,446.0L40.5,445.3M-4.9,460.1L-5.5,456.9M-6.8,458.9L-3.7,458.1M-5.9,455.3L-6.4,452.8M8.9,454.4L11.3,453.7M520.4,311.7L518.2,311.3M518.3,311.8L520.4,311.2M515.9,310.8L514.1,310.4M514.2,313.6L511.9,313.1M511.9,313.7L514.1,313.1M509.6,312.6L507.8,312.2M515.3,312.7L517.1,312.2M507.7,315.6L505.4,315.1M505.4,315.7L507.7,315.0M503.1,314.6L501.2,314.1M508.9,314.6L510.7,314.1M501.0,317.6L498.6,317.1M498.7,317.7L501.0,317.0M496.4,316.5L494.5,316.1M502.3,316.6L504.2,316.0M494.1,319.7L491.7,319.1M491.7,319.8L494.1,319.0M489.5,318.6L487.5,318.1M495.4,318.7L497.4,318.1M487.0,321.9L484.5,321.2M484.5,321.9L487.0,321.2M482.3,320.7L480.3,320.2M488.4,320.8L490.4,320.2M479.7,324.1L477.1,323.4M477.1,324.1L479.7,323.4M475.0,322.9L472.9,322.4M481.1,322.9L483.1,322.3M472.1,326.4L469.4,325.7M469.4,326.4L472.1,325.6M467.4,325.2L465.2,324.6M473.5,325.2L475.7,324.6M464.2,328.8L461.4,328.0M461.4,328.8L464.2,328.0M459.5,327.5L457.2,326.9M465.7,327.5L467.9,326.9M456.1,331.2L453.2,330.4M453.2,331.3L456.1,330.4M451.3,329.9L449.0,329.3M457.6,330.0L459.9,329.3M447.7,333.8L444.7,332.9M444.7,333.8L447.7,332.9M442.9,332.4L440.5,331.8M449.3,332.5L451.7,331.7M439.0,336.5L435.9,335.5M435.9,336.5L439.0,335.5M434.2,335.0L431.7,334.3M440.6,335.0L443.1,334.3M429.9,339.2L426.7,338.2M426.7,339.2L429.9,338.3M425.1,337.7L422.6,337.0M431.6,337.7L434.2,337.0M420.4,342.0L417.3,341.0M417.3,342.0L420.4,341.1M415.6,340.5L413.1,339.7M422.4,340.5L424.9,339.7M410.6,345.0L407.5,344.0M407.5,345.0L410.6,344.0M405.8,343.4L403.3,342.6M412.7,343.4L415.3,342.6M400.4,348.1L397.3,347.0M397.3,348.0L400.4,347.1M395.6,346.4L393.1,345.6M402.7,346.4L405.3,345.6M389.8,351.3L386.7,350.1M386.7,351.2L389.8,350.2M385.1,349.5L382.6,348.7M392.3,349.5L394.9,348.7M378.8,354.6L375.7,353.4M375.6,354.5L378.8,353.5M374.0,352.8L371.6,351.9M381.5,352.7L384.1,352.0M367.3,358.0L364.2,356.8M364.1,357.9L367.3,357.0M362.6,356.2L360.1,355.2M370.3,356.1L372.8,355.3M355.3,361.7L352.2,360.4M352.1,361.5L355.3,360.5M350.6,359.7L348.2,358.7M358.5,359.6L361.1,358.8M342.7,365.4L339.7,364.1M339.6,365.2L342.8,364.3M338.1,363.4L335.7,362.3M346.3,363.3L348.8,362.5M329.7,369.4L326.7,368.0M326.6,369.1L329.7,368.2M325.1,367.2L322.7,366.1M333.5,367.1L336.0,366.3M316.0,373.5L313.0,372.0M312.9,373.2L316.1,372.3M311.5,371.3L309.1,370.1M320.2,371.1L322.7,370.3M301.7,377.8L298.8,376.3M298.6,377.5L301.8,376.6M297.2,375.5L294.9,374.3M306.2,375.2L308.7,374.5M286.7,382.3L283.8,380.7M283.7,382.0L286.8,381.0M282.3,379.9L280.0,378.6M291.6,379.6L294.1,378.9M270.9,387.0L268.1,385.4M268.0,386.7L271.1,385.7M266.7,384.5L264.5,383.1M276.2,384.2L278.7,383.4M254.4,392.0L251.7,390.2M251.5,391.6L254.6,390.7M250.3,389.3L248.1,387.9M260.2,389.0L262.7,388.3M237.1,397.2L234.4,395.4M234.2,396.8L237.3,395.8M233.0,394.4L230.9,392.9M243.3,394.1L245.7,393.3M218.8,402.7L216.2,400.8M215.9,402.2L219.0,401.3M214.9,399.8L212.9,398.2M225.5,399.4L228.0,398.6M199.5,408.5L197.0,406.5M196.7,408.0L199.8,407.1M195.8,405.4L193.8,403.8M206.8,405.0L209.2,404.2M179.1,414.7L176.8,412.5M176.4,414.0L179.5,413.1M175.6,411.4L173.8,409.6M187.0,410.9L189.5,410.1M157.6,421.2L155.4,418.8M155.0,420.5L158.0,419.5M154.3,417.7L152.6,415.8M166.2,417.1L168.6,416.4M134.8,428.0L132.8,425.6M132.3,427.2L135.3,426.3M131.8,424.3L130.2,422.4M144.1,423.7L146.5,423.0M110.6,435.3L108.8,432.7M108.2,434.5L111.2,433.5M107.9,431.4L106.4,429.3M120.7,430.7L123.1,430.0M84.9,443.0L83.3,440.3M82.6,442.1L85.6,441.2M82.5,438.9L81.2,436.7M95.9,438.1L98.3,437.4M57.5,451.3L56.2,448.3M55.3,450.3L58.4,449.3M55.5,446.8L54.4,444.5M69.4,446.0L71.9,445.3M28.3,460.1L27.2,456.9M26.2,459.0L29.3,458.0M26.7,455.3L25.9,452.8M41.3,454.5L43.8,453.7M-3.0,469.5L-3.7,466.1M-5.0,468.3L-1.7,467.3M-4.0,464.4L-4.6,461.7M11.2,463.5L13.8,462.7M529.3,313.6L527.2,313.2M527.2,313.7L529.3,313.1M524.6,312.6L522.9,312.3M523.1,315.6L520.9,315.1M520.9,315.7L523.1,315.0M518.4,314.5L516.6,314.2M524.3,314.6L526.0,314.1M516.7,317.6L514.4,317.1M514.4,317.7L516.7,317.0M511.9,316.5L510.1,316.1M517.9,316.6L519.7,316.0M510.1,319.7L507.7,319.1M507.7,319.8L510.0,319.0M505.3,318.6L503.4,318.1M511.3,318.7L513.2,318.1M503.2,321.8L500.7,321.3M500.8,321.9L503.2,321.2M498.4,320.7L496.4,320.2M504.5,320.8L506.4,320.2M496.1,324.1L493.6,323.4M493.6,324.1L496.1,323.4M491.3,322.9L489.3,322.4M497.4,322.9L499.4,322.3M488.8,326.4L486.2,325.7M486.2,326.4L488.8,325.6M484.0,325.1L481.8,324.6M490.2,325.2L492.2,324.6M481.2,328.7L478.5,328.0M478.5,328.8L481.2,328.0M476.4,327.5L474.2,326.9M482.7,327.5L484.8,326.9M473.4,331.2L470.6,330.5M470.6,331.3L473.4,330.4M468.5,329.9L466.3,329.3M474.9,330.0L477.1,329.3M465.3,333.8L462.4,333.0M462.4,333.8L465.3,332.9M460.4,332.4L458.1,331.8M466.8,332.5L469.1,331.7M456.9,336.4L453.9,335.6M453.9,336.5L456.9,335.5M451.9,335.0L449.5,334.3M458.5,335.0L460.9,334.3M448.2,339.2L445.1,338.3M445.1,339.2L448.2,338.2M443.2,337.7L440.7,337.0M449.8,337.7L452.3,337.0M439.1,342.0L435.9,341.1M435.9,342.0L439.1,341.0M434.2,340.5L431.6,339.7M440.8,340.5L443.4,339.7M429.7,345.0L426.4,344.0M426.4,345.0L429.7,344.0M424.7,343.4L422.1,342.6M431.5,343.4L434.1,342.6M419.9,348.1L416.6,347.0M416.6,348.0L419.9,347.0M414.9,346.4L412.3,345.6M421.9,346.4L424.5,345.6M409.7,351.3L406.4,350.1M406.4,351.2L409.7,350.2M404.7,349.5L402.1,348.7M411.9,349.5L414.5,348.7M399.0,354.6L395.8,353.4M395.8,354.5L399.0,353.5M394.1,352.8L391.5,351.9M401.5,352.7L404.1,351.9M387.9,358.0L384.7,356.8M384.7,357.9L388.0,356.9M383.0,356.2L380.4,355.2M390.6,356.1L393.2,355.3M376.4,361.7L373.2,360.4M373.1,361.5L376.4,360.5M371.5,359.7L368.9,358.7M379.3,359.6L381.9,358.8M364.3,365.4L361.1,364.1M361.1,365.3L364.4,364.2M359.5,363.4L356.9,362.3M367.5,363.3L370.1,362.5M351.7,369.4L348.6,368.0M348.5,369.2L351.8,368.2M346.9,367.2L344.4,366.1M355.2,367.1L357.8,366.3M338.6,373.5L335.4,372.0M335.3,373.3L338.6,372.2M333.8,371.3L331.3,370.1M342.3,371.1L345.0,370.3M324.8,377.8L321.7,376.3M321.6,377.5L324.9,376.5M320.1,375.5L317.6,374.3M328.9,375.3L331.5,374.5M310.3,382.3L307.3,380.7M307.2,382.0L310.4,381.0M305.7,379.9L303.2,378.6M314.8,379.6L317.4,378.8M295.2,387.0L292.2,385.4M292.0,386.7L295.3,385.7M290.6,384.5L288.2,383.1M300.0,384.2L302.6,383.4M279.3,392.0L276.3,390.2M276.1,391.6L279.4,390.6M274.8,389.3L272.4,387.9M284.5,389.0L287.1,388.2M262.5,397.2L259.7,395.4M259.5,396.8L262.7,395.8M258.2,394.4L255.9,392.9M268.2,394.1L270.9,393.3M244.9,402.7L242.1,400.8M241.9,402.3L245.1,401.3M240.7,399.8L238.5,398.2M251.1,399.4L253.7,398.6M226.3,408.5L223.6,406.5M223.4,408.0L226.6,407.0M222.3,405.4L220.1,403.8M233.1,405.0L235.7,404.2M206.7,414.7L204.1,412.5M203.8,414.1L207.0,413.1M202.8,411.4L200.8,409.6M214.1,410.9L216.6,410.1M186.0,421.2L183.5,418.8M183.2,420.5L186.4,419.5M182.3,417.7L180.3,415.8M194.0,417.1L196.5,416.3M164.0,428.0L161.7,425.6M161.3,427.3L164.5,426.3M160.6,424.3L158.7,422.4M172.7,423.7L175.3,422.9M140.7,435.3L138.6,432.7M138.0,434.5L141.3,433.5M137.5,431.4L135.8,429.3M150.2,430.7L152.7,429.9M115.9,443.0L114.0,440.3M113.4,442.2L116.6,441.2M113.1,438.9L111.5,436.7M126.2,438.2L128.8,437.4M89.6,451.3L87.9,448.3M87.1,450.3L90.4,449.3M87.0,446.8L85.7,444.5M100.8,446.1L103.4,445.3M61.4,460.1L60.0,456.9M59.1,459.0L62.4,458.0M59.3,455.3L58.2,452.8M73.6,454.5L76.3,453.7M31.3,469.5L30.2,466.1M29.1,468.3L32.5,467.3M29.7,464.4L28.8,461.7M44.6,463.5L47.4,462.6M-0.9,479.6L-1.7,475.9M-3.1,478.3L0.5,477.2M-2.0,474.1L-2.6,471.2M13.6,473.1L16.4,472.2M538.5,315.6L536.4,315.1M536.4,315.7L538.5,315.0M533.7,314.5L531.9,314.2M532.4,317.6L530.1,317.1M530.1,317.7L532.3,317.0M527.5,316.5L525.7,316.1M533.5,316.6L535.2,316.0M526.0,319.7L523.7,319.1M523.7,319.8L525.9,319.0M521.1,318.6L519.2,318.2M527.1,318.7L528.9,318.1M519.4,321.8L517.0,321.3M517.0,321.9L519.4,321.2M514.4,320.7L512.5,320.2M520.6,320.8L522.5,320.2M512.6,324.0L510.1,323.5M510.1,324.1L512.5,323.4M507.6,322.9L505.6,322.4M513.8,322.9L515.8,322.3M505.5,326.3L503.0,325.7M503.0,326.4L505.5,325.6M500.5,325.1L498.5,324.6M506.8,325.2L508.8,324.6M498.3,328.7L495.6,328.1M495.7,328.8L498.2,328.0M493.2,327.5L491.1,326.9M499.6,327.5L501.7,326.9M490.7,331.2L488.0,330.5M488.0,331.3L490.7,330.4M485.7,329.9L483.5,329.3M492.1,330.0L494.3,329.3M482.9,333.7L480.1,333.0M480.1,333.8L482.9,332.9M477.8,332.4L475.6,331.8M484.4,332.5L486.6,331.7M474.8,336.4L471.9,335.6M471.9,336.5L474.8,335.5M469.7,335.0L467.4,334.4M476.3,335.0L478.6,334.3M466.4,339.2L463.4,338.3M463.4,339.2L466.4,338.2M461.3,337.7L458.9,337.0M468.0,337.7L470.4,337.0M457.7,342.0L454.6,341.1M454.6,342.0L457.7,341.0M452.6,340.5L450.1,339.8M459.4,340.5L461.8,339.7M448.7,345.0L445.5,344.0M445.5,345.0L448.7,344.0M443.5,343.4L441.0,342.6M450.4,343.4L453.0,342.6M439.3,348.1L436.0,347.0M436.0,348.1L439.3,347.0M434.1,346.4L431.5,345.6M441.1,346.4L443.7,345.6M429.5,351.3L426.1,350.1M426.1,351.2L429.5,350.2M424.3,349.5L421.6,348.7M431.4,349.5L434.1,348.7M419.3,354.6L415.9,353.4M415.9,354.5L419.3,353.5M414.1,352.8L411.4,351.9M421.4,352.8L424.1,351.9M408.6,358.0L405.2,356.8M405.2,358.0L408.6,356.9M403.5,356.2L400.8,355.2M410.9,356.1L413.7,355.3M397.5,361.7L394.1,360.4M394.1,361.6L397.5,360.5M392.4,359.7L389.7,358.7M400.1,359.7L402.8,358.8M385.9,365.4L382.6,364.1M382.5,365.3L385.9,364.2M380.8,363.4L378.1,362.3M388.7,363.3L391.5,362.4M373.8,369.4L370.5,368.0M370.4,369.2L373.8,368.1M368.7,367.2L366.0,366.1M376.9,367.1L379.6,366.2M361.1,373.5L357.8,372.0M357.7,373.3L361.2,372.2M356.1,371.3L353.4,370.1M364.5,371.1L367.2,370.2M347.9,377.8L344.6,376.3M344.5,377.6L347.9,376.5M342.9,375.5L340.2,374.3M351.5,375.3L354.3,374.4M334.0,382.3L330.7,380.7M330.6,382.1L334.1,380.9M329.0,379.9L326.4,378.6M338.0,379.7L340.7,378.8M319.4,387.0L316.2,385.4M316.1,386.8L319.5,385.6M314.5,384.5L312.0,383.1M323.8,384.3L326.5,383.4M304.1,392.0L300.9,390.2M300.8,391.7L304.2,390.6M299.3,389.3L296.8,387.9M308.9,389.1L311.6,388.2M288.0,397.2L284.9,395.4M284.7,396.9L288.2,395.8M283.3,394.4L280.8,392.9M293.2,394.1L296.0,393.2M271.1,402.7L268.0,400.8M267.8,402.3L271.3,401.2M266.5,399.8L264.0,398.2M276.7,399.4L279.5,398.6M253.2,408.5L250.2,406.5M250.0,408.1L253.4,407.0M248.7,405.4L246.4,403.8M259.4,405.0L262.1,404.2M234.3,414.7L231.5,412.5M231.2,414.1L234.6,413.0M230.0,411.4L227.8,409.6M241.1,410.9L243.8,410.1M214.4,421.2L211.6,418.8M211.3,420.5L214.7,419.5M210.3,417.7L208.1,415.8M221.7,417.2L224.5,416.3M193.3,428.0L190.7,425.6M190.3,427.3L193.7,426.2M189.3,424.3L187.3,422.4M201.3,423.8L204.0,422.9M170.8,435.3L168.4,432.7M167.9,434.5L171.3,433.5M167.2,431.4L165.2,429.3M179.6,430.8L182.3,429.9M147.0,443.0L144.8,440.3M144.2,442.2L147.6,441.1M143.6,438.9L141.8,436.7M156.6,438.2L159.3,437.3M121.7,451.3L119.6,448.3M118.9,450.4L122.3,449.3M118.6,446.8L116.9,444.5M132.1,446.1L134.8,445.2M94.6,460.1L92.8,456.9M92.0,459.1L95.4,457.9M91.9,455.3L90.4,452.8M106.0,454.5L108.8,453.6M65.6,469.5L64.1,466.1M63.1,468.4L66.6,467.2M63.4,464.4L62.2,461.7M78.1,463.5L80.9,462.6M34.6,479.6L33.4,475.9M32.2,478.3L35.8,477.2M32.8,474.1L31.9,471.2M48.3,473.2L51.2,472.2M1.3,490.4L0.5,486.5M-1.0,489.1L2.8,487.8M0.1,484.6L-0.6,481.4M16.2,483.5L19.3,482.5M548.0,317.6L545.8,317.1M545.9,317.7L548.0,317.0M543.0,316.5L541.3,316.1M541.9,319.6L539.7,319.2M539.7,319.8L541.8,319.0M536.9,318.6L535.1,318.2M543.0,318.7L544.7,318.1M535.6,321.8L533.3,321.3M533.3,321.9L535.5,321.2M530.5,320.7L528.6,320.3M536.7,320.8L538.5,320.2M529.0,324.0L526.6,323.5M526.7,324.1L529.0,323.4M523.9,322.9L522.0,322.4M530.2,322.9L532.1,322.3M522.3,326.3L519.8,325.7M519.8,326.4L522.2,325.6M517.1,325.1L515.2,324.7M523.5,325.2L525.4,324.6M515.3,328.7L512.7,328.1M512.8,328.8L515.2,328.0M510.1,327.5L508.1,327.0M516.5,327.5L518.5,326.9M508.0,331.2L505.4,330.5M505.4,331.3L508.0,330.4M502.8,329.9L500.7,329.3M509.4,330.0L511.4,329.3M500.5,333.7L497.8,333.0M497.8,333.8L500.5,332.9M495.3,332.4L493.1,331.8M501.9,332.5L504.0,331.7M492.8,336.4L490.0,335.6M490.0,336.5L492.7,335.5M487.5,335.0L485.3,334.4M494.2,335.0L496.4,334.3M484.7,339.1L481.8,338.3M481.8,339.2L484.7,338.2M479.4,337.7L477.1,337.0M486.2,337.7L488.5,337.0M476.3,342.0L473.3,341.1M473.4,342.0L476.3,341.0M471.0,340.5L468.6,339.8M477.9,340.5L480.3,339.7M467.7,344.9L464.5,344.0M464.6,345.0L467.6,344.0M462.3,343.4L459.8,342.6M469.3,343.4L471.7,342.6M458.6,348.0L455.4,347.0M455.4,348.1L458.6,347.0M453.3,346.4L450.7,345.6M460.3,346.4L462.9,345.6M449.3,351.2L445.9,350.2M445.9,351.3L449.3,350.1M443.9,349.5L441.2,348.7M451.0,349.5L453.7,348.7M439.5,354.6L436.0,353.4M436.0,354.6L439.5,353.4M434.1,352.8L431.3,351.9M441.3,352.8L444.1,351.9M429.3,358.0L425.8,356.8M425.8,358.0L429.3,356.8M423.9,356.2L421.1,355.2M431.3,356.2L434.1,355.2M418.6,361.7L415.1,360.4M415.1,361.6L418.6,360.4M413.3,359.7L410.4,358.7M420.8,359.7L423.7,358.7M407.5,365.4L404.0,364.1M403.9,365.4L407.5,364.2M402.1,363.4L399.3,362.3M409.9,363.3L412.8,362.4M395.9,369.4L392.3,368.0M392.3,369.3L395.9,368.1M390.5,367.2L387.7,366.1M398.5,367.2L401.4,366.2M383.7,373.5L380.2,372.0M380.1,373.4L383.7,372.1M378.4,371.3L375.6,370.1M386.7,371.2L389.5,370.2M371.0,377.8L367.5,376.3M367.4,377.6L371.0,376.4M365.7,375.5L362.9,374.3M374.2,375.3L377.1,374.4M357.6,382.3L354.2,380.7M354.1,382.1L357.7,380.9M352.4,379.9L349.6,378.6M361.2,379.7L364.1,378.8M343.6,387.0L340.2,385.4M340.1,386.8L343.7,385.6M338.4,384.5L335.7,383.1M347.5,384.3L350.4,383.3M328.9,392.0L325.5,390.2M325.4,391.7L329.0,390.5M323.8,389.3L321.1,387.9M333.2,389.1L336.1,388.1M313.5,397.2L310.1,395.4M310.0,396.9L313.6,395.7M308.4,394.4L305.8,392.9M318.2,394.2L321.1,393.2M297.2,402.7L293.9,400.8M293.8,402.4L297.4,401.2M292.3,399.8L289.6,398.2M302.3,399.5L305.2,398.5M280.0,408.5L276.8,406.5M276.6,408.1L280.2,406.9M275.2,405.4L272.7,403.8M285.7,405.1L288.6,404.1M261.9,414.7L258.8,412.5M258.6,414.2L262.2,413.0M257.2,411.4L254.7,409.6M268.1,411.0L271.0,410.0M242.8,421.2L239.8,418.8M239.5,420.6L243.1,419.4M238.2,417.7L235.8,415.8M249.5,417.2L252.4,416.3M222.5,428.0L219.6,425.6M219.2,427.4L222.8,426.2M218.1,424.3L215.8,422.4M229.9,423.8L232.7,422.9M201.0,435.3L198.2,432.7M197.8,434.6L201.4,433.4M196.8,431.4L194.6,429.3M209.0,430.8L211.9,429.9M178.1,443.0L175.5,440.3M175.0,442.3L178.6,441.1M174.2,438.9L172.1,436.7M186.9,438.3L189.8,437.3M153.7,451.3L151.3,448.3M150.7,450.4L154.3,449.2M150.1,446.8L148.2,444.5M163.4,446.2L166.3,445.2M127.7,460.1L125.6,456.9M124.8,459.1L128.5,457.9M124.5,455.3L122.7,452.8M138.3,454.6L141.3,453.6M99.9,469.5L98.0,466.1M97.1,468.4L100.8,467.2M97.1,464.4L95.5,461.7M111.6,463.6L114.5,462.6M70.2,479.6L68.5,475.9M67.5,478.4L71.2,477.1M67.7,474.1L66.4,471.2M82.9,473.2L85.9,472.2M38.1,490.4L36.9,486.5M35.5,489.1L39.5,487.8M36.2,484.6L35.2,481.4M52.1,483.5L55.3,482.5M3.6,502.1L2.8,497.8M1.2,500.6L5.3,499.3M2.4,495.8L1.7,492.4M19.0,494.6L22.3,493.5M557.8,319.6L555.6,319.2M555.7,319.8L557.8,319.0M552.6,318.5L550.9,318.2M551.7,321.8L549.5,321.3M549.5,321.9L551.7,321.2M546.5,320.7L544.8,320.3M552.8,320.8L554.5,320.2M545.5,324.0L543.2,323.5M543.2,324.1L545.4,323.4M540.2,322.8L538.4,322.4M546.6,322.9L548.4,322.3M539.0,326.3L536.6,325.8M536.6,326.4L538.9,325.6M533.7,325.1L531.8,324.7M540.2,325.2L542.0,324.6M532.3,328.7L529.8,328.1M529.9,328.8L532.2,328.0M527.0,327.4L525.0,327.0M533.5,327.5L535.4,326.9M525.3,331.1L522.8,330.5M522.8,331.3L525.3,330.4M520.0,329.9L518.0,329.4M526.6,330.0L528.6,329.3M518.1,333.7L515.5,333.0M515.6,333.8L518.1,332.9M512.8,332.4L510.7,331.8M519.5,332.5L521.5,331.7M510.7,336.3L508.0,335.7M508.0,336.5L510.7,335.5M505.3,335.0L503.1,334.4M512.1,335.0L514.2,334.3M503.0,339.1L500.2,338.3M500.2,339.2L502.9,338.2M497.5,337.6L495.3,337.0M504.4,337.7L506.6,337.0M495.0,341.9L492.0,341.1M492.1,342.0L494.9,341.0M489.5,340.4L487.2,339.8M496.4,340.5L498.7,339.7M486.6,344.9L483.6,344.1M483.6,345.0L486.6,344.0M481.1,343.3L478.7,342.7M488.2,343.4L490.5,342.6M478.0,348.0L474.9,347.1M474.9,348.1L478.0,347.0M472.5,346.4L470.0,345.6M479.6,346.4L482.0,345.6M469.0,351.2L465.7,350.2M465.8,351.3L469.0,350.1M463.4,349.5L460.9,348.7M470.7,349.5L473.2,348.7M459.6,354.5L456.3,353.5M456.3,354.6L459.6,353.4M454.1,352.8L451.4,351.9M461.4,352.8L464.0,351.9M449.9,358.0L446.4,356.9M446.4,358.0L449.9,356.8M444.3,356.2L441.5,355.2M451.7,356.2L454.5,355.2M439.7,361.6L436.1,360.4M436.1,361.7L439.7,360.4M434.1,359.7L431.2,358.7M441.6,359.7L444.5,358.7M429.1,365.4L425.4,364.1M425.4,365.4L429.1,364.1M423.5,363.4L420.5,362.3M431.1,363.4L434.1,362.4M417.9,369.4L414.2,368.0M414.2,369.3L417.9,368.0M412.3,367.2L409.4,366.1M420.2,367.2L423.2,366.2M406.3,373.5L402.6,372.0M402.6,373.4L406.3,372.1M400.7,371.3L397.7,370.1M408.8,371.2L411.8,370.2M394.1,377.8L390.4,376.3M390.4,377.7L394.1,376.4M388.5,375.5L385.6,374.3M396.9,375.4L399.9,374.3M381.3,382.3L377.6,380.7M377.6,382.2L381.3,380.8M375.7,379.9L372.8,378.6M384.4,379.8L387.4,378.7M367.8,387.0L364.2,385.4M364.2,386.9L367.9,385.5M362.4,384.5L359.5,383.1M371.3,384.3L374.3,383.3M353.8,392.0L350.2,390.2M350.1,391.8L353.9,390.5M348.3,389.3L345.4,387.9M357.6,389.2L360.6,388.1M338.9,397.2L335.4,395.4M335.3,397.0L339.1,395.6M333.6,394.4L330.7,392.9M343.1,394.2L346.2,393.2M323.3,402.7L319.8,400.8M319.7,402.4L323.5,401.1M318.0,399.8L315.2,398.2M328.0,399.5L331.0,398.5M306.9,408.5L303.5,406.5M303.3,408.2L307.1,406.8M301.7,405.4L298.9,403.8M312.0,405.1L315.0,404.1M289.5,414.7L286.2,412.5M285.9,414.2L289.7,412.9M284.4,411.4L281.7,409.6M295.1,411.0L298.1,410.0M271.2,421.2L267.9,418.8M267.6,420.7L271.4,419.3M266.2,417.7L263.6,415.8M277.3,417.3L280.3,416.2M251.7,428.0L248.5,425.6M248.2,427.5L252.0,426.1M246.9,424.3L244.4,422.4M258.5,423.9L261.5,422.8M231.1,435.3L228.0,432.7M227.7,434.7L231.5,433.3M226.5,431.4L224.0,429.3M238.5,430.9L241.5,429.8M209.2,443.0L206.2,440.3M205.8,442.3L209.6,441.0M204.8,438.9L202.4,436.7M217.3,438.3L220.3,437.2M185.8,451.3L183.1,448.3M182.5,450.5L186.3,449.1M181.7,446.8L179.4,444.5M194.7,446.2L197.8,445.1M160.9,460.1L158.3,456.9M157.7,459.2L161.5,457.8M157.0,455.3L155.0,452.8M170.7,454.6L173.8,453.5M134.3,469.5L131.9,466.1M131.1,468.5L135.0,467.1M130.8,464.4L128.9,461.7M145.0,463.6L148.1,462.5M105.7,479.6L103.6,475.9M102.7,478.4L106.6,477.1M102.6,474.1L100.9,471.2M117.5,473.2L120.7,472.1M75.0,490.4L73.3,486.5M72.1,489.2L76.2,487.7M72.4,484.6L71.0,481.4M88.1,483.6L91.3,482.4M41.9,502.1L40.6,497.8M39.2,500.7L43.3,499.2M39.9,495.8L38.8,492.4M56.3,494.7L59.7,493.5M6.2,514.7L5.3,510.1M3.5,513.2L7.9,511.6M4.8,507.9L4.1,504.2M22.1,506.7L25.6,505.4M567.9,321.8L565.8,321.3M565.8,321.9L567.9,321.2M562.6,320.6L560.9,320.3M561.9,324.0L559.7,323.5M559.7,324.1L561.9,323.4M556.5,322.8L554.8,322.4M563.0,322.9L564.7,322.3M555.7,326.3L553.4,325.8M553.5,326.4L555.6,325.6M550.3,325.1L548.5,324.7M556.8,325.2L558.6,324.6M549.3,328.7L546.9,328.1M547.0,328.8L549.2,328.0M543.8,327.4L542.0,327.0M550.4,327.5L552.3,326.9M542.6,331.1L540.2,330.6M540.2,331.3L542.6,330.4M537.2,329.8L535.2,329.4M543.8,330.0L545.7,329.3M535.8,333.7L533.2,333.1M533.3,333.8L535.7,332.9M530.2,332.3L528.2,331.9M537.0,332.5L539.0,331.7M528.6,336.3L526.0,335.7M526.1,336.5L528.6,335.5M523.1,334.9L521.0,334.4M529.9,335.0L531.9,334.3M521.2,339.1L518.5,338.4M518.6,339.2L521.2,338.2M515.6,337.6L513.5,337.1M522.6,337.7L524.7,337.0M513.6,341.9L510.8,341.2M510.8,342.0L513.5,341.0M507.9,340.4L505.7,339.8M515.0,340.5L517.1,339.7M505.6,344.9L502.7,344.1M502.7,345.0L505.6,344.0M499.9,343.3L497.6,342.7M507.1,343.4L509.3,342.6M497.3,348.0L494.3,347.1M494.3,348.1L497.3,347.0M491.6,346.3L489.2,345.6M498.8,346.4L501.2,345.6M488.7,351.2L485.6,350.2M485.6,351.3L488.7,350.1M483.0,349.5L480.5,348.7M490.3,349.5L492.8,348.7M479.8,354.5L476.5,353.5M476.5,354.6L479.7,353.4M474.0,352.7L471.4,351.9M481.4,352.8L484.0,351.9M470.4,358.0L467.1,356.9M467.1,358.0L470.4,356.8M464.6,356.1L461.9,355.3M472.2,356.2L474.8,355.2M460.7,361.6L457.2,360.4M457.2,361.7L460.7,360.4M454.9,359.7L452.1,358.7M462.5,359.7L465.3,358.7M450.6,365.4L446.9,364.1M446.9,365.4L450.5,364.1M444.7,363.4L441.8,362.4M452.4,363.4L455.3,362.3M440.0,369.4L436.2,368.0M436.2,369.4L440.0,368.0M434.1,367.2L431.1,366.1M441.9,367.2L445.0,366.1M428.8,373.5L425.0,372.0M425.0,373.5L428.8,372.0M423.0,371.3L419.9,370.1M431.0,371.3L434.1,370.1M417.1,377.8L413.3,376.3M413.3,377.7L417.2,376.3M411.3,375.5L408.2,374.3M419.6,375.4L422.7,374.3M404.9,382.3L401.1,380.7M401.0,382.2L404.9,380.8M399.1,379.9L396.0,378.6M407.6,379.8L410.7,378.7M392.1,387.0L388.2,385.4M388.2,386.9L392.1,385.5M386.3,384.5L383.2,383.1M395.1,384.4L398.2,383.2M378.6,392.0L374.8,390.2M374.7,391.8L378.7,390.4M372.8,389.3L369.8,387.9M381.9,389.2L385.1,388.1M364.4,397.2L360.6,395.4M360.5,397.0L364.5,395.6M358.7,394.4L355.7,392.9M368.1,394.3L371.3,393.1M349.5,402.7L345.7,400.8M345.6,402.5L349.6,401.0M343.8,399.8L340.8,398.2M353.6,399.6L356.8,398.4M333.8,408.5L330.1,406.5M329.9,408.2L333.9,406.8M328.2,405.4L325.2,403.8M338.3,405.2L341.5,404.0M317.1,414.7L313.5,412.5M313.3,414.3L317.3,412.9M311.6,411.4L308.7,409.6M322.1,411.1L325.3,409.9M299.6,421.2L296.0,418.8M295.8,420.7L299.8,419.3M294.2,417.7L291.3,415.8M305.1,417.3L308.3,416.2M281.0,428.0L277.5,425.6M277.2,427.5L281.2,426.1M275.7,424.3L272.9,422.4M287.0,423.9L290.2,422.8M261.2,435.3L257.8,432.7M257.5,434.7L261.5,433.3M256.1,431.4L253.4,429.3M267.9,430.9L271.1,429.8M240.2,443.0L237.0,440.3M236.6,442.4L240.6,440.9M235.3,438.9L232.7,436.7M247.6,438.4L250.8,437.2M217.9,451.3L214.8,448.3M214.3,450.5L218.4,449.1M213.2,446.8L210.7,444.5M226.0,446.3L229.3,445.1M194.1,460.1L191.1,456.9M190.5,459.2L194.6,457.8M189.6,455.3L187.3,452.8M203.0,454.7L206.3,453.5M168.6,469.5L165.8,466.1M165.1,468.5L169.2,467.0M164.4,464.4L162.2,461.7M178.5,463.7L181.7,462.5M141.2,479.6L138.7,475.9M137.9,478.5L142.1,477.0M137.5,474.1L135.5,471.2M152.2,473.3L155.5,472.1M111.9,490.4L109.6,486.5M108.6,489.2L112.9,487.7M108.5,484.6L106.8,481.4M123.9,483.6L127.3,482.4M80.2,502.1L78.3,497.8M77.1,500.8L81.5,499.2M77.4,495.8L75.9,492.4M93.6,494.7L97.1,493.5M46.0,514.7L44.6,510.1M43.0,513.2L47.6,511.6M43.8,507.9L42.6,504.2M60.8,506.7L64.4,505.4M9.0,528.4L8.0,523.4M6.1,526.7L10.9,525.0M7.5,521.0L6.7,517.0M25.4,519.7L29.2,518.3M578.3,324.0L576.2,323.5M576.3,324.1L578.3,323.4M572.9,322.8L571.2,322.5M572.4,326.3L570.2,325.8M570.3,326.4L572.4,325.6M566.9,325.1L565.1,324.7M573.5,325.2L575.2,324.6M566.3,328.6L564.0,328.1M564.1,328.8L566.2,328.0M560.7,327.4L558.9,327.0M567.4,327.5L569.1,326.9M559.9,331.1L557.6,330.6M557.6,331.3L559.9,330.4M554.3,329.8L552.4,329.4M561.1,330.0L562.9,329.3M553.4,333.7L550.9,333.1M551.0,333.8L553.3,332.9M547.7,332.3L545.8,331.9M554.6,332.5L556.4,331.7M546.6,336.3L544.0,335.7M544.1,336.5L546.5,335.5M540.9,334.9L538.8,334.4M547.8,335.0L549.7,334.3M539.5,339.0L536.9,338.4M536.9,339.2L539.4,338.2M533.7,337.6L531.7,337.1M540.8,337.7L542.8,337.0M532.2,341.9L529.5,341.2M529.5,342.0L532.1,341.0M526.4,340.4L524.2,339.8M533.5,340.5L535.6,339.7M524.6,344.9L521.8,344.1M521.8,345.0L524.5,344.0M518.7,343.3L516.5,342.7M525.9,343.4L528.1,342.6M516.7,347.9L513.8,347.1M513.8,348.1L516.6,347.0M510.8,346.3L508.5,345.7M518.1,346.4L520.3,345.6M508.4,351.1L505.4,350.3M505.5,351.3L508.4,350.1M502.5,349.4L500.1,348.8M509.9,349.5L512.3,348.7M499.9,354.5L496.7,353.5M496.8,354.6L499.8,353.4M493.9,352.7L491.4,352.0M501.4,352.8L503.9,351.9M491.0,357.9L487.7,356.9M487.8,358.0L490.9,356.8M485.0,356.1L482.4,355.3M492.6,356.2L495.1,355.2M481.7,361.6L478.3,360.5M478.3,361.7L481.6,360.4M475.7,359.6L473.0,358.8M483.4,359.7L486.0,358.7M472.0,365.3L468.5,364.2M468.5,365.4L472.0,364.1M465.9,363.3L463.1,362.4M473.8,363.4L476.5,362.3M461.9,369.3L458.2,368.0M458.2,369.4L461.8,368.0M455.8,367.2L452.9,366.2M463.7,367.2L466.6,366.1M451.3,373.4L447.5,372.1M447.5,373.5L451.3,372.0M445.2,371.2L442.1,370.1M453.2,371.3L456.3,370.1M440.2,377.8L436.2,376.3M436.2,377.8L440.2,376.3M434.1,375.5L430.9,374.3M442.3,375.5L445.5,374.3M428.6,382.3L424.5,380.7M424.5,382.3L428.6,380.7M422.4,379.9L419.2,378.6M430.8,379.9L434.1,378.6M416.3,387.0L412.3,385.4M412.2,387.0L416.3,385.4M410.2,384.5L407.0,383.1M418.9,384.4L422.1,383.2M403.4,392.0L399.4,390.2M399.4,391.9L403.5,390.3M397.3,389.3L394.1,387.9M406.3,389.3L409.6,388.0M389.9,397.2L385.9,395.4M385.8,397.1L389.9,395.5M383.8,394.4L380.6,392.9M393.1,394.3L396.4,393.1M375.6,402.7L371.7,400.8M371.6,402.6L375.7,401.0M369.6,399.8L366.4,398.2M379.2,399.6L382.5,398.4M360.6,408.5L356.7,406.5M356.6,408.3L360.7,406.7M354.6,405.4L351.5,403.8M364.6,405.2L367.9,404.0M344.7,414.7L340.8,412.5M340.7,414.4L344.9,412.8M338.8,411.4L335.7,409.6M349.1,411.1L352.5,409.9M328.0,421.2L324.1,418.8M323.9,420.8L328.1,419.2M322.1,417.7L319.1,415.8M332.9,417.4L336.2,416.1M310.2,428.0L306.4,425.6M306.2,427.6L310.4,426.0M304.5,424.3L301.5,422.4M315.6,424.0L319.0,422.7M291.4,435.3L287.6,432.7M287.4,434.8L291.6,433.2M285.8,431.4L282.8,429.3M297.4,431.0L300.7,429.7M271.3,443.0L267.7,440.3M267.4,442.5L271.6,440.8M265.9,438.9L263.0,436.7M278.0,438.4L281.4,437.1M250.0,451.3L246.5,448.3M246.1,450.6L250.4,449.0M244.7,446.8L242.0,444.5M257.3,446.3L260.8,445.0M227.2,460.1L223.9,456.9M223.4,459.3L227.7,457.7M222.2,455.3L219.5,452.8M235.4,454.7L238.8,453.4M202.9,469.5L199.7,466.1M199.1,468.6L203.5,467.0M198.1,464.4L195.6,461.7M211.9,463.7L215.4,462.4M176.8,479.6L173.8,475.9M173.1,478.6L177.5,476.9M172.4,474.1L170.0,471.2M186.8,473.4L190.3,472.0M148.7,490.4L146.0,486.5M145.2,489.3L149.6,487.6M144.7,484.6L142.5,481.4M159.8,483.7L163.4,482.3M118.5,502.1L116.1,497.8M115.1,500.8L119.6,499.1M114.9,495.8L113.0,492.4M130.8,494.8L134.5,493.4M85.9,514.7L83.8,510.1M82.5,513.3L87.2,511.5M82.8,507.9L81.2,504.2M99.5,506.8L103.3,505.3M50.5,528.4L48.9,523.4M47.2,526.8L52.1,524.9M48.1,521.0L46.8,517.0M65.7,519.7L69.6,518.3M12.0,543.2L10.9,537.8M8.9,541.5L14.0,539.5M10.4,535.2L9.5,530.9M28.9,533.8L33.0,532.2M589.1,326.3L587.0,325.8M587.1,326.4L589.1,325.6M583.5,325.1L581.8,324.7M583.3,328.6L581.1,328.2M581.2,328.8L583.2,328.0M577.6,327.4L575.8,327.0M584.3,327.5L586.0,326.9M577.2,331.1L575.0,330.6M575.0,331.3L577.2,330.4M571.5,329.8L569.7,329.4M578.3,330.0L580.0,329.3M571.0,333.6L568.6,333.1M568.7,333.8L570.9,332.9M565.2,332.3L563.3,331.9M572.1,332.5L573.9,331.7M564.5,336.3L562.1,335.7M562.1,336.5L564.4,335.5M558.6,334.9L556.7,334.4M565.7,335.0L567.5,334.3M557.8,339.0L555.3,338.4M555.3,339.2L557.7,338.2M551.9,337.6L549.9,337.1M559.0,337.7L560.9,337.0M550.8,341.9L548.2,341.2M548.2,342.0L550.7,341.0M544.8,340.4L542.7,339.9M552.0,340.5L554.0,339.7M543.5,344.8L540.8,344.1M540.9,345.0L543.5,344.0M537.5,343.3L535.4,342.7M544.8,343.4L546.9,342.6M536.0,347.9L533.2,347.2M533.3,348.1L535.9,347.0M529.9,346.3L527.7,345.7M537.4,346.4L539.5,345.6M528.2,351.1L525.3,350.3M525.3,351.3L528.1,350.1M522.1,349.4L519.7,348.8M529.6,349.5L531.8,348.7M520.0,354.4L517.0,353.6M517.0,354.6L520.0,353.4M513.9,352.7L511.5,352.0M521.5,352.8L523.8,351.9M511.5,357.9L508.4,357.0M508.4,358.0L511.5,356.8M505.3,356.1L502.8,355.3M513.1,356.2L515.5,355.2M502.7,361.5L499.4,360.5M499.5,361.7L502.6,360.4M496.4,359.6L493.8,358.8M504.3,359.7L506.8,358.7M493.4,365.3L490.0,364.2M490.1,365.4L493.4,364.1M487.2,363.3L484.4,362.4M495.1,363.4L497.8,362.3M483.8,369.3L480.2,368.1M480.3,369.4L483.7,368.0M477.5,367.2L474.6,366.2M485.5,367.2L488.3,366.1M473.7,373.4L470.0,372.1M470.0,373.5L473.7,372.0M467.3,371.2L464.4,370.2M475.5,371.3L478.4,370.1M463.1,377.7L459.3,376.3M459.3,377.8L463.1,376.3M456.8,375.4L453.7,374.3M465.1,375.5L468.1,374.3M452.1,382.3L448.1,380.7M448.1,382.3L452.1,380.7M445.7,379.8L442.5,378.6M454.1,379.9L457.3,378.6M440.5,387.0L436.3,385.4M436.3,387.0L440.5,385.4M434.1,384.5L430.7,383.2M442.6,384.5L446.0,383.1M428.3,392.0L424.0,390.2M424.0,392.0L428.3,390.3M421.8,389.3L418.4,387.9M430.6,389.3L434.0,387.9M415.4,397.2L411.1,395.4M411.1,397.2L415.4,395.4M408.9,394.4L405.6,392.9M418.1,394.4L421.5,393.0M401.8,402.7L397.6,400.8M397.5,402.6L401.8,400.9M395.4,399.8L392.0,398.2M404.8,399.7L408.3,398.3M387.5,408.5L383.3,406.5M383.2,408.4L387.5,406.6M381.1,405.4L377.7,403.8M390.9,405.3L394.4,403.9M372.4,414.7L368.2,412.5M368.1,414.5L372.5,412.7M366.0,411.4L362.7,409.6M376.2,411.2L379.7,409.8M356.4,421.2L352.2,418.8M352.1,420.9L356.5,419.1M350.1,417.7L346.8,415.8M360.6,417.5L364.2,416.0M339.4,428.0L335.3,425.6M335.2,427.7L339.6,425.9M333.3,424.3L330.0,422.4M344.2,424.1L347.7,422.6M321.5,435.3L317.5,432.7M317.2,434.9L321.7,433.1M315.4,431.4L312.2,429.3M326.8,431.1L330.3,429.6M302.4,443.0L298.4,440.3M298.2,442.6L302.7,440.8M296.5,438.9L293.3,436.7M308.3,438.5L311.9,437.0M282.1,451.3L278.2,448.3M277.9,450.7L282.4,448.9M276.3,446.8L273.2,444.5M288.6,446.4L292.2,444.9M260.4,460.1L256.6,456.9M256.2,459.4L260.8,457.6M254.8,455.3L251.8,452.8M267.7,454.8L271.3,453.4M237.2,469.5L233.6,466.1M233.1,468.7L237.7,466.9M231.8,464.4L229.0,461.7M245.3,463.8L249.0,462.3M212.3,479.6L208.9,475.9M208.3,478.7L212.9,476.8M207.2,474.1L204.5,471.2M221.4,473.4L225.1,471.9M185.6,490.4L182.4,486.5M181.7,489.4L186.4,487.5M180.9,484.6L178.3,481.4M195.7,483.8L199.4,482.2M156.8,502.1L153.9,497.8M153.0,500.9L157.8,499.0M152.5,495.8L150.1,492.4M168.1,494.9L171.9,493.3M125.7,514.7L123.1,510.1M122.0,513.4L126.9,511.4M121.8,507.9L119.8,504.2M138.2,506.8L142.2,505.3M92.0,528.4L89.8,523.4M88.4,526.9L93.4,524.9M88.7,521.0L86.9,517.0M106.0,519.8L110.0,518.2M55.3,543.2L53.6,537.8M51.8,541.6L57.1,539.5M52.7,535.2L51.3,530.9M70.9,533.9L75.2,532.2M15.3,559.5L14.1,553.5M11.9,557.6L17.5,555.4M13.5,550.7L12.6,546.0M32.8,549.2L37.3,547.4M-28.6,577.3L-29.1,570.7M-31.9,575.2L-25.8,572.8M-29.3,567.7L-29.8,562.4M-9.0,566.0L-4.1,564.1M600.3,328.6L598.2,328.2M598.3,328.8L600.2,328.0M594.5,327.4L592.8,327.0M594.5,331.1L592.4,330.6M592.4,331.3L594.5,330.4M588.6,329.8L586.9,329.4M595.6,330.0L597.2,329.3M588.6,333.6L586.4,333.1M586.4,333.8L588.5,332.9M582.6,332.3L580.8,331.9M589.7,332.5L591.3,331.7M582.4,336.3L580.1,335.7M580.2,336.5L582.4,335.5M576.4,334.9L574.6,334.5M583.5,335.0L585.3,334.3M576.0,339.0L573.6,338.4M573.7,339.2L576.0,338.2M570.0,337.6L568.0,337.1M577.2,337.7L579.0,337.0M569.4,341.8L566.9,341.2M567.0,342.0L569.3,341.0M563.3,340.4L561.3,339.9M570.6,340.5L572.5,339.7M562.5,344.8L559.9,344.2M560.0,345.0L562.4,344.0M556.3,343.3L554.3,342.7M563.7,343.4L565.7,342.6M555.3,347.9L552.6,347.2M552.7,348.1L555.3,347.0M549.1,346.3L547.0,345.7M556.6,346.4L558.7,345.6M547.9,351.1L545.1,350.3M545.2,351.3L547.8,350.1M541.6,349.4L539.4,348.8M549.2,349.5L551.3,348.7M540.1,354.4L537.2,353.6M537.3,354.6L540.1,353.4M533.8,352.7L531.5,352.0M541.5,352.8L543.7,351.9M532.1,357.9L529.0,357.0M529.1,358.0L532.0,356.8M525.7,356.0L523.3,355.4M533.5,356.2L535.8,355.2M523.6,361.5L520.5,360.6M520.6,361.7L523.6,360.4M517.2,359.6L514.7,358.8M525.2,359.7L527.6,358.7M514.9,365.3L511.6,364.3M511.7,365.4L514.8,364.1M508.4,363.3L505.8,362.5M516.4,363.4L519.0,362.3M505.7,369.2L502.3,368.1M502.3,369.4L505.6,368.0M499.2,367.1L496.4,366.3M507.3,367.2L510.0,366.1M496.1,373.3L492.6,372.2M492.6,373.5L496.0,372.0M489.5,371.2L486.7,370.2M497.8,371.3L500.6,370.1M486.1,377.7L482.4,376.4M482.4,377.8L486.0,376.3M479.4,375.4L476.5,374.4M487.9,375.5L490.8,374.3M475.6,382.2L471.7,380.8M471.7,382.3L475.5,380.7M468.9,379.8L465.8,378.7M477.5,379.9L480.5,378.6M464.5,387.0L460.5,385.4M460.5,387.0L464.5,385.4M457.8,384.4L454.6,383.2M466.6,384.5L469.7,383.1M453.0,392.0L448.8,390.3M448.8,392.0L452.9,390.2M446.2,389.3L442.9,388.0M455.1,389.3L458.4,387.9M440.8,397.2L436.4,395.4M436.4,397.2L440.8,395.4M434.1,394.4L430.5,393.0M443.1,394.4L446.6,392.9M427.9,402.7L423.5,400.8M423.5,402.7L427.9,400.8M421.2,399.8L417.6,398.2M430.4,399.8L434.0,398.2M414.3,408.5L409.9,406.5M409.8,408.5L414.4,406.6M407.6,405.4L404.0,403.8M417.2,405.4L420.8,403.8M400.0,414.7L395.5,412.5M395.5,414.5L400.0,412.6M393.2,411.4L389.7,409.6M403.2,411.3L406.8,409.7M384.8,421.2L380.3,418.8M380.3,421.0L384.9,419.0M378.1,417.7L374.6,415.8M388.4,417.5L392.1,416.0M368.7,428.0L364.3,425.6M364.2,427.8L368.8,425.8M362.1,424.3L358.5,422.4M372.8,424.1L376.5,422.6M351.6,435.3L347.3,432.7M347.1,435.0L351.8,433.0M345.1,431.4L341.6,429.3M356.2,431.1L360.0,429.6M333.5,443.0L329.2,440.3M329.0,442.7L333.7,440.7M327.0,438.9L323.6,436.7M338.6,438.6L342.4,437.0M314.2,451.3L309.9,448.3M309.7,450.8L314.4,448.8M307.8,446.8L304.5,444.5M319.9,446.5L323.7,444.9M293.5,460.1L289.4,456.9M289.1,459.5L293.9,457.5M287.4,455.3L284.1,452.8M300.0,454.9L303.8,453.3M271.5,469.5L267.5,466.1M267.1,468.8L271.9,466.8M265.5,464.4L262.3,461.7M278.7,463.9L282.6,462.3M247.9,479.6L244.0,475.9M243.5,478.8L248.4,476.7M242.1,474.1L239.0,471.2M256.0,473.5L259.9,471.9M222.5,490.4L218.8,486.5M218.2,489.5L223.1,487.4M217.0,484.6L214.1,481.4M231.5,483.8L235.5,482.2M195.1,502.1L191.7,497.8M190.9,501.0L195.9,498.9M190.0,495.8L187.2,492.4M205.3,494.9L209.3,493.2M165.6,514.7L162.4,510.1M161.4,513.5L166.5,511.3M160.9,507.9L158.3,504.2M176.9,506.9L181.0,505.2M133.5,528.4L130.7,523.4M129.5,527.0L134.7,524.8M129.3,521.0L127.0,517.0M146.3,519.9L150.5,518.1M98.7,543.2L96.2,537.8M94.7,541.7L100.2,539.4M95.1,535.2L93.1,530.9M113.0,534.0L117.3,532.1M60.6,559.5L58.7,553.5M56.8,557.7L62.5,555.3M57.8,550.7L56.2,546.0M76.7,549.3L81.3,547.4M18.9,577.3L17.6,570.7M15.2,575.3L21.3,572.7M17.0,567.7L15.9,562.4M37.0,566.1L41.9,564.0M-27.0,596.9L-27.6,589.6M-30.6,594.7L-23.9,591.8M-27.8,586.3L-28.3,580.5M-6.6,584.5L-1.3,582.3M611.9,331.1L609.8,330.6M609.8,331.3L611.8,330.4M605.8,329.8L604.2,329.4M606.2,333.6L604.1,333.1M604.1,333.8L606.1,332.9M600.1,332.3L598.4,331.9M607.2,332.5L608.8,331.7M600.4,336.2L598.1,335.8M598.2,336.5L600.3,335.5M594.2,334.9L592.4,334.5M601.4,335.0L603.0,334.3M594.3,339.0L592.0,338.5M592.1,339.2L594.2,338.2M588.1,337.6L586.2,337.1M595.4,337.7L597.1,337.0M588.0,341.8L585.6,341.3M585.7,342.0L587.9,341.0M581.7,340.3L579.8,339.9M589.1,340.5L590.9,339.7M581.5,344.8L579.0,344.2M579.1,345.0L581.4,344.0M575.1,343.2L573.1,342.8M582.6,343.4L584.5,342.6M574.7,347.9L572.1,347.2M572.2,348.1L574.6,347.0M568.3,346.2L566.2,345.7M575.9,346.4L577.8,345.6M567.6,351.0L564.9,350.4M565.0,351.3L567.5,350.1M561.1,349.4L559.0,348.8M568.9,349.5L570.9,348.7M560.3,354.4L557.5,353.6M557.6,354.6L560.2,353.4M553.7,352.6L551.5,352.0M561.6,352.8L563.7,351.9M552.6,357.8L549.7,357.0M549.8,358.0L552.5,356.8M546.0,356.0L543.7,355.4M554.0,356.2L556.1,355.2M544.6,361.4L541.6,360.6M541.7,361.7L544.5,360.4M538.0,359.6L535.6,358.9M546.0,359.7L548.3,358.7M536.3,365.2L533.2,364.3M533.2,365.4L536.2,364.1M529.6,363.2L527.1,362.5M537.8,363.4L540.2,362.3M527.6,369.2L524.3,368.2M524.4,369.4L527.5,368.0M520.8,367.1L518.2,366.3M529.1,367.2L531.6,366.1M518.5,373.3L515.1,372.2M515.2,373.5L518.4,372.0M511.7,371.1L509.0,370.3M520.1,371.3L522.7,370.1M509.0,377.6L505.4,376.4M505.5,377.8L508.9,376.3M502.1,375.3L499.3,374.4M510.7,375.5L513.4,374.3M499.0,382.1L495.3,380.9M495.4,382.3L499.0,380.7M492.1,379.7L489.1,378.7M500.8,379.9L503.7,378.6M488.6,386.9L484.7,385.5M484.8,387.0L488.5,385.4M481.6,384.4L478.5,383.3M490.5,384.5L493.5,383.1M477.6,391.9L473.6,390.4M473.6,392.0L477.6,390.2M470.6,389.2L467.4,388.0M479.6,389.3L482.8,387.9M466.1,397.1L461.8,395.5M461.9,397.2L466.0,395.4M459.0,394.4L455.6,393.0M468.2,394.4L471.5,392.9M453.9,402.7L449.5,400.8M449.5,402.7L453.9,400.8M446.9,399.7L443.3,398.3M456.2,399.8L459.7,398.2M441.1,408.5L436.5,406.5M436.5,408.5L441.1,406.5M434.0,405.4L430.3,403.8M443.5,405.4L447.2,403.8M427.6,414.7L422.9,412.5M422.8,414.6L427.6,412.5M420.4,411.4L416.7,409.6M430.2,411.4L434.0,409.7M413.2,421.2L408.5,418.8M408.4,421.1L413.2,418.9M406.1,417.7L402.3,415.8M416.2,417.6L420.0,415.9M397.9,428.0L393.2,425.6M393.2,427.9L398.0,425.7M390.8,424.3L387.1,422.4M401.4,424.2L405.2,422.5M381.7,435.3L377.1,432.7M377.0,435.1L381.9,432.9M374.7,431.4L371.0,429.3M385.7,431.2L389.6,429.5M364.5,443.0L359.9,440.3M359.8,442.8L364.7,440.6M357.6,438.9L353.9,436.7M369.0,438.6L372.9,436.9M346.2,451.3L341.7,448.3M341.5,450.9L346.4,448.7M339.4,446.8L335.7,444.5M351.2,446.6L355.2,444.8M326.7,460.1L322.2,456.9M321.9,459.6L327.0,457.4M320.0,455.3L316.3,452.8M332.3,455.0L336.4,453.2M305.8,469.5L301.4,466.1M301.1,468.9L306.1,466.7M299.2,464.4L295.7,461.7M312.2,464.0L316.2,462.2M283.4,479.6L279.1,475.9M278.7,478.9L283.8,476.6M277.0,474.1L273.6,471.2M290.6,473.6L294.7,471.8M259.4,490.4L255.2,486.5M254.7,489.6L259.9,487.3M253.2,484.6L249.8,481.4M267.4,483.9L271.6,482.1M233.4,502.1L229.5,497.8M228.8,501.1L234.1,498.8M227.5,495.8L224.4,492.4M242.5,495.0L246.7,493.2M205.4,514.7L201.7,510.1M200.8,513.6L206.2,511.2M199.9,507.9L196.9,504.2M215.6,507.0L219.9,505.1M175.0,528.4L171.6,523.4M170.5,527.1L176.1,524.6M169.9,521.0L167.2,517.0M186.5,520.0L190.9,518.0M142.0,543.2L138.9,537.8M137.6,541.8L143.3,539.2M137.4,535.2L135.0,530.9M154.9,534.1L159.5,532.0M105.9,559.5L103.3,553.5M101.6,557.8L107.6,555.2M102.0,550.7L99.9,546.0M120.6,549.4L125.3,547.3M66.4,577.3L64.3,570.7M62.2,575.4L68.5,572.6M63.3,567.7L61.6,562.4M82.9,566.2L88.0,563.9M22.9,596.9L21.4,589.6M18.8,594.8L25.5,591.7M20.8,586.3L19.6,580.5M41.6,584.6L47.0,582.2M-25.2,618.5L-25.9,610.5M-29.2,616.2L-21.9,612.9M-26.2,606.8L-26.7,600.4M-4.0,604.9L1.9,602.3M623.8,333.6L621.8,333.2M621.8,333.8L623.7,332.9M617.6,332.3L615.9,331.9M618.3,336.2L616.2,335.8M616.2,336.5L618.2,335.5M612.0,334.9L610.3,334.5M619.3,335.0L620.8,334.3M612.6,339.0L610.4,338.5M610.4,339.2L612.5,338.2M606.2,337.5L604.4,337.2M613.6,337.7L615.2,337.0M606.6,341.8L604.3,341.3M604.4,342.0L606.5,341.0M600.2,340.3L598.3,339.9M607.6,340.5L609.3,339.7M600.4,344.8L598.1,344.2M598.1,345.0L600.3,344.0M593.9,343.2L592.0,342.8M601.5,343.4L603.3,342.6M594.0,347.8L591.5,347.2M591.6,348.1L593.9,347.0M587.4,346.2L585.5,345.8M595.1,346.4L597.0,345.6M587.3,351.0L584.8,350.4M584.9,351.3L587.2,350.1M580.7,349.4L578.6,348.8M588.5,349.5L590.4,348.7M580.4,354.3L577.7,353.7M577.8,354.6L580.3,353.4M573.7,352.6L571.5,352.1M581.6,352.8L583.6,351.9M573.1,357.8L570.4,357.1M570.5,358.0L573.1,356.8M566.4,356.0L564.1,355.4M574.4,356.2L576.5,355.2M565.6,361.4L562.7,360.6M562.8,361.7L565.5,360.4M558.7,359.5L556.4,358.9M566.9,359.7L569.1,358.7M557.7,365.2L554.7,364.3M554.8,365.4L557.6,364.1M550.8,363.2L548.4,362.5M559.1,363.4L561.4,362.3M549.5,369.1L546.4,368.2M546.5,369.4L549.4,368.0M542.5,367.1L540.0,366.3M551.0,367.2L553.3,366.1M540.9,373.2L537.7,372.3M537.7,373.5L540.8,372.0M533.9,371.1L531.2,370.3M542.4,371.3L544.9,370.1M531.9,377.6L528.5,376.5M528.6,377.8L531.8,376.3M524.8,375.3L522.1,374.4M533.5,375.5L536.1,374.3M522.5,382.1L518.9,380.9M519.0,382.3L522.4,380.7M515.3,379.7L512.5,378.8M524.2,379.9L526.9,378.6M512.6,386.8L508.9,385.6M509.0,387.0L512.5,385.4M505.4,384.3L502.4,383.3M514.4,384.5L517.2,383.1M502.3,391.8L498.4,390.4M498.4,392.0L502.2,390.2M494.9,389.2L491.8,388.1M504.1,389.3L507.1,387.9M491.4,397.1L487.3,395.5M487.4,397.2L491.3,395.4M484.0,394.3L480.7,393.1M493.3,394.4L496.5,392.9M479.9,402.6L475.6,400.9M475.7,402.7L479.8,400.8M472.5,399.7L469.1,398.3M482.0,399.8L485.3,398.2M467.8,408.4L463.3,406.6M463.4,408.5L467.7,406.5M460.3,405.3L456.8,403.9M470.0,405.4L473.5,403.8M455.0,414.6L450.3,412.6M450.4,414.7L455.0,412.5M447.5,411.3L443.8,409.7M457.4,411.4L461.1,409.6M441.5,421.1L436.6,418.9M436.6,421.2L441.5,418.8M434.0,417.7L430.1,415.8M444.0,417.7L447.9,415.8M427.2,428.0L422.2,425.6M422.1,428.0L427.2,425.6M419.6,424.3L415.6,422.4M430.0,424.3L434.0,422.4M411.9,435.3L406.9,432.7M406.8,435.2L411.9,432.8M404.4,431.4L400.4,429.3M415.1,431.3L419.2,429.4M395.6,443.0L390.7,440.3M390.6,442.9L395.7,440.4M388.2,438.9L384.2,436.7M399.3,438.7L403.4,436.8M378.3,451.3L373.4,448.3M373.3,451.0L378.5,448.6M370.9,446.8L367.0,444.5M382.6,446.6L386.7,444.7M359.9,460.1L355.0,456.9M354.8,459.7L360.1,457.3M352.5,455.3L348.6,452.8M364.7,455.1L368.9,453.1M340.1,469.5L335.3,466.1M335.0,469.1L340.4,466.5M332.9,464.4L329.0,461.7M345.6,464.1L349.9,462.1M319.0,479.6L314.2,475.9M313.9,479.0L319.3,476.5M311.9,474.1L308.1,471.2M325.2,473.7L329.5,471.7M296.2,490.4L291.6,486.5M291.2,489.7L296.6,487.2M289.3,484.6L285.6,481.4M303.3,484.0L307.6,482.0M271.7,502.1L267.2,497.8M266.7,501.3L272.3,498.6M265.1,495.8L261.5,492.4M279.7,495.1L284.2,493.0M245.2,514.7L241.0,510.1M240.3,513.7L245.9,511.1M238.9,507.9L235.4,504.2M254.3,507.1L258.8,505.0M216.5,528.4L212.5,523.4M211.6,527.2L217.4,524.5M210.5,521.0L207.3,517.0M226.8,520.1L231.4,517.9M185.3,543.2L181.6,537.8M180.5,541.9L186.4,539.1M179.8,535.2L176.8,530.9M196.9,534.2L201.7,531.9M151.3,559.5L147.9,553.5M146.5,558.0L152.7,555.0M146.3,550.7L143.6,546.0M164.4,549.5L169.4,547.2M113.9,577.3L111.0,570.7M109.2,575.5L115.7,572.5M109.6,567.7L107.3,562.4M128.8,566.3L134.0,563.8M72.8,596.9L70.4,589.6M68.2,594.9L75.1,591.6M69.4,586.3L67.5,580.5M89.8,584.7L95.3,582.1M27.3,618.5L25.7,610.5M22.8,616.3L30.2,612.8M24.9,606.8L23.6,600.4M46.7,605.0L52.6,602.2M-23.3,642.7L-24.0,633.7M-27.7,640.1L-19.6,636.2M-24.3,629.6L-24.9,622.4M-1.2,627.6L5.4,624.5M636.2,336.2L634.2,335.8M634.3,336.5L636.1,335.5M629.8,334.8L628.1,334.5M630.8,338.9L628.7,338.5M628.8,339.2L630.7,338.2M624.3,337.5L622.6,337.2M631.7,337.7L633.3,337.0M625.2,341.8L623.0,341.3M623.1,342.0L625.1,341.0M618.6,340.3L616.9,339.9M626.2,340.5L627.8,339.7M619.4,344.7L617.1,344.2M617.2,345.0L619.3,344.0M612.7,343.2L610.9,342.8M620.4,343.4L622.0,342.6M613.3,347.8L611.0,347.3M611.1,348.1L613.2,347.0M606.6,346.2L604.7,345.8M614.4,346.4L616.1,345.6M607.0,351.0L604.6,350.4M604.7,351.3L607.0,350.1M600.2,349.3L598.3,348.9M608.1,349.5L609.9,348.7M600.5,354.3L598.0,353.7M598.1,354.6L600.4,353.4M593.6,352.6L591.6,352.1M601.6,352.8L603.5,351.9M593.7,357.8L591.0,357.1M591.1,358.0L593.6,356.8M586.7,356.0L584.6,355.4M594.9,356.2L596.8,355.2M586.6,361.4L583.8,360.7M583.9,361.7L586.5,360.4M579.5,359.5L577.3,358.9M587.8,359.7L589.8,358.7M579.2,365.2L576.3,364.4M576.4,365.4L579.1,364.1M572.0,363.2L569.7,362.6M580.4,363.4L582.6,362.3M571.4,369.1L568.4,368.2M568.5,369.4L571.3,368.0M564.2,367.0L561.8,366.4M572.8,367.2L575.0,366.1M563.3,373.2L560.2,372.3M560.3,373.5L563.2,372.0M556.0,371.1L553.5,370.3M564.7,371.3L567.0,370.1M554.8,377.5L551.6,376.5M551.7,377.8L554.7,376.3M547.5,375.3L544.9,374.5M556.3,375.5L558.8,374.3M546.0,382.0L542.6,381.0M542.7,382.3L545.9,380.7M538.5,379.7L535.8,378.8M547.5,379.9L550.1,378.6M536.7,386.8L533.1,385.6M533.2,387.0L536.6,385.4M529.1,384.3L526.3,383.3M538.3,384.5L541.0,383.1M526.9,391.8L523.2,390.5M523.3,392.0L526.8,390.2M519.3,389.1L516.3,388.1M528.6,389.3L531.4,387.9M516.6,397.0L512.7,395.6M512.8,397.2L516.5,395.4M509.0,394.2L505.8,393.1M518.4,394.4L521.4,392.9M505.8,402.5L501.7,401.0M501.8,402.7L505.7,400.8M498.1,399.6L494.8,398.4M507.7,399.8L510.9,398.2M494.4,408.4L490.1,406.7M490.2,408.5L494.3,406.5M486.6,405.3L483.2,403.9M496.5,405.4L499.8,403.8M482.4,414.5L477.9,412.6M478.0,414.7L482.3,412.5M474.6,411.3L471.0,409.8M484.6,411.4L488.0,409.6M469.7,421.0L465.0,419.0M465.0,421.2L469.6,418.8M461.8,417.6L458.0,415.9M472.0,417.7L475.7,415.8M456.2,427.9L451.3,425.6M451.3,428.0L456.2,425.6M448.3,424.3L444.3,422.4M458.7,424.3L462.6,422.4M442.0,435.3L436.7,432.7M436.7,435.3L441.9,432.7M434.0,431.4L429.8,429.3M444.6,431.4L448.7,429.3M426.7,443.0L421.4,440.3M421.4,443.0L426.7,440.3M418.7,438.9L414.5,436.7M429.7,438.8L434.0,436.7M410.4,451.3L405.1,448.3M405.0,451.2L410.5,448.4M402.5,446.8L398.2,444.5M413.9,446.8L418.2,444.6M393.0,460.1L387.7,456.9M387.6,459.9L393.1,457.1M385.1,455.3L380.9,452.8M397.0,455.2L401.4,453.0M374.4,469.5L369.2,466.1M369.0,469.2L374.6,466.4M366.6,464.4L362.4,461.7M379.0,464.2L383.5,462.0M354.5,479.6L349.3,475.9M349.1,479.2L354.7,476.3M346.8,474.1L342.6,471.2M359.8,473.8L364.3,471.6M333.1,490.4L328.0,486.5M327.7,489.9L333.4,487.0M325.5,484.6L321.4,481.4M339.1,484.2L343.7,481.8M310.0,502.1L305.0,497.8M304.6,501.4L310.4,498.5M302.6,495.8L298.6,492.4M316.9,495.3L321.6,492.9M285.1,514.7L280.2,510.1M279.7,513.9L285.6,510.9M277.9,507.9L274.0,504.2M292.9,507.3L297.7,504.9M258.1,528.4L253.4,523.4M252.7,527.4L258.8,524.3M251.2,521.0L247.4,517.0M267.0,520.2L271.9,517.8M228.7,543.2L224.2,537.8M223.3,542.1L229.6,539.0M222.1,535.2L218.6,530.9M238.9,534.3L243.9,531.8M196.6,559.5L192.5,553.5M191.3,558.1L197.8,554.9M190.5,550.7L187.2,546.0M208.3,549.6L213.4,547.0M161.4,577.3L157.7,570.7M156.2,575.7L162.9,572.3M155.9,567.7L152.9,562.4M174.7,566.4L180.1,563.7M122.7,596.9L119.5,589.6M117.5,595.0L124.6,591.5M118.0,586.3L115.4,580.5M137.9,584.8L143.6,582.0M79.9,618.5L77.2,610.5M74.8,616.4L82.3,612.6M76.0,606.8L74.0,600.4M97.3,605.1L103.4,602.1M32.2,642.7L30.4,633.7M27.2,640.2L35.4,636.1M29.6,629.6L28.1,622.4M52.3,627.7L58.8,624.4M-21.1,669.6L-21.9,659.5M-26.0,666.9L-17.0,662.3M-22.3,655.0L-22.9,647.0M2.0,652.8L9.3,649.2M649.1,338.9L647.1,338.5M647.2,339.2L649.0,338.2M642.4,337.5L640.8,337.2M643.8,341.8L641.7,341.3M641.8,342.0L643.7,341.0M637.0,340.3L635.4,339.9M644.7,340.5L646.2,339.7M638.4,344.7L636.2,344.2M636.3,345.0L638.3,344.0M631.5,343.2L629.8,342.8M639.3,343.4L640.8,342.6M632.7,347.8L630.4,347.3M630.5,348.1L632.6,347.0M625.7,346.2L624.0,345.8M633.6,346.4L635.3,345.6M626.8,351.0L624.4,350.4M624.6,351.3L626.7,350.1M619.8,349.3L617.9,348.9M627.8,349.5L629.5,348.7M620.6,354.3L618.2,353.7M618.3,354.6L620.5,353.4M613.5,352.6L611.6,352.1M621.7,352.8L623.4,351.9M614.2,357.8L611.7,357.1M611.8,358.0L614.1,356.8M607.0,356.0L605.0,355.4M615.3,356.2L617.1,355.2M607.6,361.4L604.9,360.7M605.1,361.7L607.4,360.4M600.3,359.5L598.2,358.9M608.7,359.7L610.6,358.7M600.6,365.1L597.9,364.4M598.0,365.4L600.5,364.1M593.2,363.2L591.0,362.6M601.8,363.4L603.8,362.3M593.3,369.1L590.5,368.3M590.6,369.4L593.2,368.0M585.9,367.0L583.6,366.4M594.6,367.2L596.6,366.1M585.7,373.2L582.8,372.3M582.9,373.5L585.6,372.0M578.2,371.0L575.8,370.3M587.0,371.3L589.2,370.1M577.8,377.5L574.7,376.6M574.8,377.8L577.6,376.3M570.1,375.2L567.7,374.5M579.1,375.5L581.4,374.3M569.4,382.0L566.2,381.0M566.3,382.3L569.3,380.7M561.7,379.6L559.1,378.8M570.9,379.9L573.3,378.6M560.7,386.7L557.3,385.7M557.4,387.0L560.6,385.4M552.9,384.3L550.2,383.4M562.2,384.5L564.7,383.1M551.5,391.7L548.0,390.5M548.1,392.0L551.4,390.2M543.7,389.1L540.8,388.2M553.1,389.3L555.8,387.9M541.9,397.0L538.2,395.7M538.3,397.2L541.8,395.4M533.9,394.2L531.0,393.2M543.6,394.4L546.4,392.9M531.8,402.5L527.8,401.1M528.0,402.7L531.6,400.8M523.7,399.6L520.6,398.4M533.5,399.8L536.5,398.2M521.1,408.3L517.0,406.7M517.1,408.5L520.9,406.5M512.9,405.2L509.7,404.0M522.9,405.4L526.0,403.8M509.8,414.4L505.5,412.7M505.6,414.7L509.7,412.5M501.6,411.2L498.1,409.8M511.8,411.4L515.0,409.6M497.9,420.9L493.3,419.1M493.4,421.2L497.8,418.8M489.6,417.5L485.9,416.0M500.0,417.7L503.4,415.8M485.2,427.8L480.5,425.7M480.5,428.0L485.1,425.6M476.9,424.2L473.1,422.5M487.5,424.3L491.1,422.4M471.8,435.2L466.8,432.8M466.9,435.3L471.8,432.7M463.4,431.3L459.4,429.4M474.2,431.4L478.1,429.3M457.6,443.0L452.3,440.4M452.4,443.0L457.6,440.3M449.1,438.8L444.9,436.7M460.2,438.9L464.3,436.7M442.4,451.3L436.9,448.4M436.9,451.3L442.4,448.3M434.0,446.8L429.5,444.5M445.2,446.8L449.6,444.5M426.2,460.1L420.5,456.9M420.5,460.0L426.2,457.0M417.7,455.3L413.2,452.8M429.3,455.3L433.9,452.9M408.7,469.5L403.1,466.1M403.0,469.3L408.8,466.2M400.3,464.4L395.8,461.7M412.5,464.3L417.1,461.8M390.0,479.6L384.4,475.9M384.3,479.3L390.2,476.2M381.6,474.1L377.1,471.2M394.4,473.9L399.1,471.4M370.0,490.4L364.4,486.5M364.2,490.0L370.2,486.8M361.6,484.6L357.2,481.4M375.0,484.3L379.8,481.7M348.3,502.1L342.8,497.8M342.5,501.6L348.6,498.3M340.1,495.8L335.7,492.4M354.1,495.4L359.0,492.8M324.9,514.7L319.5,510.1M319.1,514.1L325.3,510.7M316.9,507.9L312.6,504.2M331.6,507.4L336.6,504.7M299.6,528.4L294.3,523.4M293.7,527.6L300.1,524.2M291.8,521.0L287.5,517.0M307.3,520.4L312.4,517.6M272.0,543.2L266.9,537.8M266.2,542.3L272.7,538.8M264.5,535.2L260.4,530.9M280.9,534.4L286.1,531.6M241.9,559.5L237.1,553.5M236.1,558.3L242.9,554.7M234.8,550.7L230.9,546.0M252.1,549.8L257.5,546.9M208.9,577.3L204.4,570.7M203.1,575.9L210.2,572.1M202.3,567.7L198.6,562.4M220.6,566.5L226.3,563.5M172.6,596.9L168.5,589.6M166.9,595.2L174.2,591.3M166.6,586.3L163.3,580.5M186.1,585.0L192.0,581.8M132.4,618.5L128.8,610.5M126.7,616.6L134.5,612.5M127.2,606.8L124.3,600.4M148.0,605.3L154.2,602.0M87.7,642.7L84.8,633.7M82.1,640.4L90.4,635.9M83.5,629.6L81.1,622.4M105.7,627.8L112.4,624.2M662.4,341.8L660.5,341.3M660.6,342.0L662.3,341.0M655.5,340.3L653.9,340.0M657.3,344.7L655.3,344.3M655.4,345.0L657.2,344.0M650.3,343.2L648.7,342.8M658.2,343.4L659.6,342.6M652.0,347.8L649.9,347.3M650.0,348.1L651.9,347.0M644.9,346.2L643.2,345.8M652.9,346.4L654.4,345.6M646.5,351.0L644.3,350.4M644.4,351.3L646.4,350.1M639.3,349.3L637.5,348.9M647.4,349.5L649.0,348.7M640.8,354.3L638.5,353.7M638.6,354.6L640.6,353.4M633.5,352.5L631.6,352.1M641.7,352.8L643.3,351.9M634.8,357.7L632.4,357.1M632.5,358.0L634.6,356.8M627.4,355.9L625.5,355.5M635.8,356.2L637.5,355.2M628.5,361.3L626.0,360.7M626.2,361.7L628.4,360.4M621.0,359.5L619.1,359.0M629.6,359.7L631.4,358.7M622.0,365.1L619.4,364.4M619.6,365.4L621.9,364.1M614.4,363.1L612.4,362.6M623.1,363.4L625.0,362.3M615.2,369.0L612.5,368.3M612.7,369.4L615.1,368.0M607.6,367.0L605.4,366.4M616.4,367.2L618.3,366.1M608.1,373.1L605.3,372.4M605.4,373.5L608.0,372.0M600.4,371.0L598.1,370.4M609.3,371.3L611.4,370.1M600.7,377.4L597.7,376.6M597.9,377.8L600.6,376.3M592.8,375.2L590.5,374.5M601.9,375.5L604.1,374.3M592.9,382.0L589.8,381.0M590.0,382.3L592.8,380.7M584.9,379.6L582.5,378.9M594.2,379.9L596.5,378.6M584.8,386.7L581.5,385.7M581.7,387.0L584.6,385.4M576.7,384.2L574.1,383.4M586.1,384.5L588.5,383.1M576.2,391.7L572.8,390.6M572.9,392.0L576.0,390.2M568.0,389.1L565.3,388.2M577.6,389.3L580.1,387.9M567.2,396.9L563.6,395.7M563.8,397.2L567.0,395.4M558.9,394.2L556.1,393.2M568.7,394.4L571.3,392.9M557.7,402.4L554.0,401.1M554.1,402.7L557.5,400.8M549.3,399.5L546.3,398.5M559.3,399.8L562.0,398.2M547.7,408.2L543.8,406.8M543.9,408.5L547.6,406.5M539.2,405.2L536.1,404.0M549.4,405.4L552.3,403.8M537.2,414.4L533.0,412.8M533.2,414.7L537.0,412.5M528.6,411.1L525.3,409.9M539.0,411.4L542.0,409.6M526.0,420.9L521.7,419.1M521.8,421.2L525.9,418.8M517.4,417.4L513.9,416.1M527.9,417.7L531.2,415.8M514.2,427.7L509.6,425.8M509.8,428.0L514.1,425.6M505.5,424.1L501.8,422.6M516.3,424.3L519.7,422.4M501.7,435.1L496.9,432.9M497.0,435.3L501.6,432.7M492.9,431.2L489.0,429.5M503.9,431.4L507.5,429.3M488.4,442.8L483.3,440.5M483.4,443.0L488.3,440.3M479.5,438.7L475.4,436.8M490.7,438.9L494.6,436.7M474.2,451.1L468.9,448.5M469.0,451.3L474.2,448.3M465.3,446.7L461.0,444.6M476.8,446.8L480.9,444.5M459.1,460.0L453.5,457.0M453.5,460.1L459.1,456.9M450.1,455.3L445.6,452.9M461.8,455.3L466.3,452.8M443.0,469.5L437.0,466.1M437.0,469.5L443.0,466.1M433.9,464.4L429.2,461.7M445.9,464.4L450.7,461.7M425.6,479.6L419.5,475.9M419.5,479.5L425.6,476.0M416.5,474.1L411.7,471.2M429.0,474.1L433.9,471.3M406.8,490.4L400.8,486.5M400.7,490.2L406.9,486.7M397.8,484.6L392.9,481.4M410.8,484.4L415.9,481.6M386.6,502.1L380.6,497.8M380.4,501.8L386.8,498.1M377.6,495.8L372.8,492.4M391.3,495.6L396.4,492.6M364.8,514.7L358.8,510.1M358.5,514.3L365.1,510.5M355.9,507.9L351.1,504.2M370.3,507.6L375.5,504.6M341.1,528.4L335.2,523.4M334.8,527.8L341.5,524.0M332.4,521.0L327.7,517.0M347.5,520.5L352.9,517.5M315.3,543.2L309.6,537.8M309.0,542.5L315.9,538.6M306.8,535.2L302.2,530.9M322.8,534.6L328.3,531.5M287.2,559.5L281.6,553.5M280.9,558.5L288.0,554.5M279.0,550.7L274.5,546.0M295.9,549.9L301.6,546.7M256.4,577.3L251.1,570.7M250.1,576.1L257.4,571.9M248.6,567.7L244.3,562.4M266.5,566.7L272.4,563.4M222.5,596.9L217.5,589.6M216.2,595.4L223.8,591.1M215.2,586.3L211.1,580.5M234.2,585.1L240.3,581.6M184.9,618.5L180.4,610.5M178.6,616.8L186.7,612.2M178.3,606.8L174.6,600.4M198.6,605.4L205.0,601.8M143.2,642.7L139.2,633.7M136.9,640.6L145.5,635.7M137.4,629.6L134.1,622.4M159.1,628.0L165.9,624.1M676.3,344.7L674.3,344.3M674.5,345.0L676.2,344.0M669.1,343.2L667.5,342.8M671.4,347.7L669.3,347.3M669.5,348.1L671.2,347.0M664.1,346.2L662.4,345.8M672.2,346.4L673.6,345.6M666.2,350.9L664.1,350.5M664.3,351.3L666.1,350.1M658.8,349.3L657.2,348.9M667.0,349.5L668.5,348.7M660.9,354.2L658.7,353.8M658.8,354.6L660.7,353.4M653.4,352.5L651.6,352.1M661.7,352.8L663.3,351.9M655.3,357.7L653.0,357.2M653.2,358.0L655.2,356.8M647.7,355.9L645.9,355.5M656.2,356.2L657.8,355.2M649.5,361.3L647.1,360.7M647.3,361.7L649.4,360.4M641.8,359.4L639.9,359.0M650.5,359.7L652.1,358.7M643.5,365.1L641.0,364.5M641.1,365.4L643.3,364.1M635.7,363.1L633.7,362.6M644.4,363.4L646.2,362.3M637.1,369.0L634.6,368.3M634.7,369.4L637.0,368.0M629.2,367.0L627.2,366.4M638.2,367.2L640.0,366.1M630.5,373.1L627.8,372.4M628.0,373.5L630.4,372.0M622.5,371.0L620.4,370.4M631.6,371.3L633.5,370.1M623.6,377.4L620.8,376.6M621.0,377.8L623.5,376.3M615.5,375.2L613.3,374.6M624.8,375.5L626.7,374.3M616.4,381.9L613.4,381.1M613.6,382.3L616.2,380.7M608.2,379.6L605.8,378.9M617.6,379.9L619.7,378.6M608.8,386.6L605.7,385.7M605.9,387.0L608.6,385.4M600.4,384.2L598.0,383.5M610.0,384.5L612.2,383.1M600.8,391.6L597.6,390.6M597.8,392.0L600.7,390.2M592.4,389.0L589.8,388.2M602.1,389.3L604.4,387.9M592.4,396.8L589.1,395.8M589.2,397.2L592.3,395.4M583.9,394.1L581.2,393.3M593.8,394.4L596.2,392.9M583.6,402.4L580.1,401.2M580.3,402.7L583.5,400.8M574.9,399.5L572.1,398.5M585.1,399.8L587.6,398.2M574.3,408.2L570.6,406.9M570.8,408.5L574.2,406.5M565.5,405.1L562.5,404.1M575.9,405.4L578.6,403.8M564.5,414.3L560.6,412.9M560.8,414.7L564.3,412.5M555.6,411.1L552.5,409.9M566.2,411.4L569.0,409.6M554.2,420.8L550.0,419.2M550.2,421.2L554.0,418.8M545.1,417.4L541.8,416.1M555.9,417.7L558.9,415.8M543.2,427.7L538.8,425.9M539.0,428.0L543.0,425.6M534.0,424.0L530.6,422.7M545.0,424.3L548.2,422.4M531.6,435.0L527.0,433.0M527.1,435.3L531.4,432.7M522.3,431.1L518.6,429.6M533.5,431.4L536.9,429.3M519.2,442.7L514.3,440.6M514.5,443.0L519.0,440.3M509.8,438.6L505.9,436.9M521.3,438.9L524.9,436.7M506.0,451.0L500.9,448.6M501.1,451.3L505.9,448.3M496.6,446.6L492.5,444.7M508.3,446.8L512.2,444.5M492.0,459.8L486.6,457.2M486.7,460.1L491.9,456.9M482.5,455.1L478.1,453.0M494.4,455.3L498.6,452.8M477.0,469.3L471.2,466.3M471.4,469.5L476.9,466.1M467.4,464.3L462.8,461.9M479.6,464.4L484.0,461.7M460.9,479.4L454.8,476.1M454.9,479.6L460.8,475.9M451.2,474.0L446.4,471.3M463.8,474.1L468.5,471.2M443.6,490.4L437.2,486.5M437.2,490.4L443.6,486.5M433.9,484.5L428.8,481.5M446.8,484.6L451.9,481.4M424.9,502.1L418.4,497.8M418.3,502.0L425.0,497.9M415.2,495.8L409.9,492.4M428.5,495.7L433.9,492.5M404.6,514.7L398.1,510.1M397.9,514.5L404.7,510.3M394.9,507.9L389.7,504.2M409.0,507.7L414.4,504.4M382.6,528.4L376.1,523.4M375.9,528.0L382.8,523.7M373.0,521.0L367.8,517.0M387.8,520.7L393.4,517.3M358.7,543.2L352.2,537.8M351.9,542.7L359.0,538.3M349.2,535.2L344.0,530.9M364.8,534.8L370.5,531.3M332.5,559.5L326.2,553.5M325.7,558.8L333.1,554.2M323.3,550.7L318.2,546.0M339.8,550.1L345.7,546.5M303.9,577.3L297.8,570.7M297.0,576.3L304.7,571.7M294.9,567.7L290.0,562.4M312.4,566.9L318.5,563.2M272.4,596.9L266.5,589.6M265.4,595.7L273.4,590.8M263.7,586.3L259.0,580.5M282.3,585.3L288.7,581.4M237.5,618.5L231.9,610.5M230.5,617.1L238.9,612.0M229.4,606.8L224.9,600.4M249.2,605.7L255.8,601.6M690.7,347.7L688.8,347.3M688.9,348.1L690.5,347.0M683.2,346.2L681.7,345.8M685.9,350.9L684.0,350.5M684.1,351.3L685.8,350.1M678.4,349.3L676.8,348.9M686.7,349.5L688.0,348.7M681.0,354.2L678.9,353.8M679.1,354.6L680.9,353.4M673.3,352.5L671.7,352.1M681.8,352.8L683.2,351.9M675.9,357.7L673.7,357.2M673.9,358.0L675.7,356.8M668.1,355.9L666.3,355.5M676.7,356.2L678.1,355.2M670.5,361.3L668.3,360.8M668.4,361.7L670.3,360.4M662.6,359.4L660.8,359.0M671.3,359.7L672.9,358.7M664.9,365.0L662.6,364.5M662.7,365.4L664.7,364.1M656.9,363.1L655.0,362.6M665.8,363.4L667.4,362.3M659.1,369.0L656.6,368.4M656.8,369.4L658.9,368.0M650.9,366.9L649.0,366.4M660.0,367.2L661.7,366.1M652.9,373.1L650.4,372.4M650.6,373.5L652.8,372.0M644.7,370.9L642.7,370.4M653.9,371.3L655.7,370.1M646.6,377.4L643.9,376.7M644.1,377.8L646.4,376.3M638.2,375.1L636.0,374.6M647.6,375.5L649.4,374.3M639.9,381.9L637.1,381.1M637.3,382.3L639.7,380.7M631.4,379.5L629.1,378.9M640.9,379.9L642.8,378.6M632.8,386.6L629.9,385.8M630.1,387.0L632.6,385.4M624.2,384.2L621.9,383.5M634.0,384.5L636.0,383.1M625.5,391.6L622.4,390.7M622.6,392.0L625.3,390.2M616.7,389.0L614.3,388.3M626.6,389.3L628.8,387.9M617.7,396.8L614.5,395.8M614.7,397.2L617.5,395.4M608.8,394.1L606.3,393.3M619.0,394.4L621.2,392.9M609.6,402.3L606.2,401.2M606.4,402.7L609.4,400.8M600.6,399.4L597.9,398.6M610.9,399.8L613.2,398.2M601.0,408.1L597.4,406.9M597.6,408.5L600.8,406.5M591.8,405.1L589.0,404.1M602.4,405.4L604.8,403.8M591.9,414.2L588.2,412.9M588.4,414.7L591.7,412.5M582.6,411.0L579.6,410.0M593.4,411.4L596.0,409.6M582.3,420.7L578.4,419.3M578.6,421.2L582.1,418.8M572.9,417.3L569.8,416.2M583.9,417.7L586.7,415.8M572.2,427.6L568.0,426.0M568.3,428.0L572.0,425.6M562.6,424.0L559.3,422.7M573.8,424.3L576.8,422.4M561.4,434.9L557.0,433.1M557.3,435.3L561.2,432.7M551.7,431.0L548.2,429.6M563.2,431.4L566.3,429.3M550.0,442.6L545.4,440.7M545.6,443.0L549.8,440.3M540.2,438.5L536.5,437.0M551.9,438.9L555.2,436.7M537.8,450.9L532.9,448.7M533.1,451.3L537.6,448.3M527.9,446.5L524.0,444.8M539.8,446.8L543.4,444.5M524.8,459.7L519.7,457.3M519.9,460.1L524.6,456.9M514.8,455.0L510.6,453.1M527.0,455.3L530.8,452.8M511.0,469.1L505.5,466.4M505.7,469.5L510.8,466.1M500.8,464.1L496.4,462.0M513.3,464.4L517.4,461.7M496.1,479.3L490.3,476.2M490.5,479.6L495.9,475.9M485.8,473.9L481.2,471.5M498.6,474.1L503.0,471.2M480.2,490.2L474.0,486.7M474.1,490.4L480.0,486.5M469.8,484.4L464.8,481.6M482.9,484.6L487.6,481.4M463.0,501.9L456.4,498.0M456.5,502.1L462.9,497.8M452.5,495.7L447.2,492.5M466.0,495.8L471.1,492.4M444.4,514.6L437.4,510.2M437.4,514.7L444.4,510.1M433.9,507.9L428.3,504.3M447.7,507.9L453.2,504.2M424.1,528.4L417.0,523.4M416.9,528.3L424.2,523.5M413.6,521.0L407.9,517.0M428.0,520.9L433.8,517.1M402.0,543.2L394.9,537.8M394.7,543.0L402.2,538.1M391.5,535.2L385.9,530.9M406.8,535.0L412.7,531.1M377.9,559.5L370.8,553.5M370.5,559.0L378.2,554.0M367.5,550.7L361.9,546.0M383.6,550.4L389.7,546.3M351.4,577.3L344.5,570.7M344.0,576.6L351.9,571.4M341.2,567.7L335.7,562.4M358.3,567.2L364.6,562.9M322.3,596.9L315.5,589.6M314.7,596.0L323.0,590.5M312.3,586.3L306.9,580.5M330.5,585.6L337.1,581.2M705.7,350.9L703.8,350.5M704.0,351.3L705.5,350.1M697.9,349.3L696.4,348.9M701.1,354.2L699.2,353.8M699.3,354.6L701.0,353.4M693.3,352.5L691.7,352.2M701.8,352.8L703.1,351.9M696.4,357.7L694.4,357.2M694.5,358.0L696.2,356.8M688.4,355.9L686.8,355.5M697.1,356.2L698.5,355.2M691.5,361.3L689.4,360.8M689.5,361.7L691.3,360.4M683.4,359.4L681.7,359.0M692.2,359.7L693.6,358.7M686.3,365.0L684.1,364.5M684.3,365.4L686.1,364.1M678.1,363.1L676.3,362.7M687.1,363.4L688.6,362.3M681.0,368.9L678.7,368.4M678.8,369.4L680.8,368.0M672.6,366.9L670.8,366.5M681.8,367.2L683.3,366.1M675.4,373.1L672.9,372.4M673.1,373.5L675.2,372.0M666.9,370.9L664.9,370.4M676.2,371.3L677.8,370.1M669.5,377.3L667.0,376.7M667.2,377.8L669.3,376.3M660.9,375.1L658.8,374.6M670.4,375.5L672.1,374.3M663.3,381.9L660.7,381.1M660.9,382.3L663.1,380.7M654.6,379.5L652.5,379.0M664.3,379.9L666.0,378.6M656.9,386.6L654.1,385.8M654.3,387.0L656.7,385.4M648.0,384.1L645.8,383.5M657.9,384.5L659.7,383.1M650.1,391.5L647.2,390.7M647.4,392.0L649.9,390.2M641.1,389.0L638.8,388.3M651.1,389.3L653.1,387.9M643.0,396.8L640.0,395.9M640.2,397.2L642.8,395.4M633.8,394.0L631.4,393.3M644.1,394.4L646.1,392.9M635.5,402.3L632.3,401.3M632.6,402.7L635.3,400.8M626.2,399.4L623.6,398.6M636.7,399.8L638.8,398.2M627.6,408.0L624.3,407.0M624.5,408.5L627.4,406.5M618.1,405.0L615.4,404.2M628.8,405.4L631.1,403.8M619.3,414.2L615.7,413.0M616.0,414.7L619.0,412.5M609.6,411.0L606.8,410.0M620.6,411.4L623.0,409.6M610.5,420.6L606.7,419.4M607.0,421.2L610.2,418.8M600.7,417.3L597.7,416.2M611.8,417.7L614.4,415.8M601.2,427.5L597.2,426.1M597.5,428.0L600.9,425.6M591.2,423.9L588.1,422.8M602.6,424.3L605.3,422.4M591.3,434.8L587.1,433.2M587.4,435.3L591.0,432.7M581.2,431.0L577.8,429.7M592.8,431.4L595.7,429.3M580.8,442.5L576.4,440.8M576.7,443.0L580.5,440.3M570.5,438.5L567.0,437.1M582.4,438.9L585.5,436.7M569.6,450.8L564.9,448.8M565.2,451.3L569.3,448.3M559.2,446.4L555.5,444.9M571.4,446.8L574.7,444.5M557.7,459.6L552.7,457.4M553.0,460.1L557.4,456.9M547.1,454.9L543.2,453.2M559.6,455.3L563.1,452.8M545.0,469.0L539.7,466.6M540.0,469.5L544.7,466.1M534.2,464.0L530.0,462.1M547.0,464.4L550.8,461.7M531.3,479.1L525.7,476.4M526.0,479.6L531.0,475.9M520.4,473.8L516.0,471.6M533.5,474.1L537.6,471.2M516.7,490.0L510.7,486.9M511.0,490.4L516.4,486.5M505.6,484.2L500.9,481.8M519.1,484.6L523.4,481.4M500.9,501.7L494.6,498.2M494.8,502.1L500.6,497.8M489.7,495.5L484.7,492.7M503.5,495.8L508.2,492.4M483.8,514.4L477.1,510.4M477.3,514.7L483.6,510.1M472.6,507.7L467.2,504.4M486.7,507.9L491.8,504.2M465.3,528.2L458.2,523.6M458.3,528.4L465.2,523.4M454.0,520.8L448.3,517.2M468.5,521.0L474.1,517.0M445.3,543.2L437.7,537.9M437.7,543.2L445.2,537.8M433.8,535.2L427.7,530.9M448.8,535.2L454.8,530.9M423.2,559.5L415.4,553.5M415.3,559.4L423.3,553.6M411.7,550.7L405.5,546.0M427.4,550.6L433.8,546.0M398.9,577.3L391.2,570.7M390.9,577.0L399.1,571.0M387.5,567.7L381.3,562.4M404.2,567.4L410.7,562.7M721.3,354.2L719.4,353.8M719.6,354.6L721.1,353.4M713.2,352.5L711.7,352.2M716.9,357.6L715.0,357.2M715.2,358.0L716.8,356.8M708.8,355.9L707.2,355.5M717.6,356.2L718.8,355.2M712.5,361.2L710.5,360.8M710.7,361.7L712.3,360.4M704.1,359.4L702.5,359.0M713.1,359.7L714.4,358.7M707.8,365.0L705.7,364.5M705.9,365.4L707.6,364.1M699.3,363.1L697.6,362.7M708.4,363.4L709.8,362.3M702.9,368.9L700.7,368.4M700.9,369.4L702.7,368.0M694.3,366.9L692.5,366.5M703.6,367.2L705.0,366.1M697.8,373.0L695.5,372.5M695.7,373.5L697.5,372.0M689.0,370.9L687.2,370.5M698.5,371.3L700.0,370.1M692.4,377.3L690.0,376.7M690.3,377.8L692.2,376.3M683.5,375.1L681.6,374.6M693.2,375.5L694.7,374.3M686.8,381.8L684.3,381.2M684.6,382.3L686.6,380.7M677.8,379.5L675.8,379.0M687.6,379.9L689.2,378.6M680.9,386.5L678.3,385.8M678.6,387.0L680.7,385.4M671.8,384.1L669.7,383.5M681.8,384.5L683.5,383.1M674.8,391.5L672.0,390.7M672.3,392.0L674.5,390.2M665.4,388.9L663.2,388.3M675.7,389.3L677.4,387.9M668.3,396.7L665.4,395.9M665.7,397.2L668.0,395.4M658.8,394.0L656.5,393.4M669.2,394.4L671.1,392.9M661.4,402.2L658.4,401.3M658.7,402.7L661.2,400.8M651.8,399.4L649.4,398.6M662.4,399.8L664.4,398.2M654.3,408.0L651.1,407.0M651.4,408.5L654.0,406.5M644.4,405.0L641.9,404.2M655.3,405.4L657.4,403.8M646.7,414.1L643.3,413.0M643.6,414.7L646.4,412.5M636.7,410.9L634.0,410.1M647.8,411.4L650.0,409.6M638.6,420.6L635.1,419.4M635.4,421.2L638.3,418.8M628.5,417.2L625.6,416.3M639.8,417.7L642.2,415.8M630.1,427.4L626.4,426.1M626.7,428.0L629.8,425.6M619.8,423.9L616.8,422.8M631.4,424.3L633.9,422.4M621.1,434.7L617.2,433.3M617.5,435.3L620.8,432.7M610.6,430.9L607.5,429.8M622.5,431.4L625.1,429.3M611.6,442.4L607.4,440.9M607.7,443.0L611.2,440.3M600.9,438.4L597.5,437.1M613.0,438.9L615.8,436.7M601.4,450.7L597.0,448.9M597.3,451.3L601.0,448.3M590.5,446.4L586.9,445.0M602.9,446.8L605.9,444.5M590.5,459.5L585.8,457.5M586.2,460.1L590.2,456.9M579.4,454.9L575.7,453.3M592.2,455.3L595.4,452.8M578.9,468.9L573.9,466.7M574.3,469.5L578.6,466.1M567.6,463.9L563.6,462.2M580.7,464.4L584.1,461.7M566.5,479.0L561.2,476.5M561.5,479.6L566.1,475.9M555.0,473.7L550.8,471.7M568.4,474.1L572.1,471.2M553.1,489.8L547.5,487.1M547.8,490.4L552.8,486.5M541.5,484.1L537.0,481.9M555.2,484.6L559.2,481.4M538.8,501.5L532.7,498.4M533.1,502.1L538.4,497.8M526.9,495.4L522.1,492.8M541.0,495.8L545.3,492.4M523.2,514.2L516.8,510.6M517.1,514.7L522.9,510.1M511.2,507.5L506.1,504.6M525.7,507.9L530.4,504.2M506.4,527.9L499.5,523.8M499.8,528.4L506.1,523.4M494.2,520.6L488.7,517.4M509.2,521.0L514.2,517.0M488.1,542.9L480.8,538.1M481.0,543.2L487.9,537.8M475.8,534.9L469.9,531.1M491.2,535.2L496.7,530.9M468.2,559.3L460.3,553.7M460.5,559.5L468.0,553.5M455.7,550.5L449.5,546.1M471.6,550.7L477.6,546.0M733.4,361.2L731.6,360.8M731.8,361.7L733.2,360.4M724.9,359.4L723.4,359.0M734.0,359.7L735.1,358.7M729.2,365.0L727.2,364.5M727.5,365.4L729.0,364.1M720.5,363.0L719.0,362.7M729.8,363.4L731.0,362.3M724.8,368.9L722.7,368.4M723.0,369.4L724.6,368.0M716.0,366.9L714.3,366.5M725.4,367.2L726.7,366.1M720.2,373.0L718.0,372.5M718.3,373.5L719.9,372.0M711.2,370.9L709.5,370.5M720.8,371.3L722.1,370.1M715.3,377.3L713.1,376.8M713.4,377.8L715.1,376.3M706.2,375.1L704.4,374.6M716.0,375.5L717.4,374.3M710.3,381.8L707.9,381.2M708.2,382.3L710.0,380.7M701.0,379.5L699.1,379.0M711.0,379.9L712.4,378.6M705.0,386.5L702.5,385.9M702.8,387.0L704.7,385.4M695.5,384.1L693.6,383.6M705.7,384.5L707.2,383.1M699.4,391.5L696.8,390.8M697.1,392.0L699.1,390.2M689.8,388.9L687.7,388.4M700.2,389.3L701.8,387.9M693.5,396.7L690.8,395.9M691.1,397.2L693.3,395.4M683.8,394.0L681.6,393.4M694.3,394.4L696.0,392.9M687.4,402.2L684.5,401.4M684.8,402.7L687.1,400.8M677.4,399.3L675.1,398.7M688.2,399.8L690.0,398.2M680.9,408.0L677.9,407.1M678.2,408.5L680.6,406.5M670.7,405.0L668.3,404.2M681.8,405.4L683.7,403.8M674.0,414.1L670.9,413.1M671.2,414.7L673.7,412.5M663.7,410.9L661.2,410.1M675.0,411.4L677.0,409.6M666.8,420.5L663.5,419.5M663.8,421.2L666.4,418.8M656.3,417.2L653.6,416.3M667.8,417.7L669.9,415.8M659.1,427.4L655.6,426.2M656.0,428.0L658.8,425.6M648.4,423.8L645.6,422.9M660.2,424.3L662.4,422.4M651.0,434.6L647.3,433.4M647.6,435.3L650.6,432.7M640.0,430.9L637.1,429.8M652.1,431.4L654.5,429.3M642.4,442.4L638.4,440.9M638.8,443.0L642.0,440.3M631.2,438.3L628.0,437.2M643.6,438.9L646.1,436.7M633.2,450.6L629.0,449.0M629.4,451.3L632.8,448.3M621.8,446.3L618.4,445.0M634.5,446.8L637.2,444.5M623.4,459.4L618.9,457.6M619.3,460.1L623.0,456.9M611.8,454.8L608.2,453.4M624.8,455.3L627.6,452.8M612.9,468.8L608.2,466.8M608.6,469.5L612.5,466.1M601.1,463.9L597.3,462.3M614.4,464.4L617.5,461.7M601.7,478.9L596.6,476.6M597.1,479.6L601.2,475.9M589.6,473.6L585.6,471.8M603.3,474.1L606.6,471.2M589.6,489.7L584.2,487.2M584.7,490.4L589.2,486.5M577.3,484.0L573.0,482.0M591.4,484.6L595.0,481.4M576.7,501.4L570.9,498.5M571.4,502.1L576.2,497.8M564.1,495.2L559.5,493.0M578.6,495.8L582.4,492.4M562.7,514.0L556.5,510.8M557.0,514.7L562.2,510.1M549.9,507.3L545.0,504.8M564.7,507.9L568.9,504.2M547.5,527.7L540.9,524.0M541.3,528.4L547.0,523.4M534.5,520.5L529.2,517.5M549.8,521.0L554.3,517.0M531.0,542.6L523.9,538.4M524.4,543.2L530.6,537.8M517.8,534.7L512.1,531.3M533.5,535.2L538.5,530.9M513.0,558.9L505.4,554.1M505.8,559.5L512.6,553.5M499.6,550.3L493.5,546.4M515.8,550.7L521.3,546.0M493.3,576.9L485.1,571.1M485.5,577.3L493.0,570.7M479.7,567.3L473.2,562.8M496.5,567.7L502.4,562.4M750.7,365.0L748.8,364.6M749.1,365.4L750.4,364.1M741.8,363.0L740.3,362.7M751.1,363.4L752.2,362.3M746.7,368.9L744.8,368.5M745.0,369.4L746.5,368.0M737.7,366.9L736.1,366.5M747.2,367.2L748.3,366.1M742.6,373.0L740.6,372.5M740.8,373.5L742.3,372.0M733.4,370.9L731.8,370.5M743.1,371.3L744.3,370.1M738.3,377.3L736.2,376.8M736.4,377.8L738.0,376.3M728.9,375.1L727.2,374.7M738.8,375.5L740.0,374.3M733.8,381.8L731.5,381.2M731.8,382.3L733.5,380.7M724.2,379.5L722.4,379.0M734.3,379.9L735.6,378.6M729.0,386.5L726.7,385.9M727.0,387.0L728.7,385.4M719.3,384.1L717.4,383.6M729.6,384.5L731.0,383.1M724.1,391.4L721.6,390.8M721.9,392.0L723.7,390.2M714.1,388.9L712.2,388.4M724.7,389.3L726.1,387.9M718.8,396.6L716.3,396.0M716.6,397.2L718.5,395.4M708.7,394.0L706.7,393.4M719.5,394.4L721.0,392.9M713.3,402.1L710.6,401.4M711.0,402.7L713.0,400.8M703.0,399.3L700.9,398.7M714.0,399.8L715.6,398.2M707.5,407.9L704.7,407.1M705.1,408.5L707.2,406.5M697.0,404.9L694.8,404.3M708.3,405.4L709.9,403.8M701.4,414.0L698.4,413.1M698.8,414.7L701.0,412.5M690.7,410.9L688.3,410.2M702.2,411.4L704.0,409.6M695.0,420.5L691.8,419.5M692.2,421.2L694.6,418.8M684.0,417.1L681.5,416.4M695.8,417.7L697.6,415.8M688.1,427.3L684.8,426.3M685.2,428.0L687.7,425.6M677.0,423.8L674.3,422.9M689.0,424.3L691.0,422.4M680.9,434.6L677.3,433.4M677.8,435.3L680.4,432.7M669.5,430.8L666.7,429.9M681.8,431.4L683.9,429.3M673.2,442.3L669.4,441.0M669.9,443.0L672.7,440.3M661.5,438.3L658.5,437.3M674.1,438.9L676.4,436.7M665.0,450.5L661.0,449.1M661.5,451.3L664.5,448.3M653.1,446.2L649.9,445.1M666.0,446.8L668.4,444.5M656.2,459.3L652.0,457.7M652.5,460.1L655.7,456.9M644.1,454.7L640.7,453.4M657.3,455.3L659.9,452.8M646.9,468.7L642.4,466.9M642.9,469.5L646.4,466.1M634.5,463.8L630.9,462.4M648.1,464.4L650.8,461.7M636.9,478.7L632.1,476.8M632.6,479.6L636.3,475.9M624.2,473.5L620.4,471.9M638.2,474.1L641.1,471.2M626.1,489.6L621.0,487.3M621.6,490.4L625.6,486.5M613.2,483.9L609.1,482.1M627.5,484.6L630.7,481.4M614.6,501.2L609.1,498.7M609.7,502.1L614.0,497.8M601.3,495.1L597.0,493.1M616.1,495.8L619.5,492.4M602.1,513.8L596.2,511.0M596.8,514.7L601.5,510.1M588.6,507.2L583.9,504.9M603.7,507.9L607.5,504.2M588.5,527.5L582.2,524.2M582.9,528.4L587.9,523.4M574.7,520.3L569.7,517.7M590.4,521.0L594.4,517.0M573.8,542.4L567.1,538.6M567.7,543.2L573.2,537.8M559.8,534.6L554.3,531.5M575.9,535.2L580.3,530.9M557.8,558.7L550.5,554.3M551.1,559.5L557.2,553.5M543.4,550.1L537.6,546.6M560.1,550.7L564.9,546.0M540.2,576.5L532.4,571.5M533.0,577.3L539.6,570.7M525.6,567.1L519.3,563.0M542.8,567.7L548.1,562.4M765.0,373.0L763.1,372.5M763.4,373.5L764.7,372.0M755.6,370.9L754.0,370.5M765.4,371.3L766.4,370.1M761.2,377.3L759.2,376.8M759.5,377.8L760.9,376.3M751.6,375.0L750.0,374.7M761.6,375.5L762.7,374.3M757.2,381.7L755.2,381.3M755.5,382.3L756.9,380.7M747.4,379.4L745.8,379.0M757.7,379.9L758.8,378.6M753.1,386.5L750.9,385.9M751.2,387.0L752.7,385.4M743.1,384.0L741.3,383.6M753.5,384.5L754.7,383.1M748.7,391.4L746.4,390.8M746.8,392.0L748.4,390.2M738.5,388.9L736.7,388.4M749.2,389.3L750.4,387.9M744.1,396.6L741.7,396.0M742.1,397.2L743.7,395.4M733.7,393.9L731.8,393.4M744.6,394.4L745.9,392.9M739.3,402.1L736.7,401.4M737.1,402.7L738.9,400.8M728.7,399.3L726.6,398.7M739.8,399.8L741.2,398.2M734.2,407.9L731.5,407.1M731.9,408.5L733.8,406.5M723.3,404.9L721.2,404.3M734.7,405.4L736.2,403.8M728.8,414.0L726.0,413.2M726.4,414.7L728.4,412.5M717.7,410.8L715.5,410.2M729.4,411.4L730.9,409.6M723.1,420.4L720.2,419.6M720.6,421.2L722.7,418.8M711.8,417.1L709.4,416.4M723.7,417.7L725.4,415.8M717.1,427.3L714.0,426.3M714.4,428.0L716.6,425.6M705.6,423.7L703.0,423.0M717.8,424.3L719.5,422.4M710.7,434.5L707.4,433.5M707.9,435.3L710.2,432.7M698.9,430.8L696.3,429.9M711.4,431.4L713.3,429.3M704.0,442.2L700.4,441.1M701.0,443.0L703.4,440.3M691.9,438.2L689.1,437.3M704.7,438.9L706.7,436.7M696.8,450.5L693.0,449.2M693.6,451.3L696.2,448.3M684.4,446.2L681.4,445.1M697.5,446.8L699.7,444.5M689.1,459.2L685.1,457.8M685.7,460.1L688.5,456.9M676.4,454.7L673.2,453.5M689.9,455.3L692.2,452.8M680.9,468.6L676.6,467.0M677.2,469.5L680.3,466.1M667.9,463.7L664.5,462.4M681.8,464.4L684.2,461.7M672.1,478.6L667.5,476.9M668.2,479.6L671.4,475.9M658.8,473.4L655.2,472.0M673.0,474.1L675.7,471.2M662.6,489.5L657.8,487.4M658.4,490.4L662.0,486.5M649.1,483.8L645.2,482.2M663.7,484.6L666.5,481.4M652.5,501.1L647.3,498.8M648.0,502.1L651.8,497.8M638.6,495.0L634.4,493.2M653.6,495.8L656.7,492.4M641.5,513.7L635.9,511.1M636.6,514.7L640.8,510.1M627.2,507.1L622.8,505.0M642.7,507.9L646.0,504.2M629.6,527.3L623.6,524.4M624.4,528.4L628.8,523.4M615.0,520.2L610.2,517.8M631.0,521.0L634.6,517.0M616.7,542.2L610.2,538.8M611.0,543.2L615.9,537.8M601.7,534.4L596.5,531.7M618.2,535.2L622.1,530.9M602.6,558.4L595.6,554.6M596.4,559.5L601.8,553.5M587.3,549.9L581.7,546.8M604.3,550.7L608.6,546.0M587.2,576.3L579.6,571.7M580.5,577.3L586.3,570.7M571.5,566.9L565.4,563.2M589.1,567.7L593.8,562.4M570.2,595.9L562.0,590.6M562.9,596.9L569.4,589.6M554.1,585.5L547.6,581.3M572.4,586.3L577.6,580.5M784.2,377.2L782.3,376.8M782.6,377.8L783.8,376.3M774.3,375.0L772.8,374.7M784.4,375.5L785.4,374.3M780.7,381.7L778.8,381.3M779.1,382.3L780.4,380.7M770.7,379.4L769.1,379.1M781.0,379.9L782.0,378.6M777.1,386.4L775.1,386.0M775.5,387.0L776.8,385.4M766.9,384.0L765.2,383.6M777.4,384.5L778.5,383.1M773.4,391.4L771.2,390.9M771.6,392.0L773.0,390.2M762.9,388.8L761.1,388.4M773.7,389.3L774.8,387.9M769.4,396.6L767.1,396.0M767.6,397.2L769.0,395.4M758.7,393.9L756.9,393.5M769.7,394.4L770.9,392.9M765.2,402.1L762.8,401.5M763.3,402.7L764.8,400.8M754.3,399.2L752.4,398.8M765.6,399.8L766.8,398.2M760.8,407.8L758.3,407.2M758.8,408.5L760.4,406.5M749.7,404.9L747.6,404.3M761.2,405.4L762.5,403.8M756.2,414.0L753.5,413.2M754.0,414.7L755.7,412.5M744.8,410.8L742.6,410.2M756.6,411.4L757.9,409.6M751.3,420.4L748.5,419.6M749.0,421.2L750.8,418.8M739.6,417.1L737.4,416.4M751.7,417.7L753.1,415.8M746.1,427.2L743.1,426.4M743.7,428.0L745.6,425.6M734.2,423.7L731.8,423.0M746.5,424.3L748.1,422.4M740.6,434.5L737.5,433.5M738.0,435.3L740.1,432.7M728.4,430.7L725.9,430.0M741.1,431.4L742.7,429.3M734.8,442.2L731.4,441.1M732.0,443.0L734.2,440.3M722.2,438.2L719.6,437.3M735.3,438.9L737.0,436.7M728.6,450.4L725.0,449.2M725.6,451.3L727.9,448.3M715.7,446.1L712.9,445.2M729.1,446.8L730.9,444.5M721.9,459.2L718.2,457.8M718.8,460.1L721.3,456.9M708.8,454.6L705.8,453.6M722.5,455.3L724.5,452.8M714.9,468.5L710.8,467.1M711.5,469.5L714.2,466.1M701.4,463.6L698.1,462.5M715.5,464.4L717.6,461.7M707.3,478.6L703.0,476.9M703.7,479.6L706.5,475.9M693.4,473.3L690.0,472.0M707.9,474.1L710.2,471.2M699.1,489.4L694.5,487.5M695.3,490.4L698.4,486.5M684.9,483.7L681.2,482.3M699.8,484.6L702.3,481.4M690.4,501.0L685.4,498.9M686.3,502.1L689.5,497.8M675.8,494.9L671.8,493.3M691.1,495.8L693.8,492.4M680.9,513.6L675.6,511.2M676.5,514.7L680.0,510.1M665.9,507.0L661.7,505.1M681.8,507.9L684.6,504.2M670.7,527.2L665.0,524.6M665.9,528.4L669.7,523.4M655.2,520.1L650.7,517.9M671.6,521.0L674.7,517.0M659.5,542.0L653.4,539.0M654.4,543.2L658.6,537.8M643.7,534.3L638.7,531.8M660.6,535.2L663.9,530.9M647.4,558.2L640.7,554.8M641.8,559.5L646.4,553.5M631.1,549.7L625.8,546.9M648.6,550.7L652.2,546.0M634.1,576.0L626.9,572.0M628.0,577.3L633.0,570.7M617.3,566.7L611.5,563.4M635.4,567.7L639.5,562.4M619.5,595.6L611.6,590.9M612.8,596.9L618.4,589.6M602.2,585.3L596.0,581.5M621.0,586.3L625.5,580.5M603.4,617.3L594.8,611.8M596.0,618.5L602.2,610.5M585.6,605.8L578.8,601.4M605.0,606.8L610.0,600.4M804.2,381.7L802.4,381.3M802.8,382.3L803.8,380.7M793.9,379.4L792.4,379.1M804.4,379.9L805.2,378.6M801.2,386.4L799.3,386.0M799.7,387.0L800.8,385.4M790.6,384.0L789.1,383.6M801.3,384.5L802.2,383.1M798.0,391.4L796.0,390.9M796.4,392.0L797.6,390.2M787.3,388.8L785.6,388.4M798.2,389.3L799.1,387.9M794.7,396.6L792.6,396.0M793.0,397.2L794.2,395.4M783.7,393.9L782.0,393.5M794.9,394.4L795.8,392.9M791.2,402.0L788.9,401.5M789.4,402.7L790.7,400.8M779.9,399.2L778.1,398.8M791.4,399.8L792.4,398.2M787.5,407.8L785.1,407.2M785.6,408.5L787.0,406.5M776.0,404.8L774.1,404.4M787.7,405.4L788.8,403.8M783.6,413.9L781.1,413.2M781.6,414.7L783.1,412.5M771.8,410.8L769.8,410.2M783.8,411.4L784.9,409.6M779.5,420.4L776.8,419.6M777.4,421.2L778.9,418.8M767.4,417.0L765.3,416.5M779.7,417.7L780.9,415.8M775.1,427.2L772.3,426.4M772.9,428.0L774.5,425.6M762.8,423.7L760.5,423.0M775.3,424.3L776.6,422.4M770.5,434.4L767.5,433.6M768.2,435.3L769.9,432.7M757.8,430.7L755.4,430.0M770.7,431.4L772.1,429.3M765.6,442.1L762.4,441.2M763.1,443.0L764.9,440.3M752.6,438.2L750.1,437.4M765.8,438.9L767.3,436.7M760.4,450.3L757.0,449.3M757.7,451.3L759.7,448.3M747.0,446.1L744.4,445.2M760.6,446.8L762.2,444.5M754.8,459.1L751.2,457.9M752.0,460.1L754.0,456.9M741.1,454.6L738.3,453.6M755.1,455.3L756.7,452.8M748.9,468.5L745.0,467.1M745.8,469.5L748.1,466.1M734.8,463.6L731.7,462.5M749.1,464.4L750.9,461.7M742.5,478.5L738.4,477.0M739.3,479.6L741.6,475.9M728.0,473.3L724.8,472.1M742.8,474.1L744.7,471.2M735.7,489.3L731.3,487.6M732.2,490.4L734.7,486.5M720.8,483.7L717.3,482.3M736.0,484.6L738.0,481.4M728.3,500.9L723.6,499.0M724.6,502.1L727.3,497.8M713.0,494.8L709.2,493.4M728.7,495.8L730.9,492.4M720.3,513.5L715.3,511.3M716.3,514.7L719.3,510.1M704.6,506.9L700.5,505.2M720.8,507.9L723.2,504.2M711.7,527.1L706.3,524.7M707.4,528.4L710.6,523.4M695.5,520.0L691.1,518.0M712.2,521.0L714.8,517.0M702.4,541.9L696.5,539.2M697.7,543.2L701.2,537.8M685.7,534.1L680.9,532.0M702.9,535.2L705.8,530.9M692.2,558.1L685.8,554.9M687.1,559.5L691.0,553.5M674.9,549.6L669.8,547.1M692.8,550.7L695.9,546.0M681.1,575.8L674.1,572.2M675.5,577.3L679.7,570.7M663.2,566.5L657.7,563.6M681.7,567.7L685.2,562.4M668.8,595.4L661.3,591.1M662.7,596.9L667.4,589.6M650.4,585.1L644.3,581.7M669.6,586.3L673.4,580.5M655.3,617.0L647.0,612.1M648.5,618.5L653.8,610.5M636.2,605.6L629.6,601.6M656.2,606.8L660.4,600.4M825.3,386.4L823.4,386.0M823.9,387.0L824.8,385.4M814.4,384.0L813.0,383.7M825.3,384.5L826.0,383.1M822.7,391.3L820.8,390.9M821.3,392.0L822.2,390.2M811.6,388.8L810.1,388.5M822.7,389.3L823.4,387.9M820.0,396.5L818.0,396.1M818.5,397.2L819.5,395.4M808.7,393.9L807.0,393.5M820.0,394.4L820.8,392.9M817.2,402.0L815.0,401.5M815.6,402.7L816.6,400.8M805.6,399.2L803.9,398.8M817.1,399.8L818.0,398.2M814.2,407.8L811.9,407.2M812.5,408.5L813.6,406.5M802.3,404.8L800.5,404.4M814.1,405.4L815.0,403.8M811.0,413.9L808.6,413.3M809.2,414.7L810.4,412.5M798.9,410.8L796.9,410.3M811.0,411.4L811.9,409.6M807.7,420.3L805.2,419.7M805.8,421.2L807.0,418.8M795.2,417.0L793.2,416.5M807.7,417.7L808.6,415.8M804.1,427.2L801.5,426.4M802.2,428.0L803.5,425.6M791.4,423.6L789.2,423.1M804.1,424.3L805.2,422.4M800.4,434.4L797.6,433.6M798.3,435.3L799.7,432.7M787.3,430.7L785.0,430.0M800.4,431.4L801.5,429.3M796.4,442.1L793.4,441.2M794.2,443.0L795.7,440.3M783.0,438.1L780.6,437.4M796.4,438.9L797.6,436.7M792.2,450.3L789.0,449.3M789.8,451.3L791.4,448.3M778.4,446.1L775.8,445.3M792.2,446.8L793.4,444.5M787.7,459.0L784.3,458.0M785.1,460.1L786.8,456.9M773.5,454.5L770.8,453.6M787.7,455.3L789.0,452.8M782.9,468.4L779.2,467.2M780.2,469.5L781.9,466.1M768.3,463.6L765.3,462.6M782.8,464.4L784.3,461.7M777.7,478.4L773.8,477.1M774.8,479.6L776.7,475.9M762.7,473.2L759.5,472.1M777.7,474.1L779.2,471.2M772.2,489.2L768.0,487.7M769.1,490.4L771.1,486.5M756.7,483.6L753.3,482.4M772.2,484.6L773.8,481.4M766.2,500.8L761.7,499.1M762.9,502.1L765.1,497.8M750.2,494.8L746.6,493.4M766.2,495.8L768.0,492.4M759.8,513.4L755.0,511.4M756.2,514.7L758.6,510.1M743.3,506.8L739.4,505.3M759.8,507.9L761.7,504.2M752.8,527.0L747.6,524.8M748.9,528.4L751.6,523.4M735.8,519.9L731.6,518.1M752.8,521.0L754.9,517.0M745.3,541.8L739.6,539.3M741.0,543.2L743.9,537.8M727.6,534.0L723.1,532.1M745.3,535.2L747.6,530.9M737.0,557.9L730.9,555.1M732.4,559.5L735.6,553.5M718.8,549.5L713.9,547.2M737.0,550.7L739.6,546.0M728.0,575.6L721.4,572.4M723.0,577.3L726.4,570.7M709.1,566.4L703.8,563.7M728.1,567.7L730.8,562.4M718.1,595.1L710.8,591.4M712.6,596.9L716.4,589.6M698.5,584.9L692.7,581.9M718.2,586.3L721.2,580.5M707.2,616.7L699.2,612.3M701.1,618.5L705.3,610.5M686.8,605.4L680.4,601.8M707.3,606.8L710.7,600.4M695.0,640.8L686.3,635.6M688.3,642.7L693.0,633.7M673.8,628.1L666.9,623.9M695.2,629.6L699.0,622.4M847.4,391.3L845.5,390.9M846.1,392.0L846.8,390.2M836.0,388.8L834.5,388.5M847.2,389.3L847.8,387.9M845.3,396.5L843.4,396.1M844.0,397.2L844.7,395.4M833.7,393.9L832.1,393.5M845.1,394.4L845.7,392.9M843.1,402.0L841.1,401.5M841.7,402.7L842.5,400.8M831.2,399.2L829.6,398.8M842.9,399.8L843.6,398.2M840.9,407.8L838.7,407.3M839.3,408.5L840.2,406.5M828.6,404.8L826.9,404.4M840.6,405.4L841.3,403.8M838.4,413.9L836.1,413.3M836.8,414.7L837.7,412.5M825.9,410.7L824.1,410.3M838.2,411.4L838.9,409.6M835.9,420.3L833.5,419.7M834.2,421.2L835.1,418.8M823.0,417.0L821.1,416.5M835.6,417.7L836.4,415.8M833.2,427.1L830.6,426.5M831.4,428.0L832.4,425.6M820.0,423.6L817.9,423.1M832.9,424.3L833.7,422.4M830.3,434.4L827.6,433.6M828.4,435.3L829.5,432.7M816.8,430.6L814.6,430.0M830.0,431.4L830.9,429.3M827.3,442.1L824.4,441.2M825.3,443.0L826.4,440.3M813.4,438.1L811.0,437.4M827.0,438.9L827.9,436.7M824.0,450.3L821.0,449.4M821.9,451.3L823.1,448.3M809.7,446.0L807.3,445.3M823.7,446.8L824.7,444.5M820.6,459.0L817.3,458.0M818.3,460.1L819.6,456.9M805.8,454.5L803.2,453.7M820.2,455.3L821.3,452.8M816.9,468.3L813.4,467.2M814.5,469.5L815.8,466.1M801.7,463.5L798.9,462.6M816.5,464.4L817.6,461.7M813.0,478.4L809.2,477.1M810.3,479.6L811.8,475.9M797.3,473.2L794.3,472.2M812.6,474.1L813.8,471.2M808.7,489.1L804.7,487.8M805.9,490.4L807.5,486.5M792.6,483.6L789.4,482.4M808.3,484.6L809.6,481.4M804.2,500.7L799.9,499.2M801.2,502.1L802.9,497.8M787.5,494.7L784.0,493.5M803.7,495.8L805.1,492.4M799.3,513.3L794.6,511.5M796.0,514.7L797.9,510.1M782.0,506.8L778.3,505.4M798.8,507.9L800.3,504.2M793.9,526.9L788.9,524.9M790.4,528.4L792.5,523.4M776.1,519.8L772.1,518.2M793.4,521.0L795.1,517.0M788.2,541.6L782.7,539.4M784.3,543.2L786.6,537.8M769.6,533.9L765.3,532.1M787.6,535.2L789.4,530.9M781.9,557.8L776.0,555.2M777.7,559.5L780.1,553.5M762.6,549.4L757.9,547.3M781.3,550.7L783.2,546.0M775.0,575.5L768.6,572.5M770.4,577.3L773.1,570.7M755.0,566.2L749.9,563.9M774.4,567.7L776.5,562.4M767.4,595.0L760.4,591.5M762.4,596.9L765.4,589.6M746.6,584.8L741.0,582.0M766.8,586.3L769.1,580.5M759.1,616.5L751.4,612.5M753.6,618.5L756.9,610.5M737.4,605.2L731.3,602.0M758.4,606.8L761.0,600.4M749.8,640.5L741.3,635.8M743.7,642.7L747.4,633.7M727.2,627.9L720.4,624.1M749.1,629.6L752.0,622.4M870.6,396.5L868.8,396.1M869.4,397.2L870.0,395.4M858.7,393.9L857.2,393.5M870.2,394.4L870.7,392.9M869.1,402.0L867.2,401.5M867.9,402.7L868.4,400.8M856.9,399.2L855.3,398.8M868.7,399.8L869.2,398.2M867.5,407.8L865.5,407.3M866.2,408.5L866.8,406.5M855.0,404.8L853.3,404.4M867.1,405.4L867.6,403.8M865.9,413.9L863.7,413.3M864.5,414.7L865.1,412.5M853.0,410.7L851.2,410.3M865.4,411.4L865.9,409.6M864.1,420.3L861.8,419.7M862.6,421.2L863.3,418.8M850.9,417.0L849.0,416.5M863.6,417.7L864.1,415.8M862.2,427.1L859.8,426.5M860.6,428.0L861.3,425.6M848.6,423.6L846.7,423.1M861.7,424.3L862.3,422.4M860.2,434.3L857.6,433.7M858.6,435.3L859.3,432.7M846.3,430.6L844.2,430.1M859.7,431.4L860.3,429.3M858.1,442.0L855.3,441.3M856.3,443.0L857.1,440.3M843.7,438.1L841.5,437.5M857.5,438.9L858.2,436.7M855.9,450.2L852.9,449.4M854.0,451.3L854.8,448.3M841.1,446.0L838.7,445.3M855.2,446.8L855.9,444.5M853.5,459.0L850.3,458.0M851.5,460.1L852.4,456.9M838.2,454.5L835.7,453.7M852.8,455.3L853.5,452.8M850.9,468.3L847.6,467.3M848.8,469.5L849.7,466.1M835.2,463.5L832.5,462.7M850.2,464.4L851.0,461.7M848.2,478.3L844.6,477.2M845.9,479.6L846.9,475.9M832.0,473.1L829.1,472.2M847.4,474.1L848.3,471.2M845.3,489.1L841.4,487.8M842.8,490.4L843.9,486.5M828.5,483.5L825.4,482.5M844.5,484.6L845.4,481.4M842.1,500.7L838.0,499.2M839.5,502.1L840.7,497.8M824.7,494.7L821.4,493.5M841.3,495.8L842.2,492.4M838.7,513.2L834.3,511.6M835.8,514.7L837.2,510.1M820.7,506.7L817.1,505.4M837.8,507.9L838.8,504.2M835.1,526.8L830.2,525.0M831.9,528.4L833.4,523.4M816.4,519.7L812.5,518.3M834.0,521.0L835.2,517.0M831.1,541.6L825.8,539.5M827.7,543.2L829.2,537.8M811.7,533.9L807.5,532.2M830.0,535.2L831.2,530.9M826.7,557.7L821.0,555.3M823.0,559.5L824.7,553.5M806.5,549.3L802.0,547.4M825.5,550.7L826.9,546.0M822.0,575.4L815.8,572.6M817.9,577.3L819.8,570.7M800.9,566.1L795.9,564.0M820.7,567.7L822.2,562.4M816.8,594.8L810.0,591.7M812.3,596.9L814.4,589.6M794.8,584.7L789.3,582.1M815.4,586.3L817.0,580.5M811.0,616.4L803.5,612.7M806.1,618.5L808.4,610.5M788.1,605.1L782.0,602.1M809.5,606.8L811.3,600.4M804.7,640.3L796.4,636.0M799.2,642.7L801.8,633.7M780.6,627.8L774.0,624.3M803.0,629.6L805.0,622.4M896.0,396.5L894.1,396.1M894.9,397.2L895.2,395.4M883.7,393.8L882.2,393.5M895.4,394.4L895.6,392.9M895.1,402.0L893.2,401.5M894.0,402.7L894.3,400.8M882.6,399.2L881.0,398.8M894.5,399.8L894.8,398.2M894.2,407.7L892.2,407.3M893.1,408.5L893.4,406.5M881.3,404.8L879.7,404.4M893.6,405.4L893.8,403.8M893.3,413.8L891.2,413.3M892.1,414.7L892.4,412.5M880.1,410.7L878.3,410.3M892.6,411.4L892.9,409.6M892.3,420.3L890.0,419.7M891.0,421.2L891.4,418.8M878.7,417.0L876.9,416.5M891.6,417.7L891.9,415.8M891.3,427.1L888.9,426.5M889.9,428.0L890.3,425.6M877.3,423.6L875.3,423.1M890.5,424.3L890.8,422.4M890.2,434.3L887.6,433.7M888.7,435.3L889.1,432.7M875.8,430.6L873.7,430.1M889.3,431.4L889.7,429.3M889.0,442.0L886.3,441.3M887.4,443.0L887.9,440.3M874.1,438.1L872.0,437.5M888.1,438.9L888.5,436.7M887.8,450.2L884.9,449.4M886.1,451.3L886.5,448.3M872.4,446.0L870.1,445.3M886.8,446.8L887.2,444.5M886.4,458.9L883.3,458.1M884.6,460.1L885.1,456.9M870.6,454.4L868.2,453.7M885.4,455.3L885.8,452.8M885.0,468.3L881.7,467.3M883.1,469.5L883.6,466.1M868.7,463.5L866.1,462.7M883.9,464.4L884.4,461.7M883.5,478.3L880.0,477.2M881.4,479.6L882.0,475.9M866.6,473.1L863.8,472.3M882.3,474.1L882.8,471.2M881.9,489.0L878.1,487.8M879.7,490.4L880.3,486.5M864.4,483.5L861.4,482.5M880.6,484.6L881.1,481.4M880.1,500.6L876.1,499.3M877.8,502.1L878.4,497.8M862.0,494.6L858.8,493.6M878.8,495.8L879.3,492.4M878.3,513.2L873.9,511.6M875.7,514.7L876.4,510.1M859.5,506.7L856.0,505.5M876.8,507.9L877.4,504.2M876.2,526.7L871.5,525.0M873.4,528.4L874.3,523.4M856.7,519.7L852.9,518.3M874.7,521.0L875.3,517.0M874.0,541.5L868.9,539.5M871.0,543.2L871.9,537.8M853.7,533.8L849.6,532.3M872.3,535.2L873.0,530.9M871.6,557.6L866.0,555.4M868.4,559.5L869.3,553.5M850.4,549.2L846.0,547.4M869.8,550.7L870.6,546.0M869.0,575.3L862.9,572.7M865.4,577.3L866.5,570.7M846.9,566.1L842.0,564.0M867.0,567.7L867.9,562.4M866.2,594.7L859.5,591.8M862.2,596.9L863.4,589.6M843.0,584.6L837.6,582.2M864.0,586.3L864.9,580.5M863.0,616.2L855.6,612.8M858.7,618.5L860.0,610.5M838.7,605.0L832.8,602.2M860.6,606.8L861.7,600.4M859.6,640.2L851.4,636.2M854.7,642.7L856.2,633.7M834.0,627.6L827.5,624.4M856.9,629.6L858.0,622.4M917.0,541.4L911.9,539.6M914.3,543.2L914.6,537.8M895.8,533.8L891.7,532.3M914.7,535.2L914.9,530.9M916.6,557.6L911.0,555.4M913.7,559.5L913.9,553.5M894.4,549.2L889.9,547.5M914.0,550.7L914.2,546.0M916.1,575.2L910.0,572.8M912.9,577.3L913.2,570.7M892.9,566.0L888.0,564.1M913.3,567.7L913.6,562.4M915.6,594.6L908.9,591.9M912.1,596.9L912.4,589.6M891.2,584.5L885.9,582.3M912.6,586.3L912.8,580.5M915.1,616.1L907.7,612.9M911.2,618.5L911.6,610.5M889.4,604.9L883.5,602.3M911.7,606.8L912.0,600.4M914.5,640.1L906.3,636.3M910.2,642.7L910.6,633.7M887.5,627.5L880.9,624.5M910.8,629.6L911.1,622.4M913.9,666.8L904.8,662.4M909.1,669.6L909.5,659.5M885.3,652.8L878.0,649.2M909.7,655.0L910.1,647.0"/>
<path fill="none" stroke-width="1.5" d="M37.7,669.6L35.6,659.5M32.1,667.0L41.2,662.2M34.7,655.0L33.1,647.0M58.5,652.9L65.8,649.1M-18.6,700.0L-19.6,688.6M-24.2,697.0L-14.0,691.6M-20.0,683.6L-20.7,674.4M5.6,681.2L13.7,676.8M96.5,669.6L93.2,659.5M90.2,667.2L99.5,662.0M91.7,655.0L89.1,647.0M115.0,653.1L122.4,648.9M43.9,700.0L41.6,688.6M37.6,697.2L47.8,691.4M40.5,683.6L38.7,674.4M65.5,681.3L73.6,676.7M-15.8,734.5L-16.9,721.5M-22.1,731.3L-10.7,724.7M-17.4,715.8L-18.2,705.4M9.6,713.2L18.7,708.0M198.7,642.7L193.6,633.7M191.7,640.9L200.5,635.5M191.3,629.6L187.2,622.4M212.4,628.2L219.5,623.9M155.3,669.6L150.8,659.5M148.3,667.5L157.8,661.7M148.8,655.0L145.1,647.0M171.4,653.3L179.0,648.7M106.4,700.0L102.7,688.6M99.4,697.5L109.7,691.2M101.0,683.6L98.1,674.4M125.4,681.5L133.6,676.5M50.9,734.5L48.2,721.5M43.9,731.5L55.3,724.5M47.1,715.8L45.0,705.4M73.4,713.4L82.5,707.8M290.0,618.5L283.5,610.5M282.4,617.4L291.1,611.7M280.5,606.8L275.3,600.4M299.8,605.9L306.7,601.3M254.2,642.7L248.0,633.7M246.5,641.2L255.6,635.1M245.2,629.6L240.2,622.4M265.8,628.4L273.0,623.6M214.1,669.6L208.3,659.5M206.4,667.8L216.1,661.4M205.8,655.0L201.2,647.0M227.8,653.6L235.6,648.4M168.9,700.0L163.8,688.6M161.1,697.8L171.6,690.8M161.5,683.6L157.4,674.4M185.3,681.8L193.6,676.2M117.6,734.5L113.4,721.5M109.8,731.8L121.2,724.2M111.5,715.8L108.1,705.4M137.2,713.7L146.3,707.6M372.2,596.9L364.5,589.6M364.1,596.3L372.6,590.2M360.9,586.3L354.8,580.5M378.6,585.9L385.4,580.9M342.6,618.5L335.0,610.5M334.3,617.7L343.3,611.3M331.6,606.8L325.6,600.4M350.4,606.2L357.5,601.0M309.7,642.7L302.4,633.7M301.3,641.6L310.7,634.8M299.1,629.6L293.2,622.4M319.1,628.7L326.6,623.3M272.9,669.6L265.9,659.5M264.4,668.2L274.4,661.0M262.8,655.0L257.2,647.0M284.2,653.9L292.2,648.1M231.4,700.0L224.9,688.6M222.8,698.2L233.5,690.5M222.0,683.6L216.8,674.4M245.1,682.1L253.7,675.9M446.3,577.2L437.9,570.8M438.0,577.3L446.3,570.7M433.8,567.6L427.1,562.5M450.1,567.7L456.8,562.4M422.0,596.9L413.5,589.6M413.4,596.7L422.2,589.8M409.5,586.3L402.7,580.5M426.7,586.2L433.8,580.6M395.1,618.5L386.6,610.5M386.3,618.2L395.5,610.9M382.7,606.8L375.9,600.4M401.0,606.5L408.3,600.7M365.2,642.7L356.8,633.7M356.1,642.0L365.8,634.3M353.0,629.6L346.2,622.4M372.5,629.1L380.2,623.0M331.7,669.6L323.4,659.5M322.4,668.6L332.7,660.5M319.8,655.0L313.2,647.0M340.7,654.2L348.8,647.8M293.9,700.0L286.0,688.6M284.5,698.6L295.4,690.0M282.5,683.6L276.2,674.4M305.0,682.5L313.7,675.5M471.6,596.6L462.9,589.9M463.1,596.9L471.4,589.6M457.9,586.1L450.9,580.7M475.2,586.3L481.8,580.5M447.6,618.5L438.3,610.6M438.3,618.5L447.5,610.5M433.8,606.8L426.3,600.5M451.7,606.8L459.1,600.4M420.7,642.7L411.2,633.7M411.0,642.5L420.8,633.9M406.9,629.6L399.2,622.4M425.8,629.5L433.7,622.6M390.5,669.6L381.0,659.5M380.5,669.1L390.9,660.0M376.8,655.0L369.2,647.0M397.1,654.6L405.4,647.4M520.9,596.2L512.4,590.3M513.0,596.9L520.4,589.6M506.0,585.8L499.2,581.0M523.8,586.3L529.7,580.5M499.5,618.0L490.4,611.0M490.9,618.5L499.1,610.5M484.4,606.4L477.1,600.8M502.8,606.8L509.4,600.4M475.8,642.3L466.0,634.0M466.3,642.7L475.4,633.7M460.4,629.3L452.6,622.7M479.6,629.6L486.9,622.4M551.4,617.6L542.6,611.4M543.4,618.5L550.6,610.5M535.0,606.1L527.9,601.1M553.9,606.8L559.7,600.4M530.6,641.8L521.0,634.5M521.8,642.7L529.8,633.7M513.8,629.0L506.1,623.1M533.5,629.6L539.9,622.4M507.3,669.0L496.9,660.2M497.6,669.6L506.6,659.5M490.2,654.5L481.9,647.5M510.7,655.0L517.9,647.0M585.4,641.4L576.1,634.9M577.3,642.7L584.2,633.7M567.2,628.6L559.7,623.4M587.4,629.6L592.9,622.4M565.3,668.5L555.2,660.7M556.3,669.6L564.2,659.5M546.6,654.1L538.5,647.9M567.7,655.0L573.9,647.0M640.2,641.1L631.2,635.3M632.8,642.7L638.6,633.7M620.5,628.4L613.3,623.7M641.3,629.6L646.0,622.4M623.4,668.1L613.5,661.1M615.1,669.6L621.7,659.5M603.0,653.8L595.1,648.2M624.7,655.0L630.0,647.0M604.5,698.5L593.6,690.2M595.3,700.0L602.8,688.6M583.4,682.3L574.7,675.7M606.0,683.6L612.0,674.4M681.4,667.7L671.8,661.5M673.9,669.6L679.3,659.5M659.4,653.5L651.7,648.5M681.7,655.0L686.0,647.0M666.2,698.0L655.5,690.6M657.8,700.0L663.9,688.6M643.2,682.0L634.8,676.0M666.5,683.6L671.4,674.4M739.5,667.4L730.1,661.8M732.7,669.6L736.9,659.5M715.8,653.2L708.3,648.8M738.7,655.0L742.0,647.0M727.9,697.7L717.5,691.0M720.3,700.0L725.0,688.6M703.1,681.7L694.8,676.3M727.0,683.6L730.8,674.4M714.7,732.1L703.1,723.9M706.2,734.5L711.6,721.5M688.7,713.9L679.5,707.4M713.9,715.8L718.1,705.4M797.6,667.1L788.4,662.0M791.5,669.6L794.4,659.5M772.3,653.0L764.9,649.0M795.7,655.0L798.0,647.0M789.6,697.4L779.4,691.3M782.8,700.0L786.1,688.6M763.0,681.4L754.8,676.6M787.5,683.6L790.2,674.4M780.6,731.7L769.1,724.3M773.0,734.5L776.7,721.5M752.5,713.6L743.3,707.7M778.3,715.8L781.3,705.4M855.7,667.0L846.6,662.2M850.3,669.6L852.0,659.5M828.7,652.9L821.5,649.1M852.7,655.0L854.0,647.0M851.3,697.1L841.2,691.5M845.3,700.0L847.2,688.6M822.9,681.3L814.8,676.7M848.0,683.6L849.5,674.4M846.5,731.4L835.1,724.6M839.7,734.5L841.8,721.5M816.3,713.3L807.2,707.9M842.8,715.8L844.5,705.4M913.2,697.0L903.0,691.7M907.9,700.0L908.3,688.6M882.8,681.1L874.7,676.9M908.5,683.6L908.9,674.4M912.4,731.2L901.0,724.8M906.4,734.5L907.0,721.5M880.1,713.2L870.9,708.1M907.2,715.8L907.6,705.4"/>
<path fill="none" stroke-width="2.0" d="M-12.6,774.1L-13.9,758.9M-19.7,770.5L-6.8,762.5M-14.4,752.6L-15.4,740.5M14.1,749.8L24.4,743.4M58.9,774.1L55.9,758.9M51.0,770.8L63.8,762.2M54.6,752.6L52.1,740.5M82.3,750.0L92.6,743.2M-8.9,819.7L-10.4,802.1M-17.0,815.8L-2.3,806.0M-10.9,794.9L-12.1,780.8M19.2,791.8L31.0,784.0M184.4,734.5L178.5,721.5M175.6,732.2L187.3,723.8M176.0,715.8L171.3,705.4M200.9,714.0L210.2,707.3M130.5,774.1L125.6,758.9M121.6,771.1L134.5,761.9M123.5,752.6L119.6,740.5M150.5,750.3L160.8,742.9M68.2,819.7L64.6,802.1M59.1,816.2L73.7,805.7M63.2,794.9L60.3,780.8M92.5,792.1L104.2,783.7M251.1,734.5L243.6,721.5M241.5,732.7L253.3,723.3M240.4,715.8L234.5,705.4M264.6,714.4L274.1,706.9M202.1,774.1L195.3,758.9M192.2,771.6L205.2,761.4M192.5,752.6L187.1,740.5M218.7,750.7L229.1,742.5M356.4,700.0L347.1,688.6M346.2,699.2L357.3,689.4M343.0,683.6L335.6,674.4M364.8,682.9L373.7,675.1M317.8,734.5L308.8,721.5M307.3,733.2L319.3,722.8M304.9,715.8L297.6,705.4M328.4,714.8L338.0,706.4M273.6,774.1L265.0,758.9M262.8,772.2L275.9,760.8M261.4,752.6L254.5,740.5M286.8,751.2L297.3,742.0M449.2,669.5L438.7,659.6M438.8,669.6L449.1,659.5M433.7,655.0L425.3,647.0M453.6,655.0L461.9,647.0M419.0,700.0L408.2,688.6M408.0,699.8L419.2,688.8M403.5,683.6L394.9,674.4M424.7,683.4L433.7,674.6M384.6,734.5L373.9,721.5M373.2,733.9L385.3,722.1M369.3,715.8L360.8,705.4M392.1,715.3L401.8,705.9M481.0,699.6L469.8,689.0M470.3,700.0L480.5,688.6M463.7,683.2L454.7,674.8M485.0,683.6L493.3,674.4M451.2,734.4L439.2,721.6M439.3,734.5L451.0,721.5M433.7,715.7L424.1,705.5M456.1,715.8L465.5,705.4M542.8,699.0L531.7,689.6M532.8,700.0L541.7,688.6M523.5,682.7L514.7,675.3M545.5,683.6L552.6,674.4M517.1,733.7L505.1,722.3M506.0,734.5L516.2,721.5M497.5,715.2L487.9,706.1M520.5,715.8L528.6,705.4M583.0,733.0L571.1,723.0M572.8,734.5L581.3,721.5M561.3,714.7L551.7,706.6M585.0,715.8L591.8,705.4M558.5,772.7L545.3,760.3M547.0,774.1L556.8,758.9M536.0,751.5L525.5,741.6M561.0,752.6L568.8,740.5M648.8,732.5L637.1,723.5M639.5,734.5L646.4,721.5M625.0,714.2L615.6,707.0M649.4,715.8L655.0,705.4M629.1,772.0L616.0,761.0M618.5,774.1L626.5,758.9M604.2,751.0L593.8,742.2M629.9,752.6L636.3,740.5M699.7,771.5L686.7,761.5M690.1,774.1L696.3,758.9M672.4,750.6L662.0,742.6M698.8,752.6L703.8,740.5M770.3,771.0L757.4,762.0M761.7,774.1L766.0,758.9M740.6,750.2L730.3,743.0M767.8,752.6L771.2,740.5M758.4,816.5L743.8,805.3M748.6,819.7L753.6,802.1M726.9,792.3L715.3,783.4M755.7,794.9L759.7,780.8M840.9,770.7L828.0,762.3M833.2,774.1L835.7,758.9M808.8,749.9L798.5,743.3M836.7,752.6L838.7,740.5M834.5,816.0L819.9,805.8M825.8,819.7L828.6,802.1M800.2,792.0L788.5,783.8M829.8,794.9L832.1,780.8M911.6,770.4L898.6,762.6M904.8,774.1L905.4,758.9M877.0,749.7L866.6,743.5M905.7,752.6L906.2,740.5M910.7,815.7L895.9,806.1M902.9,819.7L903.6,802.1M873.5,791.7L861.7,784.1M903.9,794.9L904.5,780.8"/>
<path fill="none" stroke-width="2.5" d="M145.4,819.7L139.6,802.1M135.2,816.7L149.8,805.2M137.3,794.9L132.7,780.8M165.8,792.5L177.4,783.3M222.5,819.7L214.6,802.1M211.3,817.3L225.8,804.6M211.4,794.9L205.1,780.8M239.1,793.0L250.7,782.8M345.2,774.1L334.7,758.9M333.4,772.9L346.5,760.1M330.4,752.6L322.0,740.5M355.0,751.7L365.5,741.4M299.7,819.7L289.6,802.1M287.4,818.0L301.9,803.8M285.5,794.9L277.5,780.8M312.4,793.6L323.9,782.2M416.8,774.1L404.5,758.9M404.1,773.7L417.1,759.3M399.3,752.6L389.5,740.5M423.3,752.4L433.7,740.8M376.8,819.7L364.6,802.1M363.6,818.9L377.9,802.9M359.7,794.9L349.9,780.8M385.7,794.3L397.1,781.5M487.8,773.5L474.7,759.5M475.4,774.1L487.1,758.9M467.8,752.2L457.4,741.0M492.0,752.6L501.4,740.5M453.9,819.6L439.8,802.3M440.0,819.7L453.6,802.1M433.7,794.8L422.4,781.0M459.2,794.9L470.1,780.8M530.1,818.6L515.7,803.2M517.1,819.7L528.6,802.1M507.1,794.0L495.5,781.7M533.3,794.9L542.5,780.8M606.2,817.8L591.7,804.1M594.3,819.7L603.6,802.1M580.4,793.4L568.8,782.4M607.4,794.9L614.9,780.8M682.3,817.1L667.8,804.8M671.4,819.7L678.6,802.1M653.6,792.8L642.0,783.0M681.6,794.9L687.3,780.8"/>
</g>
</g>
<!-- panel image -->
<defs>
<clipPath id="pin"><path d="M306,266.5 C360,268 430,265.5 490,267 C545,268.5 575,267.5 590,268.5 C608,269.5 618,280 618.3,300 C618.8,380 617.5,480 618.3,560 C618.8,620 618.4,650 618,670 C617.5,688 608,698.8 588,699 C520,699.8 420,698.2 340,699 C305,699.3 292,699.2 285,698 C273,695 269,685 269,668 C269.3,600 268.5,480 269.3,332 C269.5,302 270,288 276,279 C283,269 294,266.5 306,266.5 Z"/></clipPath>
<filter id="bl8" x="-10%" y="-10%" width="120%" height="120%"><feGaussianBlur stdDeviation="13"/></filter>
</defs>
<path d="M304,263 C360,264.5 430,262 490,263.5 C545,265 578,264 592,265 C612,266 621.5,277 621.8,300 C622.3,380 621,480 621.8,560 C622.3,620 622,655 621.5,675 C621,695 610,705.3 588,705.5 C520,706.3 420,704.8 340,705.5 C300,706 286,705.8 280,704.5 C268,701 265.5,690 265.5,670 C265.8,600 265,480 265.8,330 C266,300 266.5,285 273,275 C281,265 292,263 304,263 Z" fill="#d9a664"/>
<path d="M306,265.5 C360,267 430,264.5 490,266 C545,267.5 576,266.5 591,267.5 C609,268.5 619.3,279 619.6,300 C620,380 618.8,480 619.6,560 C620,620 619.6,652 619.2,672 C618.7,690 609,700.5 588,700.8 C520,701.6 420,700 340,700.8 C303,701.2 290,701 284,699.8 C272,696.5 268,686 268,668 C268.3,600 267.5,480 268.3,332 C268.5,302 269,287 275,278 C282,268 294,265.5 306,265.5 Z" fill="#e4bd7e"/>
<g clip-path="url(#pin)">
<rect x="260" y="260" width="370" height="450" fill="#f5e5ab"/>
<path d="M306,266.5 C360,268 430,265.5 490,267 C545,268.5 575,267.5 590,268.5 C608,269.5 618,280 618.3,300 C618.8,380 617.5,480 618.3,560 C618.8,620 618.4,650 618,670 C617.5,688 608,698.8 588,699 C520,699.8 420,698.2 340,699 C305,699.3 292,699.2 285,698 C273,695 269,685 269,668 C269.3,600 268.5,480 269.3,332 C269.5,302 270,288 276,279 C283,269 294,266.5 306,266.5 Z" fill="none" stroke="#e9cb8c" stroke-width="46" filter="url(#bl8)"/>
</g>
<!-- selection -->
<g fill="none" stroke="#f2f2f2" stroke-width="1.2" stroke-dasharray="5.5 3.5">
<rect x="262.5" y="262" width="360.5" height="444.3"/>
</g>
<g fill="none" stroke="#555" stroke-width="1.2" stroke-dasharray="3.5 5.5" stroke-dashoffset="-5.5" opacity="0.7">
<rect x="262.5" y="262" width="360.5" height="444.3"/>
</g>
<g fill="#fff">
<rect x="259.5" y="259" width="6" height="6"/><rect x="439.7" y="259" width="6" height="6"/><rect x="620" y="259" width="6" height="6"/>
<rect x="259.5" y="481" width="6" height="6"/><rect x="620" y="481" width="6" height="6"/>
<rect x="259.5" y="703.3" width="6" height="6"/><rect x="439.7" y="703.3" width="6" height="6"/><rect x="620" y="703.3" width="6" height="6"/>
<rect x="441" y="243" width="3.5" height="9"/><rect x="441" y="716" width="3.5" height="9"/>
<rect x="244.5" y="482.3" width="8.5" height="3.5"/><rect x="631" y="482.3" width="8.5" height="3.5"/>
</g>
<path d="M442.7,479.5 V488.5 M438.2,484 H447.2" stroke="#18a0e6" stroke-width="1.8"/>
<!-- gizmo -->
<g stroke-width="1.4">
<line x1="42.5" y1="724" x2="42.5" y2="749.5" stroke="#2030f0"/>
<line x1="42.5" y1="749.5" x2="63" y2="738.5" stroke="#e02020"/>
<line x1="42.5" y1="749.5" x2="63.5" y2="761.5" stroke="#20c020"/>
</g>
<g font-family="Liberation Sans" font-size="11">
<text x="38.5" y="724" fill="#2030f0">Z</text>
<text x="65.5" y="740" fill="#e02020">X</text>
<text x="65.5" y="770" fill="#20c020">Y</text>
</g>
</svg>

<!-- VIEWPORT TAB -->
<svg style="left:0;top:0" width="240" height="180">
<path d="M6,152 C6,147 8,144.3 11,144.3 C13.5,144.3 15,145.4 17,145.4 C19,145.4 20.5,144.3 22.5,144.3 C25.5,144.3 27,147.5 27,152.5 L26.8,154.8 L21,155.2 C17.5,155.2 14,155.8 11.5,157.5 L9,159 C7,159 6,156 6,152 Z" fill="#18a0e6"/>
<path d="M14.8,166 L23.8,157" stroke="#272a33" stroke-width="4"/>
<path d="M14.8,166 L23.5,157.3" stroke="#18a0e6" stroke-width="2.4"/>
<path d="M19.3,153.2 C21.3,151.3 23.6,151.3 25.6,153.3 L29,157 L27,159.3 L25.5,157.8 L24,159.2 L20.8,155.8 Z" fill="#18a0e6" stroke="#272a33" stroke-width="1"/>
<path d="M218.5,151 L228.5,161 M228.5,151 L218.5,161" stroke="#1ea0e6" stroke-width="2"/>
</svg>
<div class="t blue" style="left:36px;top:147.3px;font-size:17px">Media Content Tutorial</div>

<!-- PROPERTIES -->
<svg style="left:0;top:0" width="1470" height="800">
<path d="M906.34,147.47 L907.21,144.66 L911.79,144.66 L912.66,147.47 L912.31,147.32 L914.91,145.95 L918.15,149.19 L916.78,151.79 L916.63,151.44 L919.44,152.31 L919.44,156.89 L916.63,157.76 L916.78,157.41 L918.15,160.01 L914.91,163.25 L912.31,161.88 L912.66,161.73 L911.79,164.54 L907.21,164.54 L906.34,161.73 L906.69,161.88 L904.09,163.25 L900.85,160.01 L902.22,157.41 L902.37,157.76 L899.56,156.89 L899.56,152.31 L902.37,151.44 L902.22,151.79 L900.85,149.19 L904.09,145.95 L906.69,147.32 Z M912.90,154.60 A3.4,3.4 0 1 0 906.10,154.60 A3.4,3.4 0 1 0 912.90,154.60 Z" fill="#18a0e6" fill-rule="evenodd"/>
<path d="M909.2,165.8 L917.6,157.2" stroke="#272a33" stroke-width="5.6" stroke-linecap="round"/>
<path d="M915.5,152.3 C917.5,150.3 920.5,150.3 921.8,151.6 L919.4,154.2 L920.2,156.2 L922.3,156.8 L924.3,154.6 C925.5,156.2 925.2,159.2 923.2,161 C921.5,162.6 919,162.8 917.5,162 Z" fill="#272a33" stroke="#272a33" stroke-width="2"/>
<path d="M909.2,165.8 L917.6,157.2" stroke="#18a0e6" stroke-width="3.4" stroke-linecap="round"/>
<path d="M915.5,152.3 C917.5,150.3 920.5,150.3 921.8,151.6 L919.4,154.2 L920.2,156.2 L922.3,156.8 L924.3,154.6 C925.5,156.2 925.2,159.2 923.2,161 C921.5,162.6 919,162.8 917.5,162 Z" fill="#18a0e6"/>

<path d="M1017.5,151 L1027.5,161 M1027.5,151 L1017.5,161" stroke="#1ea0e6" stroke-width="2"/>
</svg>
<div class="t blue" style="left:929.5px;top:147.3px;font-size:17px">Properties</div>
<!-- header block -->
<div class="a" style="left:908px;top:188px;width:32px;height:30px;background:#18a0e6"></div>
<div class="a" style="left:910.8px;top:191.5px;width:26.3px;height:19.2px;background:#1c1f27"></div>
<svg style="left:0;top:0" width="1470" height="800">
<path d="M914.5,206.5 L919,199 C919,195 921,193.5 923,193.5 C925,193.5 926.7,195 927,197.5 L929.5,194 L935,206.5 Z" fill="#18a0e6"/>
<path d="M920.5,200 C920.5,197.5 921.8,195.7 923.3,195.7 C924.8,195.7 926,197 926.2,199" fill="none" stroke="#1c1f27" stroke-width="1.2"/>
</svg>
<div class="dk" style="left:955px;top:183px;width:494px;height:39.5px;border-radius:5px"></div>
<div class="t" style="left:961.5px;top:192.9px;font-size:15px;color:#ececee">Panel</div>
<div class="dk" style="left:901px;top:227.2px;width:470px;height:36.5px;border-radius:5px"></div>
<svg style="left:0;top:0" width="1470" height="800">
<circle cx="925.5" cy="241.3" r="5.3" fill="none" stroke="#18a0e6" stroke-width="2.2"/>
<path d="M920.7,246.5 L913.5,253" stroke="#18a0e6" stroke-width="3" stroke-linecap="round"/>
</svg>
<div class="t" style="left:936.5px;top:235.6px;font-size:15px;color:#7c7f87">Find Property by Name</div>
<div class="btn" style="left:1374px;top:227px;width:37px;height:37px;border-radius:5px"></div>
<div class="btn" style="left:1414px;top:227px;width:37px;height:37px;border-radius:5px;background:#1f6591"></div>
<svg style="left:0;top:0" width="1470" height="800">
<path d="M1384,240 H1386 V254 H1397 V255.8 H1384 Z" fill="#fff"/>
<path d="M1387,236.8 H1396 L1400,240.8 V253 H1387 Z" fill="none" stroke="#fff" stroke-width="1.5"/>
<path d="M1396,237 V240.8 H1400" fill="#fff" stroke="#fff" stroke-width="0.8"/>
<rect x="1426.5" y="239" width="13.2" height="16" fill="none" stroke="#2b2f38" stroke-width="1.6"/>
<rect x="1429.5" y="237.2" width="7.2" height="3" fill="#2b2f38"/>
<circle cx="1433.1" cy="236.8" r="1.3" fill="none" stroke="#2b2f38" stroke-width="1"/>
</svg>
<!-- properties scroll content (clipped) -->
<div class="a" style="left:893px;top:264px;width:570px;height:475px;overflow:hidden">
 <div class="a" style="left:0;top:0;width:565px;height:475px">
  <div class="t" style="left:28.8px;top:-11px;font-size:17px;color:#e4e4e6">Color</div>
  <div class="a" style="left:257.5px;top:-16px;width:268.5px;height:31px;background:#fff"></div>
  <div class="t" style="left:26.8px;top:27.2px;font-size:17px;color:#e4e4e6">Retain Aspect Ratio</div>
  <div class="dk" style="left:257px;top:21px;width:30px;height:29.5px"></div>
  <div class="t b" style="left:41px;top:60.2px;font-size:16.5px;color:#e8861a">Transform</div>
  <div class="t" style="left:36.8px;top:94.2px;font-size:17px;color:#e4e4e6">X Offset</div>
  <div class="t" style="left:36.8px;top:131.7px;font-size:17px;color:#e4e4e6">Y Offset</div>
  <div class="t" style="left:36.8px;top:168.5px;font-size:17px;color:#e4e4e6">Width</div>
  <div class="t" style="left:36.8px;top:206px;font-size:17px;color:#e4e4e6">Height</div>
  <div class="t" style="left:36.8px;top:243.5px;font-size:17px;color:#e4e4e6">Rotation Angle</div>
  <div class="t" style="left:36.8px;top:281px;font-size:17px;color:#e4e4e6">Inherit Parent Width</div>
  <div class="t" style="left:36.8px;top:318.5px;font-size:17px;color:#e4e4e6">Inherit Parent Height</div>
  <div class="a" style="left:36.8px;top:356px;width:196.5px;height:20px;overflow:hidden"><div class="t" style="left:0;top:0;font-size:17px;color:#e4e4e6;word-spacing:-1px">Add Self Size to Inherited Size</div></div>
  <div class="t" style="left:36.8px;top:393.5px;font-size:17px;color:#e4e4e6">Anchor</div>
  <div class="t" style="left:36.8px;top:432px;font-size:17px;color:#e4e4e6">Dock</div>
  <div class="dk" style="left:257.5px;top:87.5px;width:268px;height:32.5px"></div>
  <div class="dk" style="left:257.5px;top:125.5px;width:268px;height:31.5px"></div>
  <div class="dk" style="left:257.5px;top:162.5px;width:268px;height:32px"></div>
  <div class="dk" style="left:257.5px;top:200px;width:268px;height:31.5px"></div>
  <div class="dk" style="left:257.5px;top:237px;width:268px;height:32.5px"></div>
  <div class="t" style="left:263.5px;top:93.9px;font-size:16px;color:#ececee">0</div>
  <div class="t" style="left:263.5px;top:131.4px;font-size:16px;color:#ececee">0</div>
  <div class="t" style="left:263.5px;top:168.2px;font-size:16px;color:#ececee">640</div>
  <div class="t" style="left:263.5px;top:205.7px;font-size:16px;color:#ececee">789</div>
  <div class="t" style="left:263.5px;top:243.2px;font-size:16px;color:#ececee">0</div>
  <div class="dk" style="left:257px;top:276.5px;width:30px;height:29.5px"></div>
  <div class="dk" style="left:257px;top:314px;width:30px;height:29.5px"></div>
  <div class="dk" style="left:257px;top:351.5px;width:30px;height:29.5px"></div>
  <div class="btn" style="left:257px;top:387px;width:150px;height:32.5px"></div>
  <div class="btn" style="left:257px;top:425.5px;width:150px;height:32px"></div>
  <div class="t b w" style="left:266px;top:392.5px;font-size:16.5px">Middle Center</div>
  <div class="t b w" style="left:266px;top:430px;font-size:16.5px">Middle Center</div>
  <div class="t b" style="left:41px;top:465px;font-size:16.5px;color:#e8861a">Image Flip</div>
 </div>
 <svg style="left:0;top:0" width="570" height="475" viewBox="893 264 570 475">
  <path d="M1157.8,299.5 L1162.5,304.5 L1172,294.3" fill="none" stroke="#e8861a" stroke-width="3"/>
  <polygon points="916.7,329.8 926.5,329.8 921.6,336.2" fill="#e8861a"/>
  <polygon points="917.8,732.5 925,739.5 917.8,739.5" fill="#e8861a"/>
  <g fill="none" stroke-width="2">
   <g stroke="#3d414c">
   <path d="M1428.2,296.2 A6.3,6.3 0 1 1 1427.5,303" transform="translate(0,0)"/>
   <path d="M1428.2,364.2 A6.3,6.3 0 1 1 1427.5,371"/>
   <path d="M1428.2,401.7 A6.3,6.3 0 1 1 1427.5,408.5"/>
   <path d="M1428.2,513.7 A6.3,6.3 0 1 1 1427.5,520.5"/>
   <path d="M1428.2,551.2 A6.3,6.3 0 1 1 1427.5,558"/>
   <path d="M1428.2,588.7 A6.3,6.3 0 1 1 1427.5,595.5"/>
   <path d="M1428.2,626.2 A6.3,6.3 0 1 1 1427.5,633"/>
   </g>
   <g stroke="#1ea0e6" stroke-width="2.4">
   <path d="M1428.2,438.2 A6.3,6.3 0 1 1 1427.5,445"/>
   <path d="M1428.2,475.7 A6.3,6.3 0 1 1 1427.5,482.5"/>
   <path d="M1428.2,663.2 A6.3,6.3 0 1 1 1427.5,670"/>
   <path d="M1428.2,701.2 A6.3,6.3 0 1 1 1427.5,708"/>
   </g>
  </g>
  <g fill="#3d414c">
   <polygon points="1426,293 1431,296.5 1426,299.5"/>
   <polygon points="1426,361 1431,364.5 1426,367.5"/>
   <polygon points="1426,398.5 1431,402 1426,405"/>
   <polygon points="1426,510.5 1431,514 1426,517"/>
   <polygon points="1426,548 1431,551.5 1426,554.5"/>
   <polygon points="1426,585.5 1431,589 1426,592"/>
   <polygon points="1426,623 1431,626.5 1426,629.5"/>
  </g>
  <g fill="#1ea0e6">
   <polygon points="1425.5,434.5 1431.5,438.5 1425.5,442"/>
   <polygon points="1425.5,472 1431.5,476 1425.5,479.5"/>
   <polygon points="1425.5,659.5 1431.5,663.5 1425.5,667"/>
   <polygon points="1425.5,697.5 1431.5,701.5 1425.5,705"/>
  </g>
  <g fill="#fff">
   <polygon points="1281.5,664 1292.5,664 1287,670.5"/>
   <polygon points="1281.5,702 1292.5,702 1287,708.5"/>
  </g>
  <rect x="1456" y="269" width="5" height="470" fill="#1c1f27"/>
  <rect x="1456" y="391.7" width="5" height="212" fill="#18a0e6"/>
 </svg>
 <div class="a" style="left:0;top:0;width:563px;height:12px;background:linear-gradient(#15171c,rgba(39,42,51,0))"></div>
 <div class="a" style="left:2px;top:468px;width:561px;height:7px;background:linear-gradient(rgba(20,22,26,0),rgba(12,13,16,0.95))"></div>
</div>
<div class="btn" style="left:1070px;top:748px;width:212px;height:37px;border-radius:5px"></div>
<svg style="left:0;top:0" width="1470" height="800">
<path d="M1087.5,757 V775.5 M1078.5,766.2 H1097" stroke="#fff" stroke-width="4"/>
</svg>
<div class="t b w" style="left:1106px;top:756.5px;font-size:16px">Add Custom Property</div>

<!-- HIERARCHY -->
<svg style="left:0;top:0" width="1918" height="400">
<g fill="#18a0e6">
<rect x="1478.5" y="144" width="3.5" height="3.5"/><rect x="1478.5" y="153.3" width="3.5" height="3.5"/><rect x="1478.5" y="162.5" width="3.5" height="3.5"/>
<path d="M1484.5,144 H1502 V166 H1484.5 Z M1487.5,147.3 V151 H1499 V147.3 Z M1490,154 V157 H1499 V154 Z M1487.5,160 V163 H1499 V160 Z" fill-rule="evenodd"/>
</g>
<path d="M1589,151 L1599.5,161.3 M1599.5,151 L1589,161.3" stroke="#1ea0e6" stroke-width="2"/>
</svg>
<div class="t blue" style="left:1509px;top:147.3px;font-size:17px">Hierarchy</div>
<div class="btn" style="left:1483px;top:183px;width:385px;height:37.6px;border-radius:5px"></div>
<div class="btn" style="left:1873px;top:183px;width:37px;height:37.6px;border-radius:5px"></div>
<div class="t b w" style="left:1519px;top:192.4px;font-size:16.3px">Scene: Main</div>
<div class="dk" style="left:1483px;top:226px;width:291.7px;height:36.7px;border-radius:5px"></div>
<div class="t" style="left:1518.5px;top:234.2px;font-size:15px;color:#7c7f87">Search</div>
<div class="btn" style="left:1830px;top:226px;width:38px;height:36.7px;border-radius:5px"></div>
<div class="btn" style="left:1873px;top:226px;width:37px;height:36.7px;border-radius:5px"></div>
<svg style="left:0;top:0" width="1918" height="400">
<g>
<rect x="1490.5" y="198.5" width="19.8" height="13.3" fill="#fff"/>
<path d="M1490.5,193.5 L1509.8,191.8 L1510.2,195.6 L1490.5,197.3 Z" fill="#fff"/>
<path d="M1494,193.2 L1496.5,196.8 M1499,192.8 L1501.5,196.4 M1504,192.4 L1506.5,196" stroke="#18a0e6" stroke-width="1.3"/>
<path d="M1496.5,209.5 L1498.5,207 M1502.5,201 C1504.5,200.5 1506,200.5 1506,200.5 C1506,200.5 1506,202 1505.5,204 L1501,208.5 L1498.5,206 Z" fill="#18a0e6" stroke="#18a0e6" stroke-width="1"/>
</g>
<g transform="translate(390.5,0)">
<rect x="1490.5" y="198.5" width="19.8" height="13.3" fill="#fff"/>
<path d="M1490.5,193.5 L1509.8,191.8 L1510.2,195.6 L1490.5,197.3 Z" fill="#fff"/>
<path d="M1494,193.2 L1496.5,196.8 M1499,192.8 L1501.5,196.4 M1504,192.4 L1506.5,196" stroke="#18a0e6" stroke-width="1.3"/>
<path d="M1496.5,209.5 L1498.5,207 M1502.5,201 C1504.5,200.5 1506,200.5 1506,200.5 C1506,200.5 1506,202 1505.5,204 L1501,208.5 L1498.5,206 Z" fill="#18a0e6" stroke="#18a0e6" stroke-width="1"/>
</g>
<polygon points="1849.5,199.4 1859.8,199.4 1854.6,204.8" fill="#fff"/>
<circle cx="1506.5" cy="240.5" r="5.2" fill="none" stroke="#18a0e6" stroke-width="2.2"/>
<path d="M1502,245.5 L1495.5,251.5" stroke="#18a0e6" stroke-width="3" stroke-linecap="round"/>
<g fill="#18a0e6">
<path d="M1806,233.3 L1815.5,237.5 L1806,241.5 L1796.5,237.5 Z"/>
<path d="M1796.5,239.5 L1805,243.3 V253 L1796.5,249.3 Z"/>
<path d="M1815.5,239.5 L1807,243.3 V253 L1809,252 A5,5 0 0 1 1815.5,245 Z"/>
<circle cx="1814.5" cy="250.5" r="4.3"/>
</g>
<path d="M1839.4,234 H1857.6 L1851.2,243.5 V250.5 L1846.3,253.2 V243.5 Z" fill="#fff"/>
<path d="M1846.3,243.5 H1851.2 L1849,245.8 V247 Z" fill="#18a0e6" opacity="0"/>
<path d="M1891,252 H1901 M1891,236 V248 M1884,242.5 L1891,235.5 L1898,242.5" fill="none" stroke="#fff" stroke-width="2.3"/>
<rect x="1881.5" y="251.5" width="19" height="2.3" fill="#fff"/>
</svg>
<!-- tree -->
<svg style="left:0;top:0" width="1918" height="400">
<path d="M1482.5,287.5 L1489,292.3 L1482.5,297 Z" fill="none" stroke="#9a9ca2" stroke-width="1.2"/>
<path d="M1490.5,319 V329 H1481.2 Z" fill="#8a8c92"/>
<path d="M1499,296.3 V286.3 H1503.8 L1505.3,287.8 H1512.8 V291" fill="none" stroke="#fff" stroke-width="1.7"/>
<path d="M1499,296.3 L1501.8,290.8 H1514.2 L1512.5,294" fill="none" stroke="#fff" stroke-width="1.7"/>
<path d="M1499,296.3 H1506.5" stroke="#fff" stroke-width="1.7"/>
<g fill="#fff" stroke="#272a33" stroke-width="0.8">
<path d="M1511.2,292.6 L1515.6,294.8 L1511.2,297 L1506.8,294.8 Z"/>
<path d="M1506.8,295.6 L1510.8,297.6 V301.6 L1506.8,299.6 Z"/>
<path d="M1515.6,295.6 L1511.6,297.6 V301.6 L1515.6,299.6 Z"/>
</g>
<rect x="1498.5" y="318.6" width="15.8" height="14" fill="none" stroke="#fff" stroke-width="2"/>
<rect x="1510.6" y="350.3" width="16.4" height="15.7" fill="#fff"/>
<rect x="1513" y="352.6" width="11.7" height="9" fill="#272a33"/>
<path d="M1514.3,361 L1517,357 C1517,354.5 1518,353.8 1519.2,353.8 C1520.5,353.8 1521.3,354.8 1521.4,356 L1522,355 L1524.5,361 Z" fill="#fff"/>
<g fill="none" stroke="#fff" stroke-width="2">
<path d="M1862.5,293 C1866,287.5 1875.5,287.5 1879,293 C1875.5,298.5 1866,298.5 1862.5,293 Z"/>
<path d="M1862.5,325.8 C1866,320.3 1875.5,320.3 1879,325.8 C1875.5,331.3 1866,331.3 1862.5,325.8 Z"/>
<path d="M1862.5,358.5 C1866,353 1875.5,353 1879,358.5 C1875.5,364 1866,364 1862.5,358.5 Z"/>
</g>
<g fill="#fff"><circle cx="1870.8" cy="293" r="2.6"/><circle cx="1870.8" cy="325.8" r="2.6"/><circle cx="1870.8" cy="358.5" r="2.6"/></g>
<g fill="#1f2229">
<path d="M1889,293 H1902 V302 H1889 Z M1891.5,293 V290 A4,4 0 0 1 1899.5,290 V293 H1897.5 V290.3 A2,2 0 0 0 1893.5,290.3 V293 Z"/>
<path d="M1889,325.8 H1902 V334.8 H1889 Z M1891.5,325.8 V322.8 A4,4 0 0 1 1899.5,322.8 V325.8 H1897.5 V323.1 A2,2 0 0 0 1893.5,323.1 V325.8 Z"/>
<path d="M1889,358.5 H1902 V367.5 H1889 Z M1891.5,358.5 V355.5 A4,4 0 0 1 1899.5,355.5 V358.5 H1897.5 V355.8 A2,2 0 0 0 1893.5,355.8 V358.5 Z"/>
</g>
<rect x="1481.2" y="342.8" width="430.8" height="30.6" fill="none" stroke="#18a0e6" stroke-width="1.6"/>
</svg>
<div class="t" style="left:1525px;top:284.2px;font-size:17px;color:#ececee">Misc</div>
<div class="t" style="left:1525px;top:317px;font-size:17px;color:#ececee">UI Container</div>
<div class="t" style="left:1538px;top:348.9px;font-size:17px;color:#ececee">Panel</div>

<!-- BOTTOM TABS -->
<svg style="left:0;top:780px" width="1470" height="213" viewBox="0 780 1470 213">
<g fill="#18a0e6">
<path d="M6,807 H13.5 L15.5,809 H25.5 V811.5 H10 L8,823.5 H6 Z"/>
<path d="M10.5,812.5 H29 L27,818 L21,820 L16,823.5 H7.5 Z"/>
</g>
<path d="M29,813 L22.5,814.2 L16.5,821 L20.8,825.3 L27.8,819.5 Z" fill="#18a0e6" stroke="#272a33" stroke-width="1.3"/>
<circle cx="24.2" cy="817.6" r="1.5" fill="#272a33"/>
<path d="M17.5,818.5 L14,819.5 L13.5,821.5 L16.5,821.2 Z M21.5,823 L20.5,826.5 L18.5,827 L18.8,824 Z M16.5,823.5 L14,827 L16.8,829.5 L18.5,826 Z" fill="#18a0e6"/>
<path d="M164.5,812.5 L174.5,822.5 M174.5,812.5 L164.5,822.5" stroke="#1ea0e6" stroke-width="2"/>
<g fill="none" stroke="#555968" stroke-width="2.1">
<path d="M190,810 A1.5,1.5 0 0 1 192,808.5 H207 A1.6,1.6 0 0 1 208.5,810 V823 M190,810 H192 V827 A1.5,1.5 0 0 0 193.5,828 H209.5 A1.4,1.4 0 0 0 211,826.5 V823.5 H195 V826.5"/>
<path d="M197.5,813.5 L195.3,815.5 L197.5,817.5 M202,813.5 L204.2,815.5 L202,817.5" stroke-width="1.4"/>
<path d="M327,812.5 L337,822.5 M337,812.5 L327,822.5"/>
<path d="M490,812.5 L500,822.5 M500,812.5 L490,822.5"/>
<path d="M629.5,812.5 L639.5,822.5 M639.5,812.5 L629.5,822.5"/>
</g>
<path d="M363,806.5 L373.5,812.5 V823.5 L363,829.5 L352.5,823.5 V812.5 Z" fill="#555968"/>
<circle cx="363" cy="818" r="5.5" fill="#272a33" opacity="0"/>
<circle cx="363" cy="818" r="5.8" fill="#1c1f27"/>
<g fill="none" stroke="#555968" stroke-width="1.8">
<rect x="518.5" y="810" width="15" height="18" rx="1"/>
<path d="M522.5,815 H529.5 M522.5,819 H529.5 M522.5,823 H529.5"/>
</g>
<rect x="522.5" y="807.5" width="7" height="4" fill="#555968"/>
</svg>
<div class="t blue" style="left:36px;top:809.2px;font-size:17px">Project Content</div>
<div class="t" style="left:219px;top:809.2px;font-size:17px;color:#5f6370">Script Helper</div>
<div class="t" style="left:382px;top:809.4px;font-size:16.6px;color:#5f6370">Core Content</div>
<div class="t" style="left:546px;top:808.4px;font-size:16.3px;color:#5f6370">Event Log</div>

<!-- BOTTOM CONTENT -->
<svg style="left:0;top:780px" width="1470" height="213" viewBox="0 780 1470 213">
<polygon points="13,852.5 29,852.5 21,864" fill="#fff"/>
<rect x="376" y="843" width="5" height="150" fill="#1c1f27"/>
<rect x="376" y="843" width="5" height="101" fill="#18a0e6"/>
</svg>
<div class="t" style="left:40.3px;top:850px;font-size:17px;color:#ececee">All Content</div>
<div class="t blue" style="left:56px;top:887.6px;font-size:17px">My Templates</div>
<div class="t blue" style="left:56px;top:925px;font-size:17px">My Scripts</div>
<div class="t blue" style="left:56px;top:963px;font-size:17px">My Materials</div>
<div class="dk" style="left:390px;top:841px;width:500px;height:36.7px;border-radius:5px"></div>
<div class="t" style="left:425px;top:848.6px;font-size:15px;color:#7c7f87">Search</div>
<svg style="left:0;top:0" width="430" height="993"><circle cx="413.5" cy="853.5" r="5.2" fill="none" stroke="#18a0e6" stroke-width="2.2"/>
<path d="M409,858.5 L402.5,864.5" stroke="#18a0e6" stroke-width="3" stroke-linecap="round"/>
</svg>
<div class="btn" style="left:1216.5px;top:841.3px;width:37px;height:36.4px;border-radius:5px"></div>
<div class="btn" style="left:1259px;top:841.3px;width:56.5px;height:36.4px;border-radius:5px"></div>
<div class="btn" style="left:1321px;top:841.3px;width:143px;height:36.4px;border-radius:5px;background:#1f6591"></div>
<div class="t b" style="left:1329px;top:849px;font-size:16.3px;color:#2d3038">Publish Content</div>
<svg style="left:0;top:780px" width="1470" height="213" viewBox="0 780 1470 213">
<path d="M1223,868.5 V851 H1230.5 L1232.5,853.2 H1244.5 V856.5" fill="none" stroke="#fff" stroke-width="1.8"/>
<path d="M1227.5,857 H1250.5 L1246,869 H1223 Z" fill="#fff"/>
<path d="M1268,850 H1287 L1280.5,859.5 V866.5 L1275.5,869.2 V859.5 Z" fill="#fff"/><path d="M1275.5,861 L1280.5,859.5" stroke="#18a0e6" stroke-width="1"/>
<polygon points="1297,856 1308,856 1302.5,862" fill="#fff"/>
<rect x="391" y="884" width="30" height="30" fill="#1c1f27"/>
<rect x="391" y="917" width="30" height="30" fill="#1c1f27"/>
<rect x="928" y="884" width="30" height="30" fill="#1c1f27"/>
<rect x="928" y="917" width="30" height="30" fill="#1c1f27"/>
<rect x="928" y="949" width="30" height="30" fill="#1c1f27"/>
<rect x="392" y="894.5" width="28.5" height="9.5" rx="4" fill="#6cc43a"/>
<rect x="393" y="895" width="26" height="3.5" rx="1.7" fill="#8bd65a"/>
<circle cx="397.5" cy="899" r="2.5" fill="#f0b020"/>
<rect x="392" y="929" width="29" height="4.8" rx="2.4" fill="#f0a422"/>
<rect x="398" y="930.2" width="21" height="2.4" fill="#a87020"/>
<circle cx="394.5" cy="931.3" r="3" fill="#f7c030"/>
<rect x="390.9" y="948.9" width="535.5" height="31.8" fill="none" stroke="#18a0e6" stroke-width="1.8"/>
<rect x="394" y="949.5" width="24" height="29.5" rx="2.5" fill="#f3e3a6"/>
<rect x="395.5" y="951" width="21" height="26.5" rx="2" fill="#f5e6ad"/>
<circle cx="943" cy="898.5" r="13" fill="#fff"/>
<circle cx="943" cy="898.5" r="11.5" fill="#e03030"/>
<circle cx="943" cy="896" r="9" fill="#ec4545"/>
<path d="M939.2,894.7 L946.8,902.3 M946.8,894.7 L939.2,902.3" stroke="#fff" stroke-width="2.6"/>
<rect x="928" y="928.5" width="30" height="8" fill="#e2ba7e"/>
<path d="M928,963 C933,961 938,966 943,963 C948,961 953,966 958,963 L956,967 C951,969 947,965 943,967 C938,969 934,965 930,967 Z" fill="#8cd04a"/>
<rect x="936" y="961.5" width="14" height="4" fill="#a6e060"/>
</svg>
<div class="t" style="left:424px;top:889.2px;font-size:16.5px;color:#ececee">Buy</div>
<div class="t" style="left:424px;top:922px;font-size:16.5px;color:#ececee">Coins</div>
<div class="t" style="left:424px;top:953px;font-size:16.5px;color:#ececee">Panel</div>
<div class="t" style="left:961.4px;top:889.7px;font-size:17px;color:#ececee">Close Icon</div>
<div class="t" style="left:961.4px;top:922.5px;font-size:17px;color:#ececee">Item Panel</div>
<div class="t" style="left:961.4px;top:955px;font-size:17px;color:#ececee">Ribbon</div>
<div class="btn" style="left:1427px;top:990px;width:36.5px;height:10px;border-radius:5px"></div>

</body></html>
